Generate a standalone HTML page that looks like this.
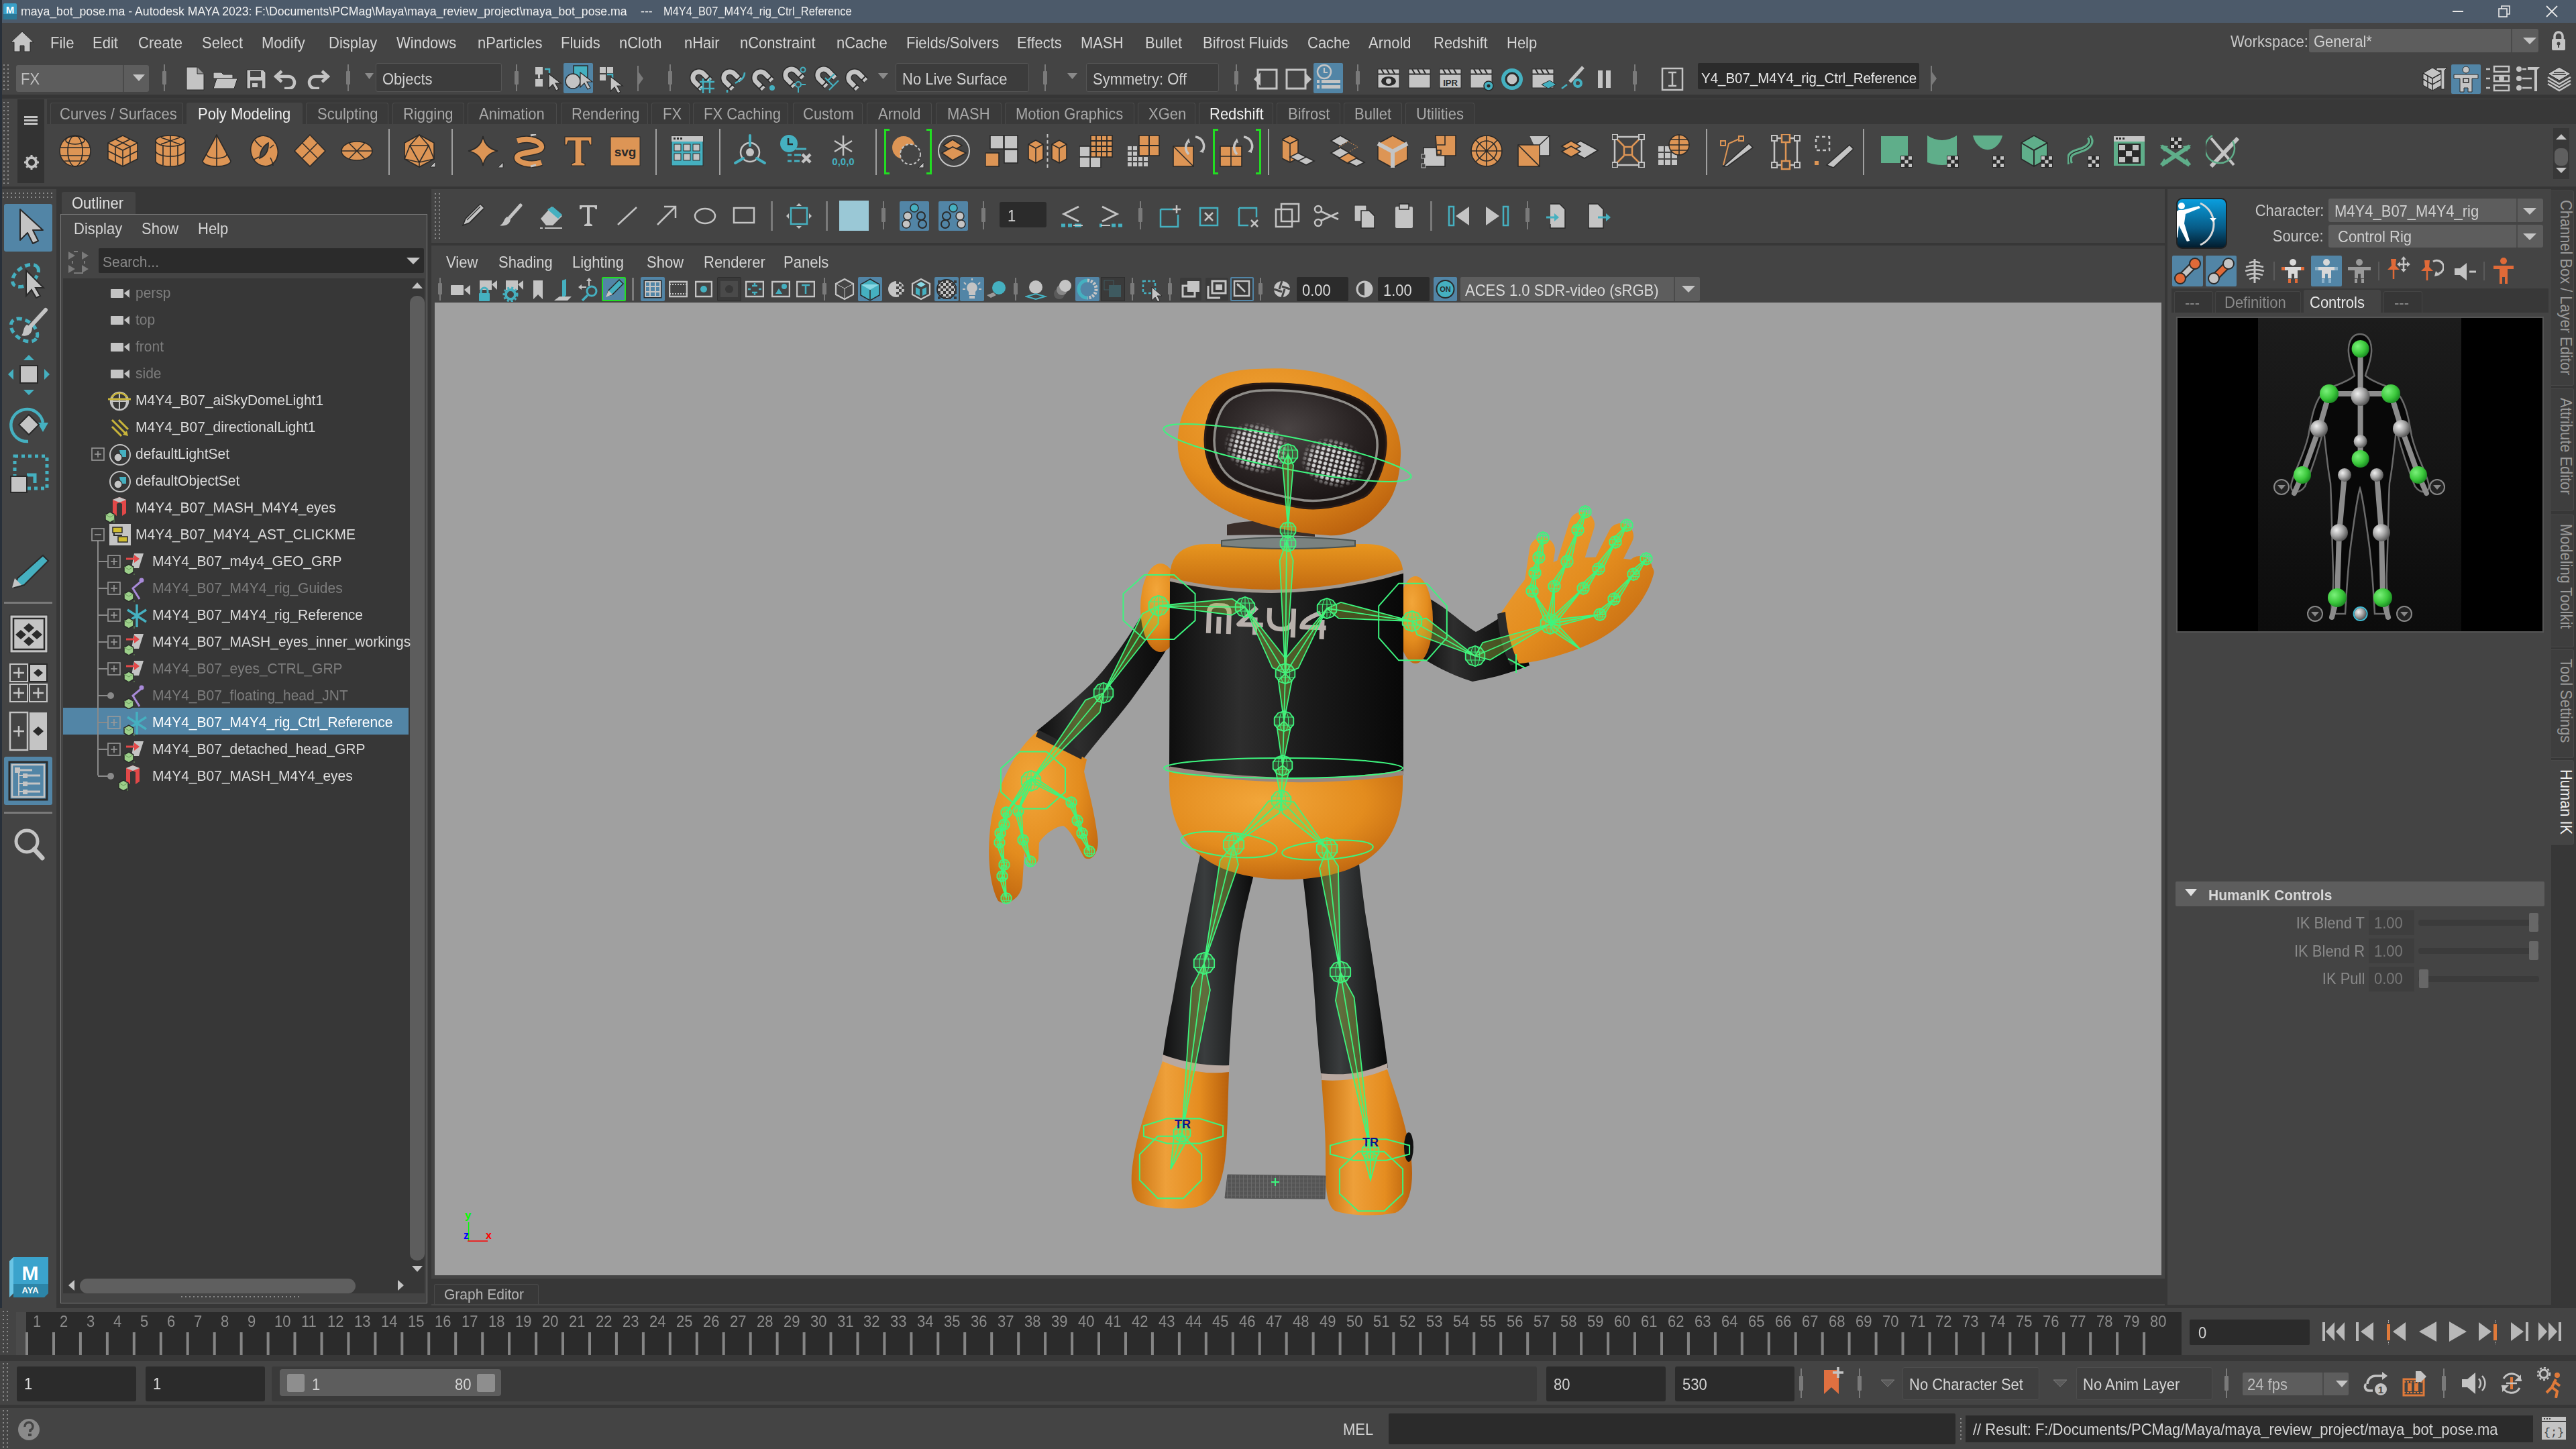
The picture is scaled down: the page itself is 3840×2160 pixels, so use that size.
<!DOCTYPE html><html><head><meta charset="utf-8"><style>
html,body{margin:0;padding:0;width:3840px;height:2160px;overflow:hidden;background:#444444;}
body{position:relative;font-family:"Liberation Sans",sans-serif;}
div,svg{position:absolute;box-sizing:border-box;}
.t{white-space:pre;line-height:normal;}
</style></head><body>
<div style="left:0px;top:0px;width:3840px;height:34px;background:#4c5a6a;"></div>
<div class="t" style="left:31px;top:5.8px;font-size:19.03px;color:#f2f2f2;transform-origin:left;transform:scaleX(0.93);">maya_bot_pose.ma - Autodesk MAYA 2023: F:\Documents\PCMag\Maya\maya_review_project\maya_bot_pose.ma</div>
<div class="t" style="left:955px;top:5.8px;font-size:19.03px;color:#f2f2f2;transform-origin:left;transform:scaleX(0.93);">---</div>
<div class="t" style="left:989px;top:7.0px;font-size:17.70px;color:#f2f2f2;transform-origin:left;transform:scaleX(0.93);">M4Y4_B07_M4Y4_rig_Ctrl_Reference</div>
<div style="left:0px;top:34px;width:3840px;height:58px;background:#444444;"></div>
<div class="t" style="left:74.5px;top:50.6px;font-size:23.66px;color:#d4d4d4;transform-origin:left;transform:scaleX(0.93);">File</div>
<div class="t" style="left:138px;top:50.6px;font-size:23.66px;color:#d4d4d4;transform-origin:left;transform:scaleX(0.93);">Edit</div>
<div class="t" style="left:206px;top:50.6px;font-size:23.66px;color:#d4d4d4;transform-origin:left;transform:scaleX(0.93);">Create</div>
<div class="t" style="left:300.6px;top:50.6px;font-size:23.66px;color:#d4d4d4;transform-origin:left;transform:scaleX(0.93);">Select</div>
<div class="t" style="left:390px;top:50.6px;font-size:23.66px;color:#d4d4d4;transform-origin:left;transform:scaleX(0.93);">Modify</div>
<div class="t" style="left:490px;top:50.6px;font-size:23.66px;color:#d4d4d4;transform-origin:left;transform:scaleX(0.93);">Display</div>
<div class="t" style="left:591px;top:50.6px;font-size:23.66px;color:#d4d4d4;transform-origin:left;transform:scaleX(0.93);">Windows</div>
<div class="t" style="left:712px;top:50.6px;font-size:23.66px;color:#d4d4d4;transform-origin:left;transform:scaleX(0.93);">nParticles</div>
<div class="t" style="left:836px;top:50.6px;font-size:23.66px;color:#d4d4d4;transform-origin:left;transform:scaleX(0.93);">Fluids</div>
<div class="t" style="left:923px;top:50.6px;font-size:23.66px;color:#d4d4d4;transform-origin:left;transform:scaleX(0.93);">nCloth</div>
<div class="t" style="left:1020px;top:50.6px;font-size:23.66px;color:#d4d4d4;transform-origin:left;transform:scaleX(0.93);">nHair</div>
<div class="t" style="left:1103px;top:50.6px;font-size:23.66px;color:#d4d4d4;transform-origin:left;transform:scaleX(0.93);">nConstraint</div>
<div class="t" style="left:1247px;top:50.6px;font-size:23.66px;color:#d4d4d4;transform-origin:left;transform:scaleX(0.93);">nCache</div>
<div class="t" style="left:1351px;top:50.6px;font-size:23.66px;color:#d4d4d4;transform-origin:left;transform:scaleX(0.93);">Fields/Solvers</div>
<div class="t" style="left:1516px;top:50.6px;font-size:23.66px;color:#d4d4d4;transform-origin:left;transform:scaleX(0.93);">Effects</div>
<div class="t" style="left:1611px;top:50.6px;font-size:23.66px;color:#d4d4d4;transform-origin:left;transform:scaleX(0.93);">MASH</div>
<div class="t" style="left:1707px;top:50.6px;font-size:23.66px;color:#d4d4d4;transform-origin:left;transform:scaleX(0.93);">Bullet</div>
<div class="t" style="left:1793px;top:50.6px;font-size:23.66px;color:#d4d4d4;transform-origin:left;transform:scaleX(0.93);">Bifrost Fluids</div>
<div class="t" style="left:1949px;top:50.6px;font-size:23.66px;color:#d4d4d4;transform-origin:left;transform:scaleX(0.93);">Cache</div>
<div class="t" style="left:2040px;top:50.6px;font-size:23.66px;color:#d4d4d4;transform-origin:left;transform:scaleX(0.93);">Arnold</div>
<div class="t" style="left:2137px;top:50.6px;font-size:23.66px;color:#d4d4d4;transform-origin:left;transform:scaleX(0.93);">Redshift</div>
<div class="t" style="left:2246px;top:50.6px;font-size:23.66px;color:#d4d4d4;transform-origin:left;transform:scaleX(0.93);">Help</div>
<div class="t" style="left:3325px;top:49.1px;font-size:23.66px;color:#c8c8c8;transform-origin:left;transform:scaleX(0.93);">Workspace:</div>
<div style="left:0px;top:92px;width:3840px;height:50px;background:#444444;"></div>
<div style="left:0px;top:141px;width:3840px;height:6px;background:#363636;"></div>
<div style="left:0px;top:147px;width:3840px;height:131px;background:#444444;"></div>
<div style="left:70px;top:148px;width:3770px;height:37px;background:#383838;"></div>
<div style="left:0px;top:278px;width:3840px;height:4px;background:#363636;"></div>
<div style="left:0px;top:282px;width:3840px;height:1668px;background:#373737;"></div>
<svg style="left:4px;top:4px" width="22" height="26" viewBox="0 0 22 26"><rect x="1" y="1" width="20" height="24" rx="2" fill="#3aa0c8"/><rect x="1" y="17" width="20" height="8" fill="#2a7796"/><text x="11" y="16" font-size="15" font-weight="bold" text-anchor="middle" fill="#fff" font-family="Liberation Sans">M</text></svg>
<svg style="left:3650px;top:10px" width="28" height="14" viewBox="0 0 28 14"><rect x="6" y="6" width="16" height="2" fill="#e8e8e8"/></svg>
<svg style="left:3722px;top:6px" width="22" height="22" viewBox="0 0 22 22"><rect x="3" y="7" width="12" height="12" fill="none" stroke="#e8e8e8" stroke-width="1.6"/><path d="M7 7V3h12v12h-4" fill="none" stroke="#e8e8e8" stroke-width="1.6"/></svg>
<svg style="left:3794px;top:7px" width="20" height="20" viewBox="0 0 20 20"><path d="M2 2L18 18M18 2L2 18" stroke="#e8e8e8" stroke-width="1.8"/></svg>
<svg style="left:14px;top:44px" width="38" height="36" viewBox="0 0 38 36"><path d="M19 3L2 19h5v14h9v-9h6v9h9V19h5z" fill="#c4c4c4" stroke="#2a2a2a" stroke-width="1"/></svg>
<div style="left:3442px;top:43px;width:342px;height:35px;background:#5d5d5d;border-radius:3px"></div>
<div style="left:3743px;top:43px;width:2px;height:35px;background:#4a4a4a;"></div>
<div class="t" style="left:3449px;top:49.1px;font-size:23.66px;color:#d0d0d0;transform-origin:left;transform:scaleX(0.93);">General*</div>
<svg style="left:3759px;top:54px" width="26" height="14" viewBox="0 0 26 14"><path d="M2 2h20L12 12z" fill="#c4c4c4"/></svg>
<svg style="left:3803px;top:45px" width="22" height="31" viewBox="0 0 22 31"><path d="M5 14V9a6 6 0 0 1 12 0v5" fill="none" stroke="#c4c4c4" stroke-width="3.5"/><rect x="1" y="13" width="20" height="17" rx="2" fill="#c4c4c4"/><circle cx="11" cy="20" r="2.5" fill="#444"/><rect x="10" y="20" width="2" height="6" fill="#444"/></svg>
<svg style="left:5px;top:94px;" width="12" height="44" viewBox="0 0 12 44"><rect x="0" y="2" width="2" height="2" fill="#8a8a8a"/><rect x="0" y="8" width="2" height="2" fill="#8a8a8a"/><rect x="0" y="14" width="2" height="2" fill="#8a8a8a"/><rect x="0" y="20" width="2" height="2" fill="#8a8a8a"/><rect x="0" y="26" width="2" height="2" fill="#8a8a8a"/><rect x="0" y="32" width="2" height="2" fill="#8a8a8a"/><rect x="0" y="38" width="2" height="2" fill="#8a8a8a"/><rect x="6" y="2" width="2" height="2" fill="#8a8a8a"/><rect x="6" y="8" width="2" height="2" fill="#8a8a8a"/><rect x="6" y="14" width="2" height="2" fill="#8a8a8a"/><rect x="6" y="20" width="2" height="2" fill="#8a8a8a"/><rect x="6" y="26" width="2" height="2" fill="#8a8a8a"/><rect x="6" y="32" width="2" height="2" fill="#8a8a8a"/><rect x="6" y="38" width="2" height="2" fill="#8a8a8a"/></svg>
<div style="left:24px;top:97px;width:198px;height:40px;background:#5d5d5d;border-radius:3px"></div>
<div style="left:183px;top:97px;width:2px;height:40px;background:#4a4a4a;"></div>
<div class="t" style="left:31px;top:104.6px;font-size:23.66px;color:#bdbdbd;transform-origin:left;transform:scaleX(0.93);">FX</div>
<svg style="left:196px;top:108px" width="26" height="16" viewBox="0 0 26 16"><path d="M2 3h18L11 13z" fill="#c4c4c4"/></svg>
<svg style="left:242px;top:96px;" width="6" height="40" viewBox="0 0 6 40"><rect x="2" y="0" width="2" height="40" fill="#7a7a7a"/><rect x="0" y="10" width="6" height="20" rx="1" fill="#7a7a7a"/></svg>
<svg style="left:276px;top:98px" width="30" height="38" viewBox="0 0 30 38"><path d="M2 2h16l10 10v24H2z" fill="#c4c4c4" stroke="#2a2a2a"/><path d="M18 2v10h10" fill="#999" stroke="#2a2a2a"/></svg>
<svg style="left:316px;top:104px" width="40" height="30" viewBox="0 0 40 30"><path d="M2 4h12l3 3h14v6H2z" fill="#c4c4c4" stroke="#2a2a2a"/><path d="M2 28l5-15h31l-5 15z" fill="#c4c4c4" stroke="#2a2a2a"/></svg>
<svg style="left:366px;top:102px" width="32" height="32" viewBox="0 0 32 32"><path d="M2 2h24l4 4v24H2z" fill="#c4c4c4" stroke="#2a2a2a"/><rect x="7" y="4" width="16" height="9" fill="#444"/><rect x="7" y="18" width="18" height="12" fill="#444"/><rect x="10" y="22" width="8" height="6" fill="#c4c4c4"/></svg>
<svg style="left:408px;top:103px" width="38" height="30" viewBox="0 0 38 30"><path d="M12 3L3 11l9 8" fill="none" stroke="#c4c4c4" stroke-width="4.5"/><path d="M4 11h18a9 9 0 0 1 0 18h-6" fill="none" stroke="#c4c4c4" stroke-width="4.5"/></svg>
<svg style="left:454px;top:103px" width="38" height="30" viewBox="0 0 38 30"><path d="M26 3l9 8-9 8" fill="none" stroke="#c4c4c4" stroke-width="4.5"/><path d="M34 11H16a9 9 0 0 0 0 18h6" fill="none" stroke="#c4c4c4" stroke-width="4.5"/></svg>
<svg style="left:516px;top:96px;" width="6" height="40" viewBox="0 0 6 40"><rect x="2" y="0" width="2" height="40" fill="#7a7a7a"/><rect x="0" y="10" width="6" height="20" rx="1" fill="#7a7a7a"/></svg>
<svg style="left:543px;top:108px" width="16" height="12" viewBox="0 0 16 12"><path d="M1 1h13L7.5 10z" fill="#8a8a8a"/></svg>
<div style="left:560px;top:94px;width:188px;height:43px;background:#3c3c3c;border:1px solid #555;border-radius:3px"></div>
<div class="t" style="left:570px;top:104.6px;font-size:23.66px;color:#d0d0d0;transform-origin:left;transform:scaleX(0.93);">Objects</div>
<svg style="left:767px;top:96px;" width="6" height="40" viewBox="0 0 6 40"><rect x="2" y="0" width="2" height="40" fill="#7a7a7a"/><rect x="0" y="10" width="6" height="20" rx="1" fill="#7a7a7a"/></svg>
<svg style="left:796px;top:96px" width="42" height="44" viewBox="0 0 42 44"><rect x="2" y="4" width="11" height="11" fill="#c4c4c4"/><rect x="6" y="15" width="3" height="6" fill="#c4c4c4"/><rect x="2" y="22" width="11" height="11" fill="#c4c4c4"/><path d="M16 7h7v6" fill="none" stroke="#45b0c0" stroke-width="2.5"/><path d="M22 14l0 22 6-6 5 9 4-2-5-9 8 0z" fill="#c4c4c4" stroke="#2a2a2a" stroke-width="1.2"/></svg>
<div style="left:840px;top:94px;width:44px;height:45px;background:#5285a6;border-radius:2px"></div>
<svg style="left:840px;top:94px" width="44" height="45" viewBox="0 0 44 45"><rect x="15" y="4" width="21" height="21" fill="#45b0c0" stroke="#2a2a2a" stroke-width="1.5"/><circle cx="14" cy="27" r="11" fill="#c4c4c4" stroke="#2a2a2a" stroke-width="1.5"/><path d="M25 14l0 22 6-6 5 9 4-2-5-9 8 0z" fill="#c4c4c4" stroke="#2a2a2a" stroke-width="1.2"/></svg>
<svg style="left:892px;top:96px" width="42" height="44" viewBox="0 0 42 44"><rect x="2" y="4" width="9" height="9" fill="#c4c4c4"/><rect x="13" y="4" width="9" height="9" fill="#c4c4c4"/><rect x="2" y="15" width="9" height="9" fill="#c4c4c4"/><path d="M13 15h8v6" fill="none" stroke="#45b0c0" stroke-width="2.5"/><path d="M18 18l0 22 6-6 5 9 4-2-5-9 8 0z" fill="#c4c4c4" stroke="#2a2a2a" stroke-width="1.2"/></svg>
<svg style="left:948px;top:96px" width="16" height="42" viewBox="0 0 16 42"><path d="M3 2v38" stroke="#7a7a7a" stroke-width="2"/><path d="M3 10l8 11-8 11z" fill="#7a7a7a"/></svg>
<svg style="left:996px;top:96px;" width="6" height="40" viewBox="0 0 6 40"><rect x="2" y="0" width="2" height="40" fill="#7a7a7a"/><rect x="0" y="10" width="6" height="20" rx="1" fill="#7a7a7a"/></svg>
<svg style="left:1026px;top:100px" width="40" height="40" viewBox="0 0 40 40"><g transform="rotate(-45 18 18)"><path d="M9 30V15a9 9 0 0 1 18 0v15" fill="none" stroke="#2a2a2a" stroke-width="10"/><path d="M9 30V15a9 9 0 0 1 18 0v15" fill="none" stroke="#c4c4c4" stroke-width="7"/><path d="M5 25h8M23 25h8" stroke="#2a2a2a" stroke-width="2"/></g><path d="M17 22h22M17 32h22M22 17v22M32 17v22" stroke="#45b0c0" stroke-width="2.5"/></svg>
<svg style="left:1072px;top:100px" width="40" height="40" viewBox="0 0 40 40"><g transform="rotate(-45 18 18)"><path d="M9 30V15a9 9 0 0 1 18 0v15" fill="none" stroke="#2a2a2a" stroke-width="10"/><path d="M9 30V15a9 9 0 0 1 18 0v15" fill="none" stroke="#c4c4c4" stroke-width="7"/><path d="M5 25h8M23 25h8" stroke="#2a2a2a" stroke-width="2"/></g><path d="M38 8c0 10-8 12-14 16" fill="none" stroke="#45b0c0" stroke-width="2.5"/><path d="M12 34v4" stroke="#45b0c0" stroke-width="2.5"/></svg>
<svg style="left:1118px;top:100px" width="40" height="40" viewBox="0 0 40 40"><g transform="rotate(-45 18 18)"><path d="M9 30V15a9 9 0 0 1 18 0v15" fill="none" stroke="#2a2a2a" stroke-width="10"/><path d="M9 30V15a9 9 0 0 1 18 0v15" fill="none" stroke="#c4c4c4" stroke-width="7"/><path d="M5 25h8M23 25h8" stroke="#2a2a2a" stroke-width="2"/></g><circle cx="33" cy="31" r="4" fill="#45b0c0"/></svg>
<svg style="left:1164px;top:96px" width="44" height="44" viewBox="0 0 44 44"><g transform="rotate(-45 18 18)"><path d="M9 30V15a9 9 0 0 1 18 0v15" fill="none" stroke="#2a2a2a" stroke-width="10"/><path d="M9 30V15a9 9 0 0 1 18 0v15" fill="none" stroke="#c4c4c4" stroke-width="7"/><path d="M5 25h8M23 25h8" stroke="#2a2a2a" stroke-width="2"/></g><circle cx="33" cy="8" r="3.5" fill="none" stroke="#45b0c0" stroke-width="2"/><circle cx="26" cy="30" r="4" fill="none" stroke="#45b0c0" stroke-width="2"/><path d="M26 35v7M31 30h6M19 30h2" stroke="#45b0c0" stroke-width="2"/></svg>
<svg style="left:1212px;top:96px" width="44" height="44" viewBox="0 0 44 44"><g transform="rotate(-45 18 18)"><path d="M9 30V15a9 9 0 0 1 18 0v15" fill="none" stroke="#2a2a2a" stroke-width="10"/><path d="M9 30V15a9 9 0 0 1 18 0v15" fill="none" stroke="#c4c4c4" stroke-width="7"/><path d="M5 25h8M23 25h8" stroke="#2a2a2a" stroke-width="2"/></g><path d="M18 20l12 12 8-8M22 24l10-10M30 32l-6 6" fill="none" stroke="#45b0c0" stroke-width="2.2"/></svg>
<svg style="left:1258px;top:100px" width="40" height="40" viewBox="0 0 40 40"><g transform="rotate(-45 18 18)"><path d="M9 30V15a9 9 0 0 1 18 0v15" fill="none" stroke="#2a2a2a" stroke-width="10"/><path d="M9 30V15a9 9 0 0 1 18 0v15" fill="none" stroke="#c4c4c4" stroke-width="7"/><path d="M5 25h8M23 25h8" stroke="#2a2a2a" stroke-width="2"/></g></svg>
<svg style="left:1308px;top:108px" width="18" height="12" viewBox="0 0 18 12"><path d="M1 1h15L8.5 10z" fill="#8a8a8a"/></svg>
<div style="left:1335px;top:94px;width:199px;height:43px;background:#3c3c3c;border:1px solid #555;border-radius:3px"></div>
<div class="t" style="left:1345px;top:104.6px;font-size:23.66px;color:#d0d0d0;transform-origin:left;transform:scaleX(0.93);">No Live Surface</div>
<svg style="left:1555px;top:96px;" width="6" height="40" viewBox="0 0 6 40"><rect x="2" y="0" width="2" height="40" fill="#7a7a7a"/><rect x="0" y="10" width="6" height="20" rx="1" fill="#7a7a7a"/></svg>
<svg style="left:1590px;top:108px" width="18" height="12" viewBox="0 0 18 12"><path d="M1 1h15L8.5 10z" fill="#8a8a8a"/></svg>
<div style="left:1619px;top:94px;width:198px;height:43px;background:#3c3c3c;border:1px solid #555;border-radius:3px"></div>
<div class="t" style="left:1629px;top:104.6px;font-size:23.66px;color:#d0d0d0;transform-origin:left;transform:scaleX(0.93);">Symmetry: Off</div>
<svg style="left:1840px;top:96px;" width="6" height="40" viewBox="0 0 6 40"><rect x="2" y="0" width="2" height="40" fill="#7a7a7a"/><rect x="0" y="10" width="6" height="20" rx="1" fill="#7a7a7a"/></svg>
<svg style="left:1866px;top:98px" width="40" height="40" viewBox="0 0 40 40"><path d="M3 20l10-10v20z" fill="#c4c4c4"/><rect x="9" y="6" width="28" height="28" fill="none" stroke="#c4c4c4" stroke-width="3"/></svg>
<svg style="left:1915px;top:98px" width="42" height="40" viewBox="0 0 42 40"><rect x="3" y="6" width="28" height="28" fill="none" stroke="#c4c4c4" stroke-width="3"/><path d="M30 10l10 10-10 10z" fill="#c4c4c4"/></svg>
<div style="left:1958px;top:94px;width:44px;height:45px;background:#5285a6;border-radius:2px"></div>
<svg style="left:1958px;top:94px" width="44" height="45" viewBox="0 0 44 45"><circle cx="16" cy="13" r="10" fill="none" stroke="#c4c4c4" stroke-width="2.5"/><path d="M16 7v7h5" stroke="#c4c4c4" stroke-width="2.2" fill="none"/><rect x="12" y="25" width="28" height="5" fill="#c4c4c4"/><rect x="12" y="33" width="28" height="5" fill="#c4c4c4"/><rect x="5" y="25" width="4" height="5" fill="#c4c4c4"/><rect x="5" y="33" width="4" height="5" fill="#c4c4c4"/></svg>
<svg style="left:2021px;top:96px;" width="6" height="40" viewBox="0 0 6 40"><rect x="2" y="0" width="2" height="40" fill="#7a7a7a"/><rect x="0" y="10" width="6" height="20" rx="1" fill="#7a7a7a"/></svg>
<svg style="left:2052px;top:98px" width="38" height="40" viewBox="0 0 38 40"><rect x="2" y="13" width="32" height="20" fill="#c4c4c4" stroke="#2a2a2a"/><path d="M2 5h32v7H2z" fill="#c4c4c4" stroke="#2a2a2a"/><path d="M7 5l4 7M15 5l4 7M23 5l4 7" stroke="#2a2a2a" stroke-width="2"/><ellipse cx="18" cy="23" rx="11" ry="7" fill="#2a2a2a"/><circle cx="18" cy="23" r="4" fill="#c4c4c4"/></svg>
<svg style="left:2098px;top:98px" width="38" height="40" viewBox="0 0 38 40"><rect x="2" y="13" width="32" height="20" fill="#c4c4c4" stroke="#2a2a2a"/><path d="M2 5h32v7H2z" fill="#c4c4c4" stroke="#2a2a2a"/><path d="M7 5l4 7M15 5l4 7M23 5l4 7" stroke="#2a2a2a" stroke-width="2"/></svg>
<svg style="left:2144px;top:98px" width="38" height="40" viewBox="0 0 38 40"><rect x="2" y="13" width="32" height="20" fill="#c4c4c4" stroke="#2a2a2a"/><path d="M2 5h32v7H2z" fill="#c4c4c4" stroke="#2a2a2a"/><path d="M7 5l4 7M15 5l4 7M23 5l4 7" stroke="#2a2a2a" stroke-width="2"/><text x="18" y="30" font-size="13" font-weight="bold" text-anchor="middle" fill="#2a2a2a" font-family="Liberation Sans">IPR</text></svg>
<svg style="left:2190px;top:98px" width="40" height="40" viewBox="0 0 40 40"><rect x="2" y="13" width="32" height="20" fill="#c4c4c4" stroke="#2a2a2a"/><path d="M2 5h32v7H2z" fill="#c4c4c4" stroke="#2a2a2a"/><path d="M7 5l4 7M15 5l4 7M23 5l4 7" stroke="#2a2a2a" stroke-width="2"/><circle cx="29" cy="30" r="7" fill="#45b0c0" stroke="#2a2a2a" stroke-width="1.5"/><circle cx="29" cy="30" r="2.5" fill="#2a2a2a"/></svg>
<svg style="left:2236px;top:100px" width="36" height="36" viewBox="0 0 36 36"><circle cx="18" cy="18" r="16" fill="#45b0c0"/><circle cx="18" cy="18" r="9" fill="#c4c4c4" stroke="#2a2a2a" stroke-width="3"/></svg>
<svg style="left:2282px;top:98px" width="40" height="40" viewBox="0 0 40 40"><rect x="2" y="13" width="32" height="20" fill="#c4c4c4" stroke="#2a2a2a"/><path d="M2 5h32v7H2z" fill="#c4c4c4" stroke="#2a2a2a"/><path d="M7 5l4 7M15 5l4 7M23 5l4 7" stroke="#2a2a2a" stroke-width="2"/><path d="M16 28l12-6 10 6-12 6z" fill="#45b0c0" stroke="#2a2a2a"/></svg>
<svg style="left:2326px;top:96px" width="40" height="42" viewBox="0 0 40 42"><path d="M14 26L34 4" stroke="#c4c4c4" stroke-width="5"/><circle cx="26" cy="28" r="7" fill="#45b0c0"/><circle cx="26" cy="28" r="3" fill="#444"/><path d="M2 36l8-6" stroke="#45b0c0" stroke-width="2.5"/></svg>
<svg style="left:2380px;top:103px" width="24" height="30" viewBox="0 0 24 30"><rect x="2" y="2" width="7" height="26" fill="#c4c4c4"/><rect x="14" y="2" width="7" height="26" fill="#c4c4c4"/></svg>
<svg style="left:2434px;top:96px;" width="6" height="40" viewBox="0 0 6 40"><rect x="2" y="0" width="2" height="40" fill="#7a7a7a"/><rect x="0" y="10" width="6" height="20" rx="1" fill="#7a7a7a"/></svg>
<svg style="left:2476px;top:98px" width="36" height="40" viewBox="0 0 36 40"><rect x="2" y="4" width="30" height="32" fill="none" stroke="#c4c4c4" stroke-width="2.5"/><path d="M11 10h12M11 30h12M17 10v20" stroke="#c4c4c4" stroke-width="2.5"/></svg>
<div style="left:2531px;top:94px;width:330px;height:39px;background:#2b2b2b;border-radius:2px"></div>
<div class="t" style="left:2536px;top:104.1px;font-size:22.04px;color:#e6e6e6;transform-origin:left;transform:scaleX(0.93);">Y4_B07_M4Y4_rig_Ctrl_Reference</div>
<svg style="left:2876px;top:96px" width="16" height="42" viewBox="0 0 16 42"><path d="M3 2v38" stroke="#7a7a7a" stroke-width="2"/><path d="M3 10l8 11-8 11z" fill="#7a7a7a"/></svg>
<svg style="left:3610px;top:97px" width="40" height="42" viewBox="0 0 40 42"><path d="M2 12l14-8 14 8v18l-14 8-14-8z" fill="#c4c4c4" stroke="#2a2a2a"/><path d="M2 12l14 8 14-8M16 20v18M9 16v18M2 21l14 8 14-8" stroke="#2a2a2a" stroke-width="1.5" fill="none"/><path d="M22 4h16l-4 4v28h-5V8h-7z" fill="#c4c4c4" stroke="#2a2a2a"/></svg>
<div style="left:3654px;top:96px;width:44px;height:44px;background:#5285a6;border-radius:2px"></div>
<svg style="left:3654px;top:96px" width="44" height="44" viewBox="0 0 44 44"><circle cx="22" cy="8" r="5" fill="#c4c4c4" stroke="#2a2a2a"/><path d="M4 15h36v6h-9v20h-6v-6h-6v6h-6V21H4z" fill="#c4c4c4" stroke="#2a2a2a"/><rect x="18" y="21" width="8" height="6" fill="none" stroke="#2a2a2a" stroke-width="1.5"/></svg>
<svg style="left:3704px;top:97px" width="38" height="42" viewBox="0 0 38 42"><path d="M2 6h6M2 20h6M2 34h6" stroke="#c4c4c4" stroke-width="2.5"/><rect x="14" y="2" width="22" height="8" fill="none" stroke="#c4c4c4" stroke-width="2.5"/><rect x="14" y="16" width="22" height="8" fill="none" stroke="#c4c4c4" stroke-width="2.5"/><circle cx="25" cy="20" r="4" fill="#c4c4c4"/><rect x="14" y="30" width="22" height="8" fill="none" stroke="#c4c4c4" stroke-width="2.5"/></svg>
<svg style="left:3750px;top:97px" width="38" height="42" viewBox="0 0 38 42"><circle cx="5" cy="6" r="4" fill="#c4c4c4"/><circle cx="5" cy="20" r="4" fill="#c4c4c4"/><circle cx="5" cy="34" r="4" fill="#c4c4c4"/><path d="M10 6h6M10 20h14M10 34h14" stroke="#c4c4c4" stroke-width="2.5"/><path d="M18 3h18l-4 4v32h-4V7h-10z" fill="#c4c4c4"/></svg>
<svg style="left:3796px;top:98px" width="38" height="40" viewBox="0 0 38 40"><path d="M19 2L36 12 19 22 2 12z" fill="#c4c4c4" stroke="#2a2a2a"/><path d="M2 17l17 10 17-10M2 22l17 10 17-10M2 27l17 10 17-10" fill="none" stroke="#c4c4c4" stroke-width="2.5"/><path d="M11 10h16M9 13h20" stroke="#2a2a2a" stroke-width="1.5"/></svg>
<svg style="left:5px;top:150px;" width="12" height="125" viewBox="0 0 12 125"><rect x="0" y="2" width="2" height="2" fill="#8a8a8a"/><rect x="0" y="8" width="2" height="2" fill="#8a8a8a"/><rect x="0" y="14" width="2" height="2" fill="#8a8a8a"/><rect x="0" y="20" width="2" height="2" fill="#8a8a8a"/><rect x="0" y="26" width="2" height="2" fill="#8a8a8a"/><rect x="0" y="32" width="2" height="2" fill="#8a8a8a"/><rect x="0" y="38" width="2" height="2" fill="#8a8a8a"/><rect x="0" y="44" width="2" height="2" fill="#8a8a8a"/><rect x="0" y="50" width="2" height="2" fill="#8a8a8a"/><rect x="0" y="56" width="2" height="2" fill="#8a8a8a"/><rect x="0" y="62" width="2" height="2" fill="#8a8a8a"/><rect x="0" y="68" width="2" height="2" fill="#8a8a8a"/><rect x="0" y="74" width="2" height="2" fill="#8a8a8a"/><rect x="0" y="80" width="2" height="2" fill="#8a8a8a"/><rect x="0" y="86" width="2" height="2" fill="#8a8a8a"/><rect x="0" y="92" width="2" height="2" fill="#8a8a8a"/><rect x="0" y="98" width="2" height="2" fill="#8a8a8a"/><rect x="0" y="104" width="2" height="2" fill="#8a8a8a"/><rect x="0" y="110" width="2" height="2" fill="#8a8a8a"/><rect x="0" y="116" width="2" height="2" fill="#8a8a8a"/><rect x="0" y="122" width="2" height="2" fill="#8a8a8a"/><rect x="6" y="2" width="2" height="2" fill="#8a8a8a"/><rect x="6" y="8" width="2" height="2" fill="#8a8a8a"/><rect x="6" y="14" width="2" height="2" fill="#8a8a8a"/><rect x="6" y="20" width="2" height="2" fill="#8a8a8a"/><rect x="6" y="26" width="2" height="2" fill="#8a8a8a"/><rect x="6" y="32" width="2" height="2" fill="#8a8a8a"/><rect x="6" y="38" width="2" height="2" fill="#8a8a8a"/><rect x="6" y="44" width="2" height="2" fill="#8a8a8a"/><rect x="6" y="50" width="2" height="2" fill="#8a8a8a"/><rect x="6" y="56" width="2" height="2" fill="#8a8a8a"/><rect x="6" y="62" width="2" height="2" fill="#8a8a8a"/><rect x="6" y="68" width="2" height="2" fill="#8a8a8a"/><rect x="6" y="74" width="2" height="2" fill="#8a8a8a"/><rect x="6" y="80" width="2" height="2" fill="#8a8a8a"/><rect x="6" y="86" width="2" height="2" fill="#8a8a8a"/><rect x="6" y="92" width="2" height="2" fill="#8a8a8a"/><rect x="6" y="98" width="2" height="2" fill="#8a8a8a"/><rect x="6" y="104" width="2" height="2" fill="#8a8a8a"/><rect x="6" y="110" width="2" height="2" fill="#8a8a8a"/><rect x="6" y="116" width="2" height="2" fill="#8a8a8a"/><rect x="6" y="122" width="2" height="2" fill="#8a8a8a"/></svg>
<div style="left:26px;top:148px;width:40px;height:125px;background:#333333;"></div>
<svg style="left:35px;top:172px" width="22" height="14" viewBox="0 0 22 14"><rect x="1" y="1" width="20" height="3" fill="#c4c4c4"/><rect x="1" y="6" width="20" height="3" fill="#c4c4c4"/><rect x="1" y="11" width="20" height="3" fill="#c4c4c4"/></svg>
<svg style="left:35px;top:230px" width="24" height="24" viewBox="0 0 24 24"><circle cx="12" cy="12" r="7" fill="none" stroke="#c4c4c4" stroke-width="4"/><rect x="10.5" y="1" width="3" height="5" fill="#c4c4c4" transform="rotate(0 12 12)"/><rect x="10.5" y="1" width="3" height="5" fill="#c4c4c4" transform="rotate(45 12 12)"/><rect x="10.5" y="1" width="3" height="5" fill="#c4c4c4" transform="rotate(90 12 12)"/><rect x="10.5" y="1" width="3" height="5" fill="#c4c4c4" transform="rotate(135 12 12)"/><rect x="10.5" y="1" width="3" height="5" fill="#c4c4c4" transform="rotate(180 12 12)"/><rect x="10.5" y="1" width="3" height="5" fill="#c4c4c4" transform="rotate(225 12 12)"/><rect x="10.5" y="1" width="3" height="5" fill="#c4c4c4" transform="rotate(270 12 12)"/><rect x="10.5" y="1" width="3" height="5" fill="#c4c4c4" transform="rotate(315 12 12)"/></svg>
<div style="left:74.5px;top:153px;width:198.5px;height:32px;background:#3a3a3a;border:1px solid #4a4a4a;border-bottom:none;border-radius:3px 3px 0 0"></div>
<div class="t" style="left:89px;top:156.6px;font-size:23.66px;color:#a8a8a8;transform-origin:left;transform:scaleX(0.93);">Curves / Surfaces</div>
<div style="left:278px;top:153px;width:173px;height:32px;background:#444444;border-radius:3px 3px 0 0"></div>
<div class="t" style="left:295px;top:156.6px;font-size:23.66px;color:#f0f0f0;transform-origin:left;transform:scaleX(0.93);">Poly Modeling</div>
<div style="left:456px;top:153px;width:123px;height:32px;background:#3a3a3a;border:1px solid #4a4a4a;border-bottom:none;border-radius:3px 3px 0 0"></div>
<div class="t" style="left:472.5px;top:156.6px;font-size:23.66px;color:#a8a8a8;transform-origin:left;transform:scaleX(0.93);">Sculpting</div>
<div style="left:585px;top:153px;width:107px;height:32px;background:#3a3a3a;border:1px solid #4a4a4a;border-bottom:none;border-radius:3px 3px 0 0"></div>
<div class="t" style="left:601px;top:156.6px;font-size:23.66px;color:#a8a8a8;transform-origin:left;transform:scaleX(0.93);">Rigging</div>
<div style="left:697px;top:153px;width:133px;height:32px;background:#3a3a3a;border:1px solid #4a4a4a;border-bottom:none;border-radius:3px 3px 0 0"></div>
<div class="t" style="left:714px;top:156.6px;font-size:23.66px;color:#a8a8a8;transform-origin:left;transform:scaleX(0.93);">Animation</div>
<div style="left:836px;top:153px;width:130px;height:32px;background:#3a3a3a;border:1px solid #4a4a4a;border-bottom:none;border-radius:3px 3px 0 0"></div>
<div class="t" style="left:851.7px;top:156.6px;font-size:23.66px;color:#a8a8a8;transform-origin:left;transform:scaleX(0.93);">Rendering</div>
<div style="left:971px;top:153px;width:56.59999999999991px;height:32px;background:#3a3a3a;border:1px solid #4a4a4a;border-bottom:none;border-radius:3px 3px 0 0"></div>
<div class="t" style="left:988px;top:156.6px;font-size:23.66px;color:#a8a8a8;transform-origin:left;transform:scaleX(0.93);">FX</div>
<div style="left:1032.5px;top:153px;width:142.5px;height:32px;background:#3a3a3a;border:1px solid #4a4a4a;border-bottom:none;border-radius:3px 3px 0 0"></div>
<div class="t" style="left:1049px;top:156.6px;font-size:23.66px;color:#a8a8a8;transform-origin:left;transform:scaleX(0.93);">FX Caching</div>
<div style="left:1181.6px;top:153px;width:104.40000000000009px;height:32px;background:#3a3a3a;border:1px solid #4a4a4a;border-bottom:none;border-radius:3px 3px 0 0"></div>
<div class="t" style="left:1196.5px;top:156.6px;font-size:23.66px;color:#a8a8a8;transform-origin:left;transform:scaleX(0.93);">Custom</div>
<div style="left:1292px;top:153px;width:97px;height:32px;background:#3a3a3a;border:1px solid #4a4a4a;border-bottom:none;border-radius:3px 3px 0 0"></div>
<div class="t" style="left:1308.8px;top:156.6px;font-size:23.66px;color:#a8a8a8;transform-origin:left;transform:scaleX(0.93);">Arnold</div>
<div style="left:1395px;top:153px;width:97.70000000000005px;height:32px;background:#3a3a3a;border:1px solid #4a4a4a;border-bottom:none;border-radius:3px 3px 0 0"></div>
<div class="t" style="left:1411.7px;top:156.6px;font-size:23.66px;color:#a8a8a8;transform-origin:left;transform:scaleX(0.93);">MASH</div>
<div style="left:1497.6px;top:153px;width:193.4000000000001px;height:32px;background:#3a3a3a;border:1px solid #4a4a4a;border-bottom:none;border-radius:3px 3px 0 0"></div>
<div class="t" style="left:1513.5px;top:156.6px;font-size:23.66px;color:#a8a8a8;transform-origin:left;transform:scaleX(0.93);">Motion Graphics</div>
<div style="left:1696px;top:153px;width:86px;height:32px;background:#3a3a3a;border:1px solid #4a4a4a;border-bottom:none;border-radius:3px 3px 0 0"></div>
<div class="t" style="left:1712px;top:156.6px;font-size:23.66px;color:#a8a8a8;transform-origin:left;transform:scaleX(0.93);">XGen</div>
<div style="left:1787px;top:153px;width:110.59999999999991px;height:32px;background:#3a3a3a;border:1px solid #4a4a4a;border-bottom:none;border-radius:3px 3px 0 0"></div>
<div class="t" style="left:1803px;top:156.6px;font-size:23.66px;color:#f0f0f0;transform-origin:left;transform:scaleX(0.93);">Redshift</div>
<div style="left:1902.6px;top:153px;width:95.40000000000009px;height:32px;background:#3a3a3a;border:1px solid #4a4a4a;border-bottom:none;border-radius:3px 3px 0 0"></div>
<div class="t" style="left:1919.5px;top:156.6px;font-size:23.66px;color:#a8a8a8;transform-origin:left;transform:scaleX(0.93);">Bifrost</div>
<div style="left:2003px;top:153px;width:87px;height:32px;background:#3a3a3a;border:1px solid #4a4a4a;border-bottom:none;border-radius:3px 3px 0 0"></div>
<div class="t" style="left:2019px;top:156.6px;font-size:23.66px;color:#a8a8a8;transform-origin:left;transform:scaleX(0.93);">Bullet</div>
<div style="left:2095px;top:153px;width:103px;height:32px;background:#3a3a3a;border:1px solid #4a4a4a;border-bottom:none;border-radius:3px 3px 0 0"></div>
<div class="t" style="left:2111px;top:156.6px;font-size:23.66px;color:#a8a8a8;transform-origin:left;transform:scaleX(0.93);">Utilities</div>
<div style="left:3806px;top:191px;width:24px;height:76px;background:#383838;"></div>
<svg style="left:3806px;top:196px" width="24" height="66" viewBox="0 0 24 66"><path d="M4 12l8-8 8 8z" fill="#c4c4c4"/><rect x="2" y="25" width="20" height="26" rx="8" fill="#5f5f5f"/><path d="M4 54l8 8 8-8z" fill="#c4c4c4"/></svg>
<svg style="left:88px;top:200px" width="48" height="50" viewBox="0 0 48 50"><circle cx="24" cy="25" r="23" fill="#dd9555" stroke="#2a2a2a" stroke-width="1.6"/><ellipse cx="24" cy="25" rx="11" ry="23" fill="none" stroke="#2a2a2a" stroke-width="1.6"/><path d="M2 20h44M3 32h42M8 40h32" stroke="#2a2a2a" stroke-width="1.6"/><ellipse cx="24" cy="9" rx="14" ry="6" fill="none" stroke="#2a2a2a" stroke-width="1.6"/></svg>
<svg style="left:159px;top:200px" width="48" height="50" viewBox="0 0 48 50"><path d="M24 2L46 13v24L24 48 2 37V13z" fill="#dd9555" stroke="#2a2a2a" stroke-width="1.6"/><path d="M2 13l22 11 22-11M24 24v24M13 7.5l22 11M35 7.5l-22 11M13 18.5v24M35 18.5v24M2 25l22 11 22-11" fill="none" stroke="#2a2a2a" stroke-width="1.6"/></svg>
<svg style="left:230px;top:200px" width="48" height="50" viewBox="0 0 48 50"><path d="M2 10a22 8 0 0 1 44 0v30a22 8 0 0 1-44 0z" fill="#dd9555" stroke="#2a2a2a" stroke-width="1.6"/><path d="M2 10a22 8 0 0 0 44 0M2 25a22 8 0 0 0 44 0M24 18v30M13 16v30M35 16v30M24 2v16M10 5l28 10M38 5l-28 10" fill="none" stroke="#2a2a2a" stroke-width="1.6"/></svg>
<svg style="left:299px;top:200px" width="48" height="50" viewBox="0 0 48 50"><path d="M24 1L3 40a21 8 0 0 0 42 0z" fill="#dd9555" stroke="#2a2a2a" stroke-width="1.6"/><path d="M24 1v47M9 30a15 6 0 0 0 30 0" fill="none" stroke="#2a2a2a" stroke-width="1.6"/></svg>
<svg style="left:370px;top:200px" width="48" height="50" viewBox="0 0 48 50"><ellipse cx="24" cy="25" rx="20" ry="23" transform="rotate(-18 24 25)" fill="#dd9555" stroke="#2a2a2a" stroke-width="1.6"/><path d="M17 36Q18 20 30 13Q31 30 17 36z" fill="#444" stroke="#2a2a2a" stroke-width="1.6"/><path d="M10 9q6 8 10 10M33 35q4 8 4 12M38 16l-6 5M8 38l8-4" stroke="#2a2a2a" stroke-width="1.6" fill="none"/></svg>
<svg style="left:438px;top:200px" width="48" height="50" viewBox="0 0 48 50"><path d="M24 1L47 25 24 48 1 25z" fill="#dd9555" stroke="#2a2a2a" stroke-width="1.6"/><path d="M12.5 13l23 23M35.5 13l-23 23" stroke="#2a2a2a" stroke-width="1.6"/></svg>
<svg style="left:508px;top:200px" width="48" height="50" viewBox="0 0 48 50"><ellipse cx="24" cy="25" rx="23" ry="14" fill="#dd9555" stroke="#2a2a2a" stroke-width="1.6"/><path d="M1 25h46M12 13l24 24M36 13L12 37" stroke="#2a2a2a" stroke-width="1.6"/></svg>
<div style="left:579px;top:192px;width:2px;height:69px;background:#a0a0a0;"></div>
<svg style="left:601px;top:200px" width="56" height="52" viewBox="0 0 56 52"><path d="M24 1l22 12v24L24 49 2 37V13z" fill="#dd9555" stroke="#2a2a2a" stroke-width="1.6"/><path d="M24 1L10 17h28zM10 17L2 37M38 17l8 20M10 17l14 25 14-25M2 37l22 5 22-5M24 42v7" fill="none" stroke="#2a2a2a" stroke-width="1.6"/><path d="M48 41v8h-8z" fill="#c4c4c4" stroke="#2a2a2a"/></svg>
<div style="left:673px;top:192px;width:2px;height:69px;background:#a0a0a0;"></div>
<svg style="left:696px;top:200px" width="56" height="52" viewBox="0 0 56 52"><path d="M24 3Q27 21 46 25Q27 29 24 47Q21 29 2 25Q21 21 24 3z" fill="#dd9555" stroke="#2a2a2a" stroke-width="1.6"/><path d="M54 42v8h-8z" fill="#c4c4c4" stroke="#2a2a2a"/></svg>
<svg style="left:765px;top:200px" width="50" height="50" viewBox="0 0 50 50"><path d="M6 10c20-6 38 2 36 10s-34 6-36 14 20 14 36 8" fill="none" stroke="#2a2a2a" stroke-width="11"/><path d="M6 10c20-6 38 2 36 10s-34 6-36 14 20 14 36 8" fill="none" stroke="#dd9555" stroke-width="8"/><path d="M26 2l8-2M26 48l8-2" stroke="#c4c4c4" stroke-width="3"/></svg>
<svg style="left:840px;top:200px" width="46" height="50" viewBox="0 0 46 50"><path d="M2 4h40v12h-3l-2-6h-10v32l5 2v3H12v-3l5-2V10H7l-2 6H2z" fill="#dd9555" stroke="#2a2a2a" stroke-width="1.2"/></svg>
<svg style="left:909px;top:200px" width="46" height="50" viewBox="0 0 46 50"><rect x="1" y="4" width="44" height="43" fill="#dd9555" stroke="#2a2a2a"/><text x="23" y="33" font-size="19" font-weight="bold" text-anchor="middle" fill="#2a2a2a" font-family="Liberation Sans">svg</text></svg>
<div style="left:977px;top:192px;width:2px;height:69px;background:#a0a0a0;"></div>
<svg style="left:1000px;top:200px" width="50" height="50" viewBox="0 0 50 50"><rect x="1" y="3" width="47" height="44" fill="#45b0c0" stroke="#2a2a2a"/><rect x="1" y="3" width="47" height="8" fill="#c4c4c4"/><rect x="4" y="5" width="3" height="3" fill="#2a2a2a"/><rect x="9" y="5" width="3" height="3" fill="#2a2a2a"/><rect x="14" y="5" width="3" height="3" fill="#2a2a2a"/><rect x="5" y="15" width="10" height="10" fill="#c4c4c4" stroke="#2a2a2a"/><rect x="19" y="15" width="10" height="10" fill="#c4c4c4" stroke="#2a2a2a"/><rect x="33" y="15" width="10" height="10" fill="#c4c4c4" stroke="#2a2a2a"/><rect x="5" y="29" width="10" height="10" fill="#c4c4c4" stroke="#2a2a2a"/><rect x="19" y="29" width="10" height="10" fill="#c4c4c4" stroke="#2a2a2a"/><rect x="33" y="29" width="10" height="10" fill="#c4c4c4" stroke="#2a2a2a"/></svg>
<div style="left:1072px;top:192px;width:2px;height:69px;background:#a0a0a0;"></div>
<svg style="left:1092px;top:200px" width="52" height="50" viewBox="0 0 52 50"><circle cx="26" cy="27" r="14" fill="none" stroke="#c4c4c4" stroke-width="2.5"/><circle cx="26" cy="27" r="6" fill="#c4c4c4"/><path d="M26 2v15M4 43l12-7M48 43l-12-7" stroke="#45b0c0" stroke-width="4" stroke-linecap="round"/></svg>
<svg style="left:1162px;top:200px" width="50" height="50" viewBox="0 0 50 50"><circle cx="14" cy="14" r="13" fill="#45b0c0"/><path d="M13 6v9h7" stroke="#2a2a2a" stroke-width="2.5" fill="none"/><path d="M24 22h16M12 31h6M22 31h10M12 40h6M22 40h8" stroke="#45b0c0" stroke-width="3"/><path d="M34 30l12 12M46 30L34 42" stroke="#c4c4c4" stroke-width="4.5"/></svg>
<svg style="left:1232px;top:200px" width="50" height="50" viewBox="0 0 50 50"><path d="M25 2v30M12 10l26 16M38 10L12 26" stroke="#c4c4c4" stroke-width="2.5"/><text x="25" y="46" font-size="15" font-weight="bold" text-anchor="middle" fill="#45b0c0" font-family="Liberation Sans">0,0,0</text></svg>
<div style="left:1305px;top:192px;width:2px;height:69px;background:#a0a0a0;"></div>
<div style="left:1318px;top:192px;width:3px;height:68px;background:#22dd22;"></div>
<div style="left:1318px;top:192px;width:8px;height:3px;background:#22dd22;"></div>
<div style="left:1318px;top:257px;width:8px;height:3px;background:#22dd22;"></div>
<div style="left:1386px;top:192px;width:3px;height:68px;background:#22dd22;"></div>
<div style="left:1381px;top:192px;width:8px;height:3px;background:#22dd22;"></div>
<div style="left:1381px;top:257px;width:8px;height:3px;background:#22dd22;"></div>
<svg style="left:1327px;top:200px" width="54" height="52" viewBox="0 0 54 52"><circle cx="20" cy="20" r="17" fill="#dd9555"/><circle cx="30" cy="30" r="15" fill="#444" stroke="#c4c4c4" stroke-width="2" stroke-dasharray="4 3"/><path d="M50 42v8h-8z" fill="#c4c4c4" stroke="#2a2a2a"/></svg>
<svg style="left:1398px;top:200px" width="50" height="50" viewBox="0 0 50 50"><circle cx="24" cy="25" r="23" fill="none" stroke="#c4c4c4" stroke-width="2"/><path d="M8 17l14-9 14 9-14 8z" fill="#dd9555" stroke="#2a2a2a" stroke-width="1.6"/><path d="M6 28l16-9 20 9-20 11z" fill="#dd9555" stroke="#2a2a2a" stroke-width="1.6"/></svg>
<svg style="left:1469px;top:200px" width="50" height="50" viewBox="0 0 50 50"><rect x="7" y="2" width="20" height="20" fill="#c4c4c4" stroke="#2a2a2a" stroke-width="1.6"/><rect x="28" y="2" width="20" height="20" fill="#c4c4c4" stroke="#2a2a2a" stroke-width="1.6"/><rect x="28" y="23" width="20" height="20" fill="#c4c4c4" stroke="#2a2a2a" stroke-width="1.6"/><rect x="0" y="28" width="20" height="20" fill="#dd9555" stroke="#2a2a2a" stroke-width="1.6"/></svg>
<svg style="left:1532px;top:200px" width="60" height="50" viewBox="0 0 60 50"><path d="M12 9l11 6v22l-11 6-11-6V15z" fill="#dd9555" stroke="#2a2a2a" stroke-width="1.6"/><path d="M1 15l11 6 11-6M12 21v22" fill="none" stroke="#2a2a2a" stroke-width="1.6"/><path d="M47 9l11 6v22l-11 6-11-6V15z" fill="#dd9555" stroke="#2a2a2a" stroke-width="1.6"/><path d="M36 15l11 6 11-6M47 21v22" fill="none" stroke="#2a2a2a" stroke-width="1.6"/><path d="M29.5 0v50" stroke="#c4c4c4" stroke-width="2" stroke-dasharray="5 4"/></svg>
<svg style="left:1609px;top:200px" width="50" height="50" viewBox="0 0 50 50"><rect x="0" y="18" width="16" height="16" fill="#c4c4c4" stroke="#2a2a2a" stroke-width="1.6"/><rect x="16" y="34" width="16" height="16" fill="#c4c4c4" stroke="#2a2a2a" stroke-width="1.6"/><rect x="0" y="34" width="16" height="16" fill="#c4c4c4" stroke="#2a2a2a" stroke-width="1.6"/><rect x="17" y="2" width="32" height="32" fill="#dd9555" stroke="#2a2a2a" stroke-width="1.6"/><path d="M25 2v32M33 2v32M41 2v32M17 10h32M17 18h32M17 26h32" stroke="#2a2a2a" stroke-width="1.8"/></svg>
<svg style="left:1680px;top:200px" width="50" height="50" viewBox="0 0 50 50"><rect x="18" y="2" width="30" height="30" fill="#dd9555" stroke="#2a2a2a" stroke-width="1.6"/><path d="M33 2v30M18 17h30" stroke="#2a2a2a" stroke-width="2"/><rect x="1" y="18" width="6" height="6" fill="#c4c4c4"/><rect x="9" y="18" width="6" height="6" fill="#c4c4c4"/><rect x="1" y="26" width="6" height="6" fill="#c4c4c4"/><rect x="9" y="26" width="6" height="6" fill="#c4c4c4"/><rect x="1" y="34" width="6" height="6" fill="#c4c4c4"/><rect x="9" y="34" width="6" height="6" fill="#c4c4c4"/><rect x="17" y="34" width="6" height="6" fill="#c4c4c4"/><rect x="25" y="34" width="6" height="6" fill="#c4c4c4"/><rect x="1" y="42" width="6" height="6" fill="#c4c4c4"/><rect x="9" y="42" width="6" height="6" fill="#c4c4c4"/><rect x="17" y="42" width="6" height="6" fill="#c4c4c4"/><rect x="25" y="42" width="6" height="6" fill="#c4c4c4"/></svg>
<svg style="left:1748px;top:200px" width="52" height="50" viewBox="0 0 52 50"><path d="M1 18h30v30H1z" fill="#dd9555" stroke="#2a2a2a" stroke-width="1.6"/><path d="M1 18l30 30" stroke="#2a2a2a" stroke-width="1.6"/><path d="M34 4a14 14 0 0 1 10 22M24 30a14 14 0 0 1-2-18" fill="none" stroke="#c4c4c4" stroke-width="3.5"/><path d="M40 26l6 2 0-7zM20 12l4-6 2 7z" fill="#c4c4c4"/></svg>
<div style="left:1808px;top:192px;width:3px;height:68px;background:#22dd22;"></div>
<div style="left:1808px;top:192px;width:8px;height:3px;background:#22dd22;"></div>
<div style="left:1808px;top:257px;width:8px;height:3px;background:#22dd22;"></div>
<div style="left:1877px;top:192px;width:3px;height:68px;background:#22dd22;"></div>
<div style="left:1872px;top:192px;width:8px;height:3px;background:#22dd22;"></div>
<div style="left:1872px;top:257px;width:8px;height:3px;background:#22dd22;"></div>
<svg style="left:1818px;top:200px" width="54" height="50" viewBox="0 0 54 50"><rect x="1" y="18" width="32" height="30" fill="#dd9555" stroke="#2a2a2a" stroke-width="1.6"/><path d="M17 18v30M1 33h32" stroke="#2a2a2a" stroke-width="1.6"/><path d="M36 4a14 14 0 0 1 10 22M26 30a14 14 0 0 1-2-18" fill="none" stroke="#c4c4c4" stroke-width="3.5"/><path d="M42 26l6 2 0-7zM22 12l4-6 2 7z" fill="#c4c4c4"/></svg>
<div style="left:1890px;top:192px;width:2px;height:69px;background:#a0a0a0;"></div>
<svg style="left:1911px;top:200px" width="50" height="50" viewBox="0 0 50 50"><path d="M12 2l12 6v28l-12 6-12-6V8z" fill="#dd9555" stroke="#2a2a2a" stroke-width="1.6"/><path d="M0 8l12 6 12-6M12 14v28" fill="none" stroke="#2a2a2a" stroke-width="1.6"/><path d="M24 28l12 6-12 6-12-6zM36 34l12 6-12 6-12-6z" fill="#c4c4c4" stroke="#2a2a2a" stroke-width="1.6"/></svg>
<svg style="left:1980px;top:200px" width="56" height="50" viewBox="0 0 56 50"><path d="M18 2l14 8-14 8-14-8z" fill="#c4c4c4" stroke="#2a2a2a" stroke-width="1.6"/><path d="M30 11l14 8-14 8-14-8z" fill="#444" stroke="#dd9555" stroke-dasharray="2 2"/><path d="M18 20l14 8-14 8-14-8z" fill="#c4c4c4" stroke="#2a2a2a" stroke-width="1.6"/><path d="M30 28l14 8-14 8-14-8z" fill="#dd9555" stroke="#2a2a2a" stroke-width="1.6"/><path d="M42 36l12 6-12 6-12-6z" fill="#c4c4c4" stroke="#2a2a2a" stroke-width="1.6"/></svg>
<svg style="left:2052px;top:200px" width="50" height="52" viewBox="0 0 50 52"><path d="M24 2l22 12v24L24 50 2 38V14z" fill="#dd9555" stroke="#2a2a2a" stroke-width="1.6"/><path d="M2 14l22 12 22-12M24 26v24" fill="none" stroke="#c4c4c4" stroke-width="6"/></svg>
<svg style="left:2118px;top:200px" width="56" height="52" viewBox="0 0 56 52"><rect x="4" y="20" width="32" height="28" fill="#c4c4c4" stroke="#2a2a2a" stroke-width="1.6"/><path d="M22 2h30v30H24z" fill="#dd9555" stroke="#2a2a2a" stroke-width="1.6"/><path d="M36 2v14H24" fill="none" stroke="#2a2a2a" stroke-width="1.6"/><rect x="24" y="24" width="6" height="6" fill="#dd9555" stroke="#2a2a2a" stroke-width="1.6"/><rect x="1" y="30" width="6" height="6" fill="#444" stroke="#c4c4c4"/><rect x="1" y="44" width="6" height="6" fill="#444" stroke="#c4c4c4"/></svg>
<svg style="left:2192px;top:200px" width="50" height="50" viewBox="0 0 50 50"><circle cx="24" cy="25" r="23" fill="#dd9555" stroke="#2a2a2a" stroke-width="1.6"/><circle cx="24" cy="25" r="15" fill="none" stroke="#2a2a2a" stroke-width="1.6"/><path d="M24 2v46M1 25h46M8 9l32 32M40 9L8 41" stroke="#2a2a2a" stroke-width="1.6"/></svg>
<svg style="left:2262px;top:200px" width="50" height="50" viewBox="0 0 50 50"><path d="M18 2h30v30H32" fill="#c4c4c4" stroke="#2a2a2a" stroke-width="1.6"/><path d="M1 16h32v32H1z" fill="#dd9555" stroke="#2a2a2a" stroke-width="1.6"/><path d="M1 16l32 32M33 16L48 2" stroke="#2a2a2a" stroke-width="1.6"/></svg>
<svg style="left:2326px;top:200px" width="58" height="50" viewBox="0 0 58 50"><path d="M30 10l26 14-20 12-26-14z" fill="#c4c4c4" stroke="#2a2a2a" stroke-width="1.6"/><path d="M2 18l14-8 14 8-14 8z" fill="#dd9555" stroke="#2a2a2a" stroke-width="1.6"/><path d="M2 26l14-8 14 8-14 8z" fill="#dd9555" stroke="#2a2a2a" stroke-width="1.6"/></svg>
<svg style="left:2403px;top:200px" width="50" height="50" viewBox="0 0 50 50"><rect x="4" y="4" width="40" height="42" fill="none" stroke="#c4c4c4" stroke-width="2.5"/><path d="M8 8l10 10M40 8L30 18M8 42l10-10M40 42L30 32" stroke="#dd9555" stroke-width="2.5"/><rect x="18" y="19" width="12" height="12" fill="none" stroke="#dd9555" stroke-width="2.5"/><rect x="0" y="0" width="8" height="8" fill="#444" stroke="#c4c4c4" stroke-width="2"/><rect x="40" y="0" width="8" height="8" fill="#444" stroke="#c4c4c4" stroke-width="2"/><rect x="0" y="42" width="8" height="8" fill="#444" stroke="#c4c4c4" stroke-width="2"/><rect x="40" y="42" width="8" height="8" fill="#444" stroke="#c4c4c4" stroke-width="2"/></svg>
<svg style="left:2471px;top:200px" width="50" height="50" viewBox="0 0 50 50"><rect x="1" y="18" width="8" height="8" fill="#c4c4c4"/><rect x="11" y="18" width="8" height="8" fill="#c4c4c4"/><rect x="21" y="18" width="8" height="8" fill="#c4c4c4"/><rect x="1" y="28" width="8" height="8" fill="#c4c4c4"/><rect x="11" y="28" width="8" height="8" fill="#c4c4c4"/><rect x="21" y="28" width="8" height="8" fill="#c4c4c4"/><rect x="1" y="38" width="8" height="8" fill="#c4c4c4"/><rect x="11" y="38" width="8" height="8" fill="#c4c4c4"/><rect x="21" y="38" width="8" height="8" fill="#c4c4c4"/><circle cx="32" cy="16" r="15" fill="#dd9555" stroke="#2a2a2a" stroke-width="1.6"/><path d="M17 16h30M32 1v30M20 8h24M20 24h24" stroke="#2a2a2a" stroke-width="1.6"/></svg>
<div style="left:2543px;top:192px;width:2px;height:69px;background:#a0a0a0;"></div>
<svg style="left:2563px;top:200px" width="56" height="50" viewBox="0 0 56 50"><path d="M6 46L14 14 32 6" fill="none" stroke="#dd9555" stroke-width="2"/><rect x="2" y="10" width="7" height="7" fill="#444" stroke="#dd9555" stroke-width="2"/><rect x="29" y="3" width="7" height="7" fill="#444" stroke="#dd9555" stroke-width="2"/><path d="M6 48l38-34 6 6-38 28z" fill="#c4c4c4" stroke="#2a2a2a" stroke-width="1.6"/></svg>
<svg style="left:2637px;top:200px" width="52" height="54" viewBox="0 0 52 54"><path d="M8 6v40M42 6v40M8 6h34M8 46h34" stroke="#c4c4c4" stroke-width="2.5"/><path d="M25 6v40" stroke="#dd9555" stroke-width="2.5"/><rect x="4" y="2" width="8" height="8" fill="#444" stroke="#c4c4c4" stroke-width="2"/><rect x="38" y="2" width="8" height="8" fill="#444" stroke="#c4c4c4" stroke-width="2"/><rect x="4" y="42" width="8" height="8" fill="#444" stroke="#c4c4c4" stroke-width="2"/><rect x="38" y="42" width="8" height="8" fill="#444" stroke="#c4c4c4" stroke-width="2"/><rect x="19" y="0" width="12" height="12" fill="#444" stroke="#dd9555" stroke-width="2.5"/><rect x="19" y="40" width="12" height="12" fill="#444" stroke="#dd9555" stroke-width="2.5"/></svg>
<svg style="left:2703px;top:200px" width="60" height="50" viewBox="0 0 60 50"><rect x="4" y="4" width="20" height="20" fill="none" stroke="#c4c4c4" stroke-width="2.5" stroke-dasharray="5 4"/><rect x="2" y="40" width="6" height="6" fill="#dd9555"/><path d="M20 46l34-30 6 6-30 28z" fill="#c4c4c4" stroke="#2a2a2a" stroke-width="1.6"/></svg>
<div style="left:2777px;top:192px;width:2px;height:69px;background:#a0a0a0;"></div>
<svg style="left:2803px;top:200px" width="52" height="50" viewBox="0 0 52 50"><rect x="1" y="3" width="40" height="40" fill="#5fae8a"/><rect x="30" y="32" width="18" height="18" fill="#2a2a2a"/><rect x="31.0" y="33.0" width="5" height="5" fill="#c4c4c4"/><rect x="42.0" y="33.0" width="5" height="5" fill="#c4c4c4"/><rect x="36.5" y="38.5" width="5" height="5" fill="#c4c4c4"/><rect x="31.0" y="44.0" width="5" height="5" fill="#c4c4c4"/><rect x="42.0" y="44.0" width="5" height="5" fill="#c4c4c4"/></svg>
<svg style="left:2872px;top:200px" width="52" height="50" viewBox="0 0 52 50"><path d="M1 2q22 14 44 0v40q-22 8-44 0z" fill="#5fae8a"/><rect x="30" y="32" width="18" height="18" fill="#2a2a2a"/><rect x="31.0" y="33.0" width="5" height="5" fill="#c4c4c4"/><rect x="42.0" y="33.0" width="5" height="5" fill="#c4c4c4"/><rect x="36.5" y="38.5" width="5" height="5" fill="#c4c4c4"/><rect x="31.0" y="44.0" width="5" height="5" fill="#c4c4c4"/><rect x="42.0" y="44.0" width="5" height="5" fill="#c4c4c4"/></svg>
<svg style="left:2940px;top:200px" width="52" height="50" viewBox="0 0 52 50"><path d="M1 2q22 22 44 0a23 22 0 0 1-44 0z" fill="#5fae8a"/><path d="M1 2a23 30 0 0 0 44 0" fill="#5fae8a"/><rect x="30" y="32" width="18" height="18" fill="#2a2a2a"/><rect x="31.0" y="33.0" width="5" height="5" fill="#c4c4c4"/><rect x="42.0" y="33.0" width="5" height="5" fill="#c4c4c4"/><rect x="36.5" y="38.5" width="5" height="5" fill="#c4c4c4"/><rect x="31.0" y="44.0" width="5" height="5" fill="#c4c4c4"/><rect x="42.0" y="44.0" width="5" height="5" fill="#c4c4c4"/></svg>
<svg style="left:3012px;top:200px" width="52" height="50" viewBox="0 0 52 50"><path d="M20 2l20 11v24L20 48 1 37V13z" fill="#5fae8a" stroke="#2a2a2a" stroke-width="1.6"/><path d="M1 13l19 11 20-11M20 24v24" fill="none" stroke="#2a2a2a" stroke-width="2"/><rect x="30" y="32" width="18" height="18" fill="#2a2a2a"/><rect x="31.0" y="33.0" width="5" height="5" fill="#c4c4c4"/><rect x="42.0" y="33.0" width="5" height="5" fill="#c4c4c4"/><rect x="36.5" y="38.5" width="5" height="5" fill="#c4c4c4"/><rect x="31.0" y="44.0" width="5" height="5" fill="#c4c4c4"/><rect x="42.0" y="44.0" width="5" height="5" fill="#c4c4c4"/></svg>
<svg style="left:3082px;top:200px" width="52" height="50" viewBox="0 0 52 50"><path d="M4 44c-6-20 12-16 24-24s4-16 4-16" fill="none" stroke="#5fae8a" stroke-width="8"/><path d="M4 44c-6-20 12-16 24-24s4-16 4-16" fill="none" stroke="#2a2a2a" stroke-width="1.5"/><rect x="30" y="32" width="18" height="18" fill="#2a2a2a"/><rect x="31.0" y="33.0" width="5" height="5" fill="#c4c4c4"/><rect x="42.0" y="33.0" width="5" height="5" fill="#c4c4c4"/><rect x="36.5" y="38.5" width="5" height="5" fill="#c4c4c4"/><rect x="31.0" y="44.0" width="5" height="5" fill="#c4c4c4"/><rect x="42.0" y="44.0" width="5" height="5" fill="#c4c4c4"/></svg>
<svg style="left:3150px;top:200px" width="50" height="50" viewBox="0 0 50 50"><rect x="1" y="3" width="46" height="44" fill="#5fae8a"/><rect x="1" y="3" width="46" height="8" fill="#c4c4c4"/><rect x="4" y="5" width="3" height="3" fill="#2a2a2a"/><rect x="9" y="5" width="3" height="3" fill="#2a2a2a"/><rect x="14" y="5" width="3" height="3" fill="#2a2a2a"/><rect x="7" y="14" width="34" height="30" fill="#2a2a2a"/><rect x="9" y="16" width="9" height="8" fill="#c4c4c4"/><rect x="29" y="16" width="9" height="8" fill="#c4c4c4"/><rect x="19" y="25" width="9" height="8" fill="#c4c4c4"/><rect x="9" y="34" width="9" height="8" fill="#c4c4c4"/><rect x="29" y="34" width="9" height="8" fill="#c4c4c4"/></svg>
<svg style="left:3218px;top:200px" width="52" height="50" viewBox="0 0 52 50"><path d="M4 46L46 18M4 18l42 28" stroke="#5fae8a" stroke-width="6"/><path d="M2 46l12-2-6-8zM48 46l-12-2 6-8zM2 16l12 2-6 8zM48 16l-12 2 6 8z" fill="#5fae8a"/><rect x="17" y="4" width="18" height="18" fill="#2a2a2a"/><rect x="18.0" y="5.0" width="5" height="5" fill="#c4c4c4"/><rect x="29.0" y="5.0" width="5" height="5" fill="#c4c4c4"/><rect x="23.5" y="10.5" width="5" height="5" fill="#c4c4c4"/><rect x="18.0" y="16.0" width="5" height="5" fill="#c4c4c4"/><rect x="29.0" y="16.0" width="5" height="5" fill="#c4c4c4"/></svg>
<svg style="left:3288px;top:200px" width="52" height="50" viewBox="0 0 52 50"><path d="M8 48L48 6" stroke="#c4c4c4" stroke-width="6"/><path d="M8 6l34 40" stroke="#c4c4c4" stroke-width="4"/><path d="M10 2a22 22 0 1 0 30 8" fill="none" stroke="#5fae8a" stroke-width="2.5"/></svg>
<div style="left:0px;top:282px;width:84px;height:1668px;background:#444444;"></div>
<svg style="left:0px;top:287px;" width="84" height="8" viewBox="0 0 84 8"><rect x="4" y="0" width="2" height="2" fill="#8a8a8a"/><rect x="4" y="6" width="2" height="2" fill="#8a8a8a"/><rect x="10" y="0" width="2" height="2" fill="#8a8a8a"/><rect x="10" y="6" width="2" height="2" fill="#8a8a8a"/><rect x="16" y="0" width="2" height="2" fill="#8a8a8a"/><rect x="16" y="6" width="2" height="2" fill="#8a8a8a"/><rect x="22" y="0" width="2" height="2" fill="#8a8a8a"/><rect x="22" y="6" width="2" height="2" fill="#8a8a8a"/><rect x="28" y="0" width="2" height="2" fill="#8a8a8a"/><rect x="28" y="6" width="2" height="2" fill="#8a8a8a"/><rect x="34" y="0" width="2" height="2" fill="#8a8a8a"/><rect x="34" y="6" width="2" height="2" fill="#8a8a8a"/><rect x="40" y="0" width="2" height="2" fill="#8a8a8a"/><rect x="40" y="6" width="2" height="2" fill="#8a8a8a"/><rect x="46" y="0" width="2" height="2" fill="#8a8a8a"/><rect x="46" y="6" width="2" height="2" fill="#8a8a8a"/><rect x="52" y="0" width="2" height="2" fill="#8a8a8a"/><rect x="52" y="6" width="2" height="2" fill="#8a8a8a"/><rect x="58" y="0" width="2" height="2" fill="#8a8a8a"/><rect x="58" y="6" width="2" height="2" fill="#8a8a8a"/><rect x="64" y="0" width="2" height="2" fill="#8a8a8a"/><rect x="64" y="6" width="2" height="2" fill="#8a8a8a"/><rect x="70" y="0" width="2" height="2" fill="#8a8a8a"/><rect x="70" y="6" width="2" height="2" fill="#8a8a8a"/><rect x="76" y="0" width="2" height="2" fill="#8a8a8a"/><rect x="76" y="6" width="2" height="2" fill="#8a8a8a"/></svg>
<div style="left:92px;top:286px;width:110px;height:33px;background:#444444;border-radius:3px 3px 0 0"></div>
<div class="t" style="left:107px;top:289.6px;font-size:23.66px;color:#e0e0e0;transform-origin:left;transform:scaleX(0.93);">Outliner</div>
<div style="left:90px;top:319px;width:547px;height:1624px;background:#444444;border:1px solid #7a7a7a"></div>
<div class="t" style="left:110px;top:327.6px;font-size:23.66px;color:#d4d4d4;transform-origin:left;transform:scaleX(0.93);">Display</div>
<div class="t" style="left:211px;top:327.6px;font-size:23.66px;color:#d4d4d4;transform-origin:left;transform:scaleX(0.93);">Show</div>
<div class="t" style="left:295px;top:327.6px;font-size:23.66px;color:#d4d4d4;transform-origin:left;transform:scaleX(0.93);">Help</div>
<div style="left:147px;top:370px;width:485px;height:37px;background:#2b2b2b;border-radius:2px"></div>
<div class="t" style="left:153px;top:377.6px;font-size:22.58px;color:#8a8a8a;transform-origin:left;transform:scaleX(0.93);">Search...</div>
<div style="left:94px;top:415px;width:539px;height:1513px;background:#373737;"></div>
<div style="left:611px;top:441px;width:22px;height:1438px;background:#5d5d5d;border-radius:10px"></div>
<div style="left:119px;top:1906px;width:411px;height:22px;background:#5f5f5f;border-radius:11px"></div>
<div style="left:6px;top:304px;width:72px;height:71px;background:#5285a6;border-radius:3px"></div>
<svg style="left:6px;top:304px" width="72" height="71" viewBox="0 0 72 71"><path d="M24 8v46l11-11 8 16 8-4-8-16h15z" fill="#c4c4c4" stroke="#2a2a2a" stroke-width="2" stroke-linejoin="round"/></svg>
<svg style="left:6px;top:385px" width="72" height="60" viewBox="0 0 72 60"><ellipse cx="32" cy="26" rx="22" ry="13" transform="rotate(-35 32 26)" fill="none" stroke="#45b0c0" stroke-width="5" stroke-dasharray="8 5"/><path d="M33 18v38l8-9 7 12 6-3-7-12h12z" fill="#c4c4c4" stroke="#2a2a2a" stroke-width="2"/></svg>
<svg style="left:6px;top:456px" width="72" height="62" viewBox="0 0 72 62"><ellipse cx="30" cy="36" rx="22" ry="14" transform="rotate(35 30 36)" fill="none" stroke="#45b0c0" stroke-width="5" stroke-dasharray="8 5"/><path d="M62 6L40 30" stroke="#c4c4c4" stroke-width="6" stroke-linecap="round"/><path d="M26 44c6 2 16 0 16-12l-8-4c-6 4-4 12-8 16z" fill="#c4c4c4"/></svg>
<svg style="left:6px;top:525px" width="72" height="68" viewBox="0 0 72 68"><rect x="24" y="20" width="26" height="26" fill="#c4c4c4" stroke="#2a2a2a" stroke-width="2"/><path d="M37 4l8 8H29zM37 64l8-8H29zM6 33l8-8v16zM68 33l-8-8v16z" fill="#45b0c0"/></svg>
<svg style="left:6px;top:600px" width="72" height="66" viewBox="0 0 72 66"><path d="M36 58A24 24 0 1 1 58 30" fill="none" stroke="#45b0c0" stroke-width="4.5"/><path d="M50 30h16l-8 14z" fill="#45b0c0"/><path d="M37 18l15 15-15 15-15-15z" fill="#c4c4c4" stroke="#2a2a2a" stroke-width="2"/></svg>
<svg style="left:6px;top:676px" width="72" height="62" viewBox="0 0 72 62"><rect x="16" y="4" width="48" height="48" fill="none" stroke="#45b0c0" stroke-width="5" stroke-dasharray="5 5"/><path d="M34 32h12v12" fill="none" stroke="#45b0c0" stroke-width="5"/><rect x="10" y="34" width="24" height="24" fill="#c4c4c4" stroke="#2a2a2a" stroke-width="2"/></svg>
<svg style="left:6px;top:820px" width="72" height="62" viewBox="0 0 72 62"><path d="M58 8l8 8-36 36-14 4 4-14z" fill="#45b0c0" stroke="#2a2a2a" stroke-width="2"/><path d="M16 42l-4 14 14-4z" fill="#c4c4c4"/></svg>
<div style="left:6px;top:897px;width:72px;height:3px;background:#7a7a7a;"></div>
<svg style="left:6px;top:915px" width="72" height="62" viewBox="0 0 72 62"><rect x="9" y="2" width="56" height="56" fill="#c4c4c4" stroke="#2a2a2a" stroke-width="1"/><rect x="14" y="7" width="46" height="46" fill="none" stroke="#2a2a2a" stroke-width="2.5"/><path d="M37 14l8 7-8 7-8-7zM25 24l8 7-8 7-8-7zM49 24l8 7-8 7-8-7zM37 34l8 7-8 7-8-7z" fill="#2a2a2a"/></svg>
<svg style="left:6px;top:986px" width="72" height="64" viewBox="0 0 72 64"><rect x="9" y="4" width="26" height="26" fill="#444" stroke="#2a2a2a" stroke-width="2"/><rect x="38" y="4" width="26" height="26" fill="#c4c4c4" stroke="#2a2a2a" stroke-width="2"/><rect x="9" y="34" width="26" height="26" fill="#444" stroke="#2a2a2a" stroke-width="2"/><rect x="38" y="34" width="26" height="26" fill="#444" stroke="#2a2a2a" stroke-width="2"/><path d="M22 9v16M14 17h16M22 39v16M14 47h16M51 39v16M43 47h16" stroke="#c4c4c4" stroke-width="2.5"/><rect x="9" y="4" width="26" height="26" fill="none" stroke="#c4c4c4" stroke-width="2"/><rect x="9" y="34" width="26" height="26" fill="none" stroke="#c4c4c4" stroke-width="2"/><rect x="38" y="34" width="26" height="26" fill="none" stroke="#c4c4c4" stroke-width="2"/><path d="M51 11l7 6-7 6-7-6z" fill="#2a2a2a"/></svg>
<svg style="left:6px;top:1060px" width="72" height="62" viewBox="0 0 72 62"><rect x="9" y="2" width="26" height="56" fill="none" stroke="#c4c4c4" stroke-width="2.5"/><rect x="38" y="2" width="26" height="56" fill="#c4c4c4"/><path d="M22 22v16M14 30h16" stroke="#c4c4c4" stroke-width="2.5"/><path d="M51 23l8 7-8 7-8-7z" fill="#2a2a2a"/></svg>
<div style="left:6px;top:1128px;width:72px;height:72px;background:#5285a6;border-radius:3px"></div>
<svg style="left:6px;top:1128px" width="72" height="72" viewBox="0 0 72 72"><rect x="8" y="8" width="56" height="56" fill="none" stroke="#2a2a2a" stroke-width="3"/><rect x="12" y="12" width="48" height="48" fill="none" stroke="#c4c4c4" stroke-width="2.5"/><path d="M22 20v38M22 28h8M22 40h8M22 52h8" stroke="#c4c4c4" stroke-width="2"/><rect x="16" y="16" width="8" height="8" fill="#c4c4c4"/><path d="M24 20h18M34 28h20M34 40h20M34 52h20" stroke="#c4c4c4" stroke-width="3"/><rect x="28" y="25" width="7" height="7" fill="#c4c4c4"/><rect x="28" y="37" width="7" height="7" fill="#c4c4c4"/><rect x="28" y="49" width="7" height="7" fill="#c4c4c4"/></svg>
<div style="left:6px;top:1210px;width:72px;height:3px;background:#7a7a7a;"></div>
<svg style="left:6px;top:1228px" width="72" height="60" viewBox="0 0 72 60"><circle cx="34" cy="26" r="16" fill="none" stroke="#c4c4c4" stroke-width="5"/><path d="M45 38l12 13" stroke="#c4c4c4" stroke-width="7" stroke-linecap="round"/></svg>
<svg style="left:12px;top:1870px" width="62" height="68" viewBox="0 0 62 68"><path d="M8 4h46l6 6v48l-6 6H8z" fill="#2c85a8"/><path d="M2 10l6-6v54l-6 6z" fill="#6ac4e4"/><rect x="8" y="4" width="52" height="40" fill="#3ba3cc"/><text x="33" y="38" font-size="30" font-weight="bold" text-anchor="middle" fill="#fff" font-family="Liberation Sans">M</text><text x="33" y="58" font-size="13" font-weight="bold" text-anchor="middle" fill="#fff" font-family="Liberation Sans">AYA</text></svg>
<div style="left:0px;top:0px;width:3px;height:2160px;background:#28303a;"></div>
<div style="left:94px;top:1055px;width:515px;height:40px;background:#5285a6;"></div>
<div style="left:145px;top:806px;width:2px;height:350px;background:#8a8a8a;"></div>
<svg style="left:164px;top:426.5px" width="30" height="20" viewBox="0 0 30 20"><rect x="1" y="4" width="19" height="13" rx="1" fill="#c4c4c4"/><path d="M21 10l8-6v13z" fill="#c4c4c4"/></svg>
<div class="t" style="left:202px;top:424.1px;font-size:22.58px;color:#7d7d7d;transform-origin:left;transform:scaleX(0.93);">persp</div>
<svg style="left:164px;top:466.5px" width="30" height="20" viewBox="0 0 30 20"><rect x="1" y="4" width="19" height="13" rx="1" fill="#c4c4c4"/><path d="M21 10l8-6v13z" fill="#c4c4c4"/></svg>
<div class="t" style="left:202px;top:464.1px;font-size:22.58px;color:#7d7d7d;transform-origin:left;transform:scaleX(0.93);">top</div>
<svg style="left:164px;top:506.5px" width="30" height="20" viewBox="0 0 30 20"><rect x="1" y="4" width="19" height="13" rx="1" fill="#c4c4c4"/><path d="M21 10l8-6v13z" fill="#c4c4c4"/></svg>
<div class="t" style="left:202px;top:504.1px;font-size:22.58px;color:#7d7d7d;transform-origin:left;transform:scaleX(0.93);">front</div>
<svg style="left:164px;top:546.5px" width="30" height="20" viewBox="0 0 30 20"><rect x="1" y="4" width="19" height="13" rx="1" fill="#c4c4c4"/><path d="M21 10l8-6v13z" fill="#c4c4c4"/></svg>
<div class="t" style="left:202px;top:544.1px;font-size:22.58px;color:#7d7d7d;transform-origin:left;transform:scaleX(0.93);">side</div>
<svg style="left:160px;top:581.5px" width="38" height="32" viewBox="0 0 38 32"><circle cx="18" cy="16" r="13" fill="none" stroke="#c4c4c4" stroke-width="2.5"/><path d="M5 16h26M18 3v26M10 6c-4 6-4 14 0 20M26 6c4 6 4 14 0 20" fill="none" stroke="#c4c4c4" stroke-width="2"/><path d="M1 13h34" stroke="#c8b43a" stroke-width="3"/><path d="M6 10q12-12 24 0" fill="none" stroke="#c8b43a" stroke-width="2.5"/></svg>
<div class="t" style="left:202px;top:584.1px;font-size:22.58px;color:#dcdcdc;transform-origin:left;transform:scaleX(0.93);">M4Y4_B07_aiSkyDomeLight1</div>
<svg style="left:164px;top:622.5px" width="30" height="30" viewBox="0 0 30 30"><path d="M3 3l22 22M13 3l14 14M3 13l14 14" stroke="#c8b43a" stroke-width="3"/><path d="M27 27l-8-2 6-6z" fill="#c8b43a"/></svg>
<div class="t" style="left:202px;top:624.1px;font-size:22.58px;color:#dcdcdc;transform-origin:left;transform:scaleX(0.93);">M4Y4_B07_directionalLight1</div>
<svg style="left:136px;top:666.5px" width="20" height="20" viewBox="0 0 20 20"><rect x="1" y="1" width="18" height="18" fill="none" stroke="#9a9a9a" stroke-width="1.6"/><path d="M5 10h10" stroke="#9a9a9a" stroke-width="1.6"/><path d="M10 5v10" stroke="#9a9a9a" stroke-width="1.6"/></svg>
<svg style="left:162px;top:660.5px" width="34" height="34" viewBox="0 0 34 34"><circle cx="17" cy="17" r="15" fill="none" stroke="#c4c4c4" stroke-width="2"/><circle cx="14" cy="21" r="6" fill="#c4c4c4"/><path d="M16 10h10v10H18z" fill="#45b0c0"/><circle cx="14" cy="21" r="6" fill="#c4c4c4" stroke="#2a2a2a" stroke-width="1.2"/></svg>
<div class="t" style="left:202px;top:664.1px;font-size:22.58px;color:#dcdcdc;transform-origin:left;transform:scaleX(0.93);">defaultLightSet</div>
<svg style="left:162px;top:700.5px" width="34" height="34" viewBox="0 0 34 34"><circle cx="17" cy="17" r="15" fill="none" stroke="#c4c4c4" stroke-width="2"/><circle cx="14" cy="21" r="6" fill="#c4c4c4"/><path d="M16 10h10v10H18z" fill="#45b0c0"/><circle cx="14" cy="21" r="6" fill="#c4c4c4" stroke="#2a2a2a" stroke-width="1.2"/></svg>
<div class="t" style="left:202px;top:704.1px;font-size:22.58px;color:#dcdcdc;transform-origin:left;transform:scaleX(0.93);">defaultObjectSet</div>
<svg style="left:154px;top:738.5px" width="40" height="40" viewBox="0 0 40 40"><path d="M14 6l10-4 10 4v20l-6 4V12l-4-2-4 2v18l-6-4z" fill="#e24848"/><path d="M24 2l10 4-10 4-10-4z" fill="#c4c4c4"/><path d="M3 28l7-4 7 4v8l-7 4-7-4z" fill="#9ccf8a" stroke="#2a2a2a" stroke-width="1.5"/><path d="M3 28l7 4 7-4M16 34v8" fill="none" stroke="#6a9a5a" stroke-width="1"/></svg>
<div class="t" style="left:202px;top:744.1px;font-size:22.58px;color:#dcdcdc;transform-origin:left;transform:scaleX(0.93);">M4Y4_B07_MASH_M4Y4_eyes</div>
<svg style="left:136px;top:786.5px" width="20" height="20" viewBox="0 0 20 20"><rect x="1" y="1" width="18" height="18" fill="none" stroke="#9a9a9a" stroke-width="1.6"/><path d="M5 10h10" stroke="#9a9a9a" stroke-width="1.6"/></svg>
<svg style="left:162px;top:779.5px" width="34" height="34" viewBox="0 0 34 34"><rect x="1" y="1" width="32" height="32" fill="#c4c4c4"/><path d="M6 6h14v8H6z" fill="#d0bd32" stroke="#2a2a2a" stroke-width="1.5"/><path d="M14 20h14v8H14z" fill="#d0bd32" stroke="#2a2a2a" stroke-width="1.5"/><path d="M8 14v4h12" fill="none" stroke="#2a2a2a" stroke-width="2"/></svg>
<div class="t" style="left:202px;top:784.1px;font-size:22.58px;color:#dcdcdc;transform-origin:left;transform:scaleX(0.93);">M4Y4_B07_M4Y4_AST_CLICKME</div>
<div style="left:146px;top:835.5px;width:14px;height:2px;background:#8a8a8a;"></div>
<svg style="left:160px;top:826.5px" width="20" height="20" viewBox="0 0 20 20"><rect x="1" y="1" width="18" height="18" fill="none" stroke="#9a9a9a" stroke-width="1.6"/><path d="M5 10h10" stroke="#9a9a9a" stroke-width="1.6"/><path d="M10 5v10" stroke="#9a9a9a" stroke-width="1.6"/></svg>
<svg style="left:184px;top:820.5px" width="36" height="36" viewBox="0 0 36 36"><path d="M16 4h14l-7 22H12z" fill="#c4c4c4"/><path d="M4 12h18" stroke="#e24848" stroke-width="3"/><path d="M16 6l8 6-8 6z" fill="#e24848"/><path d="M1 24l7-4 7 4v8l-7 4-7-4z" fill="#9ccf8a" stroke="#2a2a2a" stroke-width="1.5"/><path d="M1 24l7 4 7-4M16 34v8" fill="none" stroke="#6a9a5a" stroke-width="1"/></svg>
<div class="t" style="left:227px;top:824.1px;font-size:22.58px;color:#dcdcdc;transform-origin:left;transform:scaleX(0.93);">M4Y4_B07_m4y4_GEO_GRP</div>
<div style="left:146px;top:875.5px;width:14px;height:2px;background:#8a8a8a;"></div>
<svg style="left:160px;top:866.5px" width="20" height="20" viewBox="0 0 20 20"><rect x="1" y="1" width="18" height="18" fill="none" stroke="#9a9a9a" stroke-width="1.6"/><path d="M5 10h10" stroke="#9a9a9a" stroke-width="1.6"/><path d="M10 5v10" stroke="#9a9a9a" stroke-width="1.6"/></svg>
<svg style="left:184px;top:860.5px" width="36" height="36" viewBox="0 0 36 36"><circle cx="27" cy="4" r="3.5" fill="#a88ad8"/><path d="M26 6L14 16l10 16" fill="none" stroke="#a88ad8" stroke-width="3"/><path d="M1 24l7-4 7 4v8l-7 4-7-4z" fill="#9ccf8a" stroke="#2a2a2a" stroke-width="1.5"/><path d="M1 24l7 4 7-4M16 34v8" fill="none" stroke="#6a9a5a" stroke-width="1"/></svg>
<div class="t" style="left:227px;top:864.1px;font-size:22.58px;color:#7d7d7d;transform-origin:left;transform:scaleX(0.93);">M4Y4_B07_M4Y4_rig_Guides</div>
<div style="left:146px;top:915.5px;width:14px;height:2px;background:#8a8a8a;"></div>
<svg style="left:160px;top:906.5px" width="20" height="20" viewBox="0 0 20 20"><rect x="1" y="1" width="18" height="18" fill="none" stroke="#9a9a9a" stroke-width="1.6"/><path d="M5 10h10" stroke="#9a9a9a" stroke-width="1.6"/><path d="M10 5v10" stroke="#9a9a9a" stroke-width="1.6"/></svg>
<svg style="left:184px;top:898.5px" width="36" height="38" viewBox="0 0 36 38"><path d="M20 2v34M6 10l28 18M34 10L6 28" stroke="#45b0c0" stroke-width="3.5"/><path d="M1 26l7-4 7 4v8l-7 4-7-4z" fill="#9ccf8a" stroke="#2a2a2a" stroke-width="1.5"/><path d="M1 26l7 4 7-4M16 34v8" fill="none" stroke="#6a9a5a" stroke-width="1"/></svg>
<div class="t" style="left:227px;top:904.1px;font-size:22.58px;color:#dcdcdc;transform-origin:left;transform:scaleX(0.93);">M4Y4_B07_M4Y4_rig_Reference</div>
<div style="left:146px;top:955.5px;width:14px;height:2px;background:#8a8a8a;"></div>
<svg style="left:160px;top:946.5px" width="20" height="20" viewBox="0 0 20 20"><rect x="1" y="1" width="18" height="18" fill="none" stroke="#9a9a9a" stroke-width="1.6"/><path d="M5 10h10" stroke="#9a9a9a" stroke-width="1.6"/><path d="M10 5v10" stroke="#9a9a9a" stroke-width="1.6"/></svg>
<svg style="left:184px;top:940.5px" width="36" height="36" viewBox="0 0 36 36"><path d="M16 4h14l-7 22H12z" fill="#c4c4c4"/><path d="M4 12h18" stroke="#e24848" stroke-width="3"/><path d="M16 6l8 6-8 6z" fill="#e24848"/><path d="M1 24l7-4 7 4v8l-7 4-7-4z" fill="#9ccf8a" stroke="#2a2a2a" stroke-width="1.5"/><path d="M1 24l7 4 7-4M16 34v8" fill="none" stroke="#6a9a5a" stroke-width="1"/></svg>
<div class="t" style="left:227px;top:944.1px;font-size:22.58px;color:#dcdcdc;transform-origin:left;transform:scaleX(0.93);">M4Y4_B07_MASH_eyes_inner_workings</div>
<div style="left:146px;top:995.5px;width:14px;height:2px;background:#8a8a8a;"></div>
<svg style="left:160px;top:986.5px" width="20" height="20" viewBox="0 0 20 20"><rect x="1" y="1" width="18" height="18" fill="none" stroke="#9a9a9a" stroke-width="1.6"/><path d="M5 10h10" stroke="#9a9a9a" stroke-width="1.6"/><path d="M10 5v10" stroke="#9a9a9a" stroke-width="1.6"/></svg>
<svg style="left:184px;top:980.5px" width="36" height="36" viewBox="0 0 36 36"><path d="M16 4h14l-7 22H12z" fill="#c4c4c4"/><path d="M4 12h18" stroke="#e24848" stroke-width="3"/><path d="M16 6l8 6-8 6z" fill="#e24848"/><path d="M1 24l7-4 7 4v8l-7 4-7-4z" fill="#9ccf8a" stroke="#2a2a2a" stroke-width="1.5"/><path d="M1 24l7 4 7-4M16 34v8" fill="none" stroke="#6a9a5a" stroke-width="1"/></svg>
<div class="t" style="left:227px;top:984.1px;font-size:22.58px;color:#7d7d7d;transform-origin:left;transform:scaleX(0.93);">M4Y4_B07_eyes_CTRL_GRP</div>
<div style="left:146px;top:1035.5px;width:16px;height:2px;background:#8a8a8a;"></div>
<svg style="left:158px;top:1030.5px" width="14" height="12" viewBox="0 0 14 12"><circle cx="7" cy="6" r="5" fill="#8a8a8a"/></svg>
<svg style="left:184px;top:1020.5px" width="36" height="36" viewBox="0 0 36 36"><circle cx="27" cy="4" r="3.5" fill="#a88ad8"/><path d="M26 6L14 16l10 16" fill="none" stroke="#a88ad8" stroke-width="3"/><path d="M1 24l7-4 7 4v8l-7 4-7-4z" fill="#9ccf8a" stroke="#2a2a2a" stroke-width="1.5"/><path d="M1 24l7 4 7-4M16 34v8" fill="none" stroke="#6a9a5a" stroke-width="1"/></svg>
<div class="t" style="left:227px;top:1024.1px;font-size:22.58px;color:#7d7d7d;transform-origin:left;transform:scaleX(0.93);">M4Y4_B07_floating_head_JNT</div>
<div style="left:146px;top:1075.5px;width:14px;height:2px;background:#8a8a8a;"></div>
<svg style="left:160px;top:1066.5px" width="20" height="20" viewBox="0 0 20 20"><rect x="1" y="1" width="18" height="18" fill="none" stroke="#9a9a9a" stroke-width="1.6"/><path d="M5 10h10" stroke="#9a9a9a" stroke-width="1.6"/><path d="M10 5v10" stroke="#9a9a9a" stroke-width="1.6"/></svg>
<svg style="left:184px;top:1058.5px" width="36" height="38" viewBox="0 0 36 38"><path d="M20 2v34M6 10l28 18M34 10L6 28" stroke="#45b0c0" stroke-width="3.5"/><path d="M1 26l7-4 7 4v8l-7 4-7-4z" fill="#9ccf8a" stroke="#2a2a2a" stroke-width="1.5"/><path d="M1 26l7 4 7-4M16 34v8" fill="none" stroke="#6a9a5a" stroke-width="1"/></svg>
<div class="t" style="left:227px;top:1064.1px;font-size:22.58px;color:#ffffff;transform-origin:left;transform:scaleX(0.93);">M4Y4_B07_M4Y4_rig_Ctrl_Reference</div>
<div style="left:146px;top:1115.5px;width:14px;height:2px;background:#8a8a8a;"></div>
<svg style="left:160px;top:1106.5px" width="20" height="20" viewBox="0 0 20 20"><rect x="1" y="1" width="18" height="18" fill="none" stroke="#9a9a9a" stroke-width="1.6"/><path d="M5 10h10" stroke="#9a9a9a" stroke-width="1.6"/><path d="M10 5v10" stroke="#9a9a9a" stroke-width="1.6"/></svg>
<svg style="left:184px;top:1100.5px" width="36" height="36" viewBox="0 0 36 36"><path d="M16 4h14l-7 22H12z" fill="#c4c4c4"/><path d="M4 12h18" stroke="#e24848" stroke-width="3"/><path d="M16 6l8 6-8 6z" fill="#e24848"/><path d="M1 24l7-4 7 4v8l-7 4-7-4z" fill="#9ccf8a" stroke="#2a2a2a" stroke-width="1.5"/><path d="M1 24l7 4 7-4M16 34v8" fill="none" stroke="#6a9a5a" stroke-width="1"/></svg>
<div class="t" style="left:227px;top:1104.1px;font-size:22.58px;color:#dcdcdc;transform-origin:left;transform:scaleX(0.93);">M4Y4_B07_detached_head_GRP</div>
<div style="left:146px;top:1155.5px;width:16px;height:2px;background:#8a8a8a;"></div>
<svg style="left:158px;top:1150.5px" width="14" height="12" viewBox="0 0 14 12"><circle cx="7" cy="6" r="5" fill="#8a8a8a"/></svg>
<svg style="left:174px;top:1138.5px" width="40" height="40" viewBox="0 0 40 40"><path d="M14 6l10-4 10 4v20l-6 4V12l-4-2-4 2v18l-6-4z" fill="#e24848"/><path d="M24 2l10 4-10 4-10-4z" fill="#c4c4c4"/><path d="M3 28l7-4 7 4v8l-7 4-7-4z" fill="#9ccf8a" stroke="#2a2a2a" stroke-width="1.5"/><path d="M3 28l7 4 7-4M16 34v8" fill="none" stroke="#6a9a5a" stroke-width="1"/></svg>
<div class="t" style="left:227px;top:1144.1px;font-size:22.58px;color:#dcdcdc;transform-origin:left;transform:scaleX(0.93);">M4Y4_B07_MASH_M4Y4_eyes</div>
<svg style="left:612px;top:418px" width="20" height="14" viewBox="0 0 20 14"><path d="M2 12l8-9 8 9z" fill="#c4c4c4"/></svg>
<svg style="left:612px;top:1885px" width="20" height="14" viewBox="0 0 20 14"><path d="M2 2l8 9 8-9z" fill="#c4c4c4"/></svg>
<svg style="left:100px;top:1906px" width="14" height="20" viewBox="0 0 14 20"><path d="M11 2L2 10l9 8z" fill="#c4c4c4"/></svg>
<svg style="left:590px;top:1906px" width="14" height="20" viewBox="0 0 14 20"><path d="M3 2l9 8-9 8z" fill="#c4c4c4"/></svg>
<svg style="left:270px;top:1932px" width="180" height="4" viewBox="0 0 180 4"><rect x="0" y="0" width="2" height="2" fill="#8a8a8a"/><rect x="6" y="0" width="2" height="2" fill="#8a8a8a"/><rect x="12" y="0" width="2" height="2" fill="#8a8a8a"/><rect x="18" y="0" width="2" height="2" fill="#8a8a8a"/><rect x="24" y="0" width="2" height="2" fill="#8a8a8a"/><rect x="30" y="0" width="2" height="2" fill="#8a8a8a"/><rect x="36" y="0" width="2" height="2" fill="#8a8a8a"/><rect x="42" y="0" width="2" height="2" fill="#8a8a8a"/><rect x="48" y="0" width="2" height="2" fill="#8a8a8a"/><rect x="54" y="0" width="2" height="2" fill="#8a8a8a"/><rect x="60" y="0" width="2" height="2" fill="#8a8a8a"/><rect x="66" y="0" width="2" height="2" fill="#8a8a8a"/><rect x="72" y="0" width="2" height="2" fill="#8a8a8a"/><rect x="78" y="0" width="2" height="2" fill="#8a8a8a"/><rect x="84" y="0" width="2" height="2" fill="#8a8a8a"/><rect x="90" y="0" width="2" height="2" fill="#8a8a8a"/><rect x="96" y="0" width="2" height="2" fill="#8a8a8a"/><rect x="102" y="0" width="2" height="2" fill="#8a8a8a"/><rect x="108" y="0" width="2" height="2" fill="#8a8a8a"/><rect x="114" y="0" width="2" height="2" fill="#8a8a8a"/><rect x="120" y="0" width="2" height="2" fill="#8a8a8a"/><rect x="126" y="0" width="2" height="2" fill="#8a8a8a"/><rect x="132" y="0" width="2" height="2" fill="#8a8a8a"/><rect x="138" y="0" width="2" height="2" fill="#8a8a8a"/><rect x="144" y="0" width="2" height="2" fill="#8a8a8a"/><rect x="150" y="0" width="2" height="2" fill="#8a8a8a"/><rect x="156" y="0" width="2" height="2" fill="#8a8a8a"/><rect x="162" y="0" width="2" height="2" fill="#8a8a8a"/><rect x="168" y="0" width="2" height="2" fill="#8a8a8a"/><rect x="174" y="0" width="2" height="2" fill="#8a8a8a"/></svg>
<svg style="left:100px;top:373px" width="34" height="36" viewBox="0 0 34 36"><path d="M2 2l10 6-10 6zM22 2l10 6-10 6zM2 22l10 6-10 6zM22 22l10 6-10 6z" fill="#7a7a7a"/><path d="M8 16v4M26 16v4M10 34h14M10 2h6" stroke="#7a7a7a" stroke-width="2"/></svg>
<svg style="left:604px;top:382px" width="26" height="14" viewBox="0 0 26 14"><path d="M2 2h20L12 12z" fill="#c4c4c4"/></svg>
<div style="left:643px;top:282px;width:2584px;height:80px;background:#444444;"></div>
<div style="left:643px;top:366px;width:2584px;height:1540px;background:#444444;"></div>
<div style="left:648px;top:451px;width:2574px;height:1450px;background:#a0a0a0;"></div>
<div style="left:647px;top:1914px;width:156px;height:30px;background:#383838;border:1px solid #4a4a4a;border-bottom:none;border-radius:3px 3px 0 0"></div>
<div class="t" style="left:662px;top:1916.6px;font-size:22.58px;color:#b4b4b4;transform-origin:left;transform:scaleX(0.93);">Graph Editor</div>
<div style="left:643px;top:1944px;width:2584px;height:2px;background:#474747;"></div>
<div class="t" style="left:665px;top:377.6px;font-size:23.66px;color:#d4d4d4;transform-origin:left;transform:scaleX(0.93);">View</div>
<div class="t" style="left:743px;top:377.6px;font-size:23.66px;color:#d4d4d4;transform-origin:left;transform:scaleX(0.93);">Shading</div>
<div class="t" style="left:853px;top:377.6px;font-size:23.66px;color:#d4d4d4;transform-origin:left;transform:scaleX(0.93);">Lighting</div>
<div class="t" style="left:964px;top:377.6px;font-size:23.66px;color:#d4d4d4;transform-origin:left;transform:scaleX(0.93);">Show</div>
<div class="t" style="left:1049px;top:377.6px;font-size:23.66px;color:#d4d4d4;transform-origin:left;transform:scaleX(0.93);">Renderer</div>
<div class="t" style="left:1168px;top:377.6px;font-size:23.66px;color:#d4d4d4;transform-origin:left;transform:scaleX(0.93);">Panels</div>
<svg style="left:648px;top:286px;" width="12" height="72" viewBox="0 0 12 72"><rect x="0" y="2" width="2" height="2" fill="#8a8a8a"/><rect x="0" y="8" width="2" height="2" fill="#8a8a8a"/><rect x="0" y="14" width="2" height="2" fill="#8a8a8a"/><rect x="0" y="20" width="2" height="2" fill="#8a8a8a"/><rect x="0" y="26" width="2" height="2" fill="#8a8a8a"/><rect x="0" y="32" width="2" height="2" fill="#8a8a8a"/><rect x="0" y="38" width="2" height="2" fill="#8a8a8a"/><rect x="0" y="44" width="2" height="2" fill="#8a8a8a"/><rect x="0" y="50" width="2" height="2" fill="#8a8a8a"/><rect x="0" y="56" width="2" height="2" fill="#8a8a8a"/><rect x="0" y="62" width="2" height="2" fill="#8a8a8a"/><rect x="0" y="68" width="2" height="2" fill="#8a8a8a"/><rect x="6" y="2" width="2" height="2" fill="#8a8a8a"/><rect x="6" y="8" width="2" height="2" fill="#8a8a8a"/><rect x="6" y="14" width="2" height="2" fill="#8a8a8a"/><rect x="6" y="20" width="2" height="2" fill="#8a8a8a"/><rect x="6" y="26" width="2" height="2" fill="#8a8a8a"/><rect x="6" y="32" width="2" height="2" fill="#8a8a8a"/><rect x="6" y="38" width="2" height="2" fill="#8a8a8a"/><rect x="6" y="44" width="2" height="2" fill="#8a8a8a"/><rect x="6" y="50" width="2" height="2" fill="#8a8a8a"/><rect x="6" y="56" width="2" height="2" fill="#8a8a8a"/><rect x="6" y="62" width="2" height="2" fill="#8a8a8a"/><rect x="6" y="68" width="2" height="2" fill="#8a8a8a"/></svg>
<svg style="left:684px;top:302px" width="38" height="40" viewBox="0 0 38 40"><path d="M6 34l4-10 22-22 6 6-22 22z" fill="#c4c4c4" stroke="#2a2a2a" stroke-width="1.5"/><path d="M12 26l20-20M16 30l20-20" stroke="#2a2a2a" stroke-width="1.2"/></svg>
<svg style="left:742px;top:302px" width="38" height="40" viewBox="0 0 38 40"><path d="M34 4L18 22" stroke="#c4c4c4" stroke-width="5" stroke-linecap="round"/><path d="M3 34c8 2 16-2 16-10l-5-3c-6 4-4 10-11 13z" fill="#c4c4c4"/></svg>
<svg style="left:802px;top:300px" width="38" height="44" viewBox="0 0 38 44"><path d="M4 26l16-18 16 14-14 14H12z" fill="#c4c4c4"/><path d="M14 12l16 14 6-6-14-12z" fill="#45b0c0"/><path d="M10 40h26M3 40h4" stroke="#c4c4c4" stroke-width="2"/></svg>
<svg style="left:862px;top:304px" width="30" height="34" viewBox="0 0 30 34"><path d="M2 2h26v6h-2l-2-3h-7v24l4 2v2H9v-2l4-2V5H6L4 8H2z" fill="#c4c4c4"/></svg>
<svg style="left:918px;top:306px" width="34" height="32" viewBox="0 0 34 32"><path d="M3 29L31 3" stroke="#c4c4c4" stroke-width="2.5"/></svg>
<svg style="left:977px;top:304px" width="34" height="34" viewBox="0 0 34 34"><path d="M3 31L29 5M13 4h17v17" fill="none" stroke="#c4c4c4" stroke-width="2.5"/></svg>
<svg style="left:1034px;top:309px" width="34" height="26" viewBox="0 0 34 26"><ellipse cx="17" cy="13" rx="15" ry="11" fill="none" stroke="#c4c4c4" stroke-width="2.5"/></svg>
<svg style="left:1092px;top:307px" width="36" height="28" viewBox="0 0 36 28"><rect x="2" y="3" width="30" height="22" fill="none" stroke="#c4c4c4" stroke-width="2.5"/></svg>
<div style="left:1149px;top:300px;width:3px;height:44px;background:#7a7a7a;"></div>
<svg style="left:1171px;top:302px" width="40" height="40" viewBox="0 0 40 40"><rect x="8" y="8" width="24" height="24" fill="none" stroke="#45b0c0" stroke-width="2.5"/><path d="M20 1l4 4h-8zM20 39l4-4h-8zM1 20l4-4v8zM39 20l-4-4v8z" fill="#c4c4c4"/></svg>
<div style="left:1231px;top:300px;width:3px;height:44px;background:#7a7a7a;"></div>
<div style="left:1251px;top:299px;width:44px;height:45px;background:#9ac8d6;"></div>
<svg style="left:1314px;top:300px;" width="6" height="42" viewBox="0 0 6 42"><rect x="2" y="0" width="2" height="42" fill="#7a7a7a"/><rect x="0" y="10" width="6" height="21" rx="1" fill="#7a7a7a"/></svg>
<div style="left:1341px;top:300px;width:44px;height:44px;background:#5285a6;border-radius:2px"></div>
<svg style="left:1341px;top:300px" width="44" height="44" viewBox="0 0 44 44"><circle cx="22" cy="10" r="6" fill="#45b0c0" stroke="#2a2a2a" stroke-width="1.5"/><circle cx="12" cy="22" r="6" fill="#c4c4c4" stroke="#2a2a2a" stroke-width="1.5"/><circle cx="32" cy="22" r="6" fill="none" stroke="#2a2a2a" stroke-width="2"/><circle cx="10" cy="34" r="6" fill="#c4c4c4" stroke="#2a2a2a" stroke-width="1.5"/><circle cx="34" cy="34" r="6" fill="none" stroke="#2a2a2a" stroke-width="2"/></svg>
<div style="left:1399px;top:300px;width:44px;height:44px;background:#5285a6;border-radius:2px"></div>
<svg style="left:1399px;top:300px" width="44" height="44" viewBox="0 0 44 44"><circle cx="22" cy="10" r="6" fill="#45b0c0" stroke="#2a2a2a" stroke-width="1.5"/><circle cx="12" cy="22" r="6" fill="none" stroke="#2a2a2a" stroke-width="2"/><circle cx="32" cy="22" r="6" fill="#c4c4c4" stroke="#2a2a2a" stroke-width="1.5"/><circle cx="10" cy="34" r="6" fill="none" stroke="#2a2a2a" stroke-width="2"/><circle cx="34" cy="34" r="6" fill="#c4c4c4" stroke="#2a2a2a" stroke-width="1.5"/></svg>
<svg style="left:1463px;top:300px;" width="6" height="42" viewBox="0 0 6 42"><rect x="2" y="0" width="2" height="42" fill="#7a7a7a"/><rect x="0" y="10" width="6" height="21" rx="1" fill="#7a7a7a"/></svg>
<div style="left:1490px;top:301px;width:70px;height:38px;background:#2b2b2b;border-radius:3px"></div>
<div class="t" style="left:1502px;top:308.6px;font-size:23.66px;color:#d8d8d8;transform-origin:left;transform:scaleX(0.93);">1</div>
<svg style="left:1578px;top:304px" width="38" height="38" viewBox="0 0 38 38"><path d="M30 4L8 15l22 11" fill="none" stroke="#c4c4c4" stroke-width="3"/><path d="M4 32h6M14 32h6M24 32h10" stroke="#45b0c0" stroke-width="5"/><path d="M22 32h14" stroke="#c4c4c4" stroke-width="2"/></svg>
<svg style="left:1637px;top:304px" width="38" height="38" viewBox="0 0 38 38"><path d="M6 4l22 11L6 26" fill="none" stroke="#c4c4c4" stroke-width="3"/><path d="M2 32h4M20 32h6M30 32h6" stroke="#45b0c0" stroke-width="5"/><path d="M4 32h14" stroke="#c4c4c4" stroke-width="2"/></svg>
<svg style="left:1697px;top:300px;" width="6" height="42" viewBox="0 0 6 42"><rect x="2" y="0" width="2" height="42" fill="#7a7a7a"/><rect x="0" y="10" width="6" height="21" rx="1" fill="#7a7a7a"/></svg>
<svg style="left:1728px;top:304px" width="36" height="36" viewBox="0 0 36 36"><path d="M2 8h18M2 8v26h26V16" fill="none" stroke="#45b0c0" stroke-width="2.5"/><path d="M26 2v12M20 8h12" stroke="#c4c4c4" stroke-width="2.5"/></svg>
<svg style="left:1787px;top:304px" width="32" height="36" viewBox="0 0 32 36"><rect x="2" y="6" width="26" height="26" fill="none" stroke="#45b0c0" stroke-width="2.5"/><path d="M9 13l12 12M21 13L9 25" stroke="#c4c4c4" stroke-width="2.5"/></svg>
<svg style="left:1845px;top:304px" width="36" height="38" viewBox="0 0 36 38"><path d="M2 6h26v14M2 6v26h14" fill="none" stroke="#45b0c0" stroke-width="2.5"/><path d="M20 24l10 10M30 24L20 34" stroke="#c4c4c4" stroke-width="2.5"/></svg>
<svg style="left:1900px;top:302px" width="38" height="40" viewBox="0 0 38 40"><rect x="2" y="10" width="24" height="26" fill="none" stroke="#c4c4c4" stroke-width="2.5"/><rect x="10" y="2" width="26" height="26" fill="none" stroke="#c4c4c4" stroke-width="2.5"/></svg>
<svg style="left:1957px;top:304px" width="40" height="36" viewBox="0 0 40 36"><circle cx="8" cy="8" r="5" fill="none" stroke="#c4c4c4" stroke-width="2.5"/><circle cx="8" cy="28" r="5" fill="none" stroke="#c4c4c4" stroke-width="2.5"/><path d="M12 11l26 12M12 25l26-12" stroke="#c4c4c4" stroke-width="3"/></svg>
<svg style="left:2017px;top:302px" width="34" height="40" viewBox="0 0 34 40"><rect x="2" y="4" width="18" height="24" fill="#c4c4c4" stroke="#2a2a2a"/><path d="M12 12h12l8 8v18H12z" fill="#c4c4c4" stroke="#2a2a2a" stroke-width="1.5"/></svg>
<svg style="left:2078px;top:302px" width="30" height="40" viewBox="0 0 30 40"><rect x="2" y="6" width="26" height="32" rx="2" fill="#c4c4c4"/><rect x="8" y="2" width="14" height="8" fill="#c4c4c4" stroke="#2a2a2a" stroke-width="1.5"/></svg>
<div style="left:2132px;top:300px;width:3px;height:44px;background:#7a7a7a;"></div>
<svg style="left:2158px;top:304px" width="36" height="36" viewBox="0 0 36 36"><rect x="2" y="4" width="7" height="28" fill="none" stroke="#45b0c0" stroke-width="2.5"/><path d="M32 4L12 18l20 14z" fill="#c4c4c4"/></svg>
<svg style="left:2213px;top:304px" width="40" height="36" viewBox="0 0 40 36"><path d="M2 4l20 14L2 32z" fill="#c4c4c4"/><rect x="28" y="4" width="7" height="28" fill="none" stroke="#45b0c0" stroke-width="2.5"/></svg>
<svg style="left:2274px;top:300px;" width="6" height="42" viewBox="0 0 6 42"><rect x="2" y="0" width="2" height="42" fill="#7a7a7a"/><rect x="0" y="10" width="6" height="21" rx="1" fill="#7a7a7a"/></svg>
<svg style="left:2305px;top:302px" width="32" height="40" viewBox="0 0 32 40"><path d="M6 2h14l8 8v28H6v-6" fill="#c4c4c4" stroke="#2a2a2a" stroke-width="1.5"/><path d="M0 22h16" stroke="#45b0c0" stroke-width="3"/><path d="M12 16l7 6-7 6z" fill="#45b0c0"/></svg>
<svg style="left:2366px;top:302px" width="36" height="40" viewBox="0 0 36 40"><path d="M2 2h14l8 8v28H2z" fill="#c4c4c4" stroke="#2a2a2a" stroke-width="1.5"/><path d="M16 22h14" stroke="#45b0c0" stroke-width="3"/><path d="M28 16l7 6-7 6z" fill="#45b0c0"/></svg>
<div style="left:643px;top:362px;width:2584px;height:4px;background:#373737;"></div>
<svg style="left:653px;top:414px;" width="6" height="34" viewBox="0 0 6 34"><rect x="2" y="0" width="2" height="34" fill="#7a7a7a"/><rect x="0" y="8" width="6" height="17" rx="1" fill="#7a7a7a"/></svg>
<svg style="left:670px;top:418px" width="32" height="26" viewBox="0 0 32 26"><rect x="2" y="7" width="19" height="15" rx="1" fill="#c4c4c4"/><path d="M22 14l9-7v15z" fill="#c4c4c4"/></svg>
<svg style="left:709px;top:414px" width="34" height="36" viewBox="0 0 34 36"><rect x="6" y="4" width="18" height="14" fill="#c4c4c4"/><path d="M24 10l8-6v14z" fill="#c4c4c4"/><path d="M8 24v-4a5 5 0 0 1 10 0v4" fill="none" stroke="#45b0c0" stroke-width="3"/><rect x="5" y="23" width="16" height="12" rx="1" fill="#45b0c0"/></svg>
<svg style="left:748px;top:414px" width="34" height="36" viewBox="0 0 34 36"><rect x="6" y="4" width="18" height="14" fill="#c4c4c4"/><path d="M24 10l8-6v14z" fill="#c4c4c4"/><circle cx="13" cy="25" r="7" fill="none" stroke="#45b0c0" stroke-width="4"/><circle cx="13" cy="25" r="10" fill="none" stroke="#45b0c0" stroke-width="3" stroke-dasharray="3 3"/></svg>
<svg style="left:793px;top:416px" width="18" height="32" viewBox="0 0 18 32"><path d="M2 2h14v28l-7-7-7 7z" fill="#c4c4c4"/></svg>
<svg style="left:824px;top:414px" width="30" height="36" viewBox="0 0 30 36"><path d="M14 4l6-2v24l-6 6z" fill="#45b0c0"/><path d="M2 34l8-6h18l-6 6z" fill="#c4c4c4"/></svg>
<svg style="left:862px;top:414px" width="30" height="36" viewBox="0 0 30 36"><circle cx="20" cy="20" r="7" fill="none" stroke="#45b0c0" stroke-width="3"/><path d="M14 26l-8 8" stroke="#45b0c0" stroke-width="3.5"/><path d="M2 14h10M16 2v10" stroke="#c4c4c4" stroke-width="2"/><path d="M16 0l-4 5h8zM0 14l5-4v8z" fill="#c4c4c4"/></svg>
<div style="left:897px;top:413px;width:36px;height:36px;background:#5285a6;border-radius:2px;border:2px solid #22dd22"></div>
<svg style="left:897px;top:413px" width="36" height="36" viewBox="0 0 36 36"><path d="M8 28l2-8 16-16 6 6-16 16z" fill="#45b0c0" stroke="#2a2a2a" stroke-width="1.5"/><path d="M6 30l4-10 6 6z" fill="#c4c4c4"/></svg>
<div style="left:942px;top:414px;width:3px;height:34px;background:#7a7a7a;"></div>
<div style="left:955px;top:413px;width:36px;height:36px;background:#5285a6;border-radius:2px"></div>
<svg style="left:955px;top:413px" width="36" height="36" viewBox="0 0 36 36"><rect x="6" y="6" width="24" height="24" fill="none" stroke="#2a2a2a" stroke-width="3"/><path d="M6 14h24M6 22h24M14 6v24M22 6v24" stroke="#c4c4c4" stroke-width="2"/><rect x="7" y="7" width="22" height="22" fill="none" stroke="#c4c4c4" stroke-width="2"/></svg>
<svg style="left:997px;top:416px" width="28" height="30" viewBox="0 0 28 30"><rect x="1" y="4" width="26" height="22" fill="none" stroke="#c4c4c4" stroke-width="2.5"/><path d="M1 8h26M1 22h26" stroke="#c4c4c4" stroke-width="2" stroke-dasharray="2 2"/></svg>
<svg style="left:1036px;top:416px" width="26" height="30" viewBox="0 0 26 30"><rect x="1" y="4" width="24" height="22" fill="none" stroke="#c4c4c4" stroke-width="2.5"/><circle cx="13" cy="15" r="5" fill="#45b0c0"/></svg>
<div style="left:1069px;top:413px;width:36px;height:36px;background:#3a3a3a;border:1px solid #2f2f2f;border-radius:2px"></div>
<svg style="left:1069px;top:413px" width="36" height="36" viewBox="0 0 36 36"><rect x="5" y="6" width="26" height="24" fill="#4a4a4a"/><circle cx="18" cy="18" r="6" fill="#383838"/></svg>
<svg style="left:1111px;top:416px" width="28" height="30" viewBox="0 0 28 30"><rect x="1" y="4" width="26" height="22" fill="none" stroke="#c4c4c4" stroke-width="2.5"/><path d="M14 6v4M14 20v4M4 15h4M20 15h4M10 10h8M10 20h8" stroke="#45b0c0" stroke-width="2.5"/></svg>
<svg style="left:1150px;top:416px" width="28" height="30" viewBox="0 0 28 30"><rect x="1" y="4" width="26" height="22" fill="none" stroke="#c4c4c4" stroke-width="2.5"/><path d="M6 22l5-8 5 8z" fill="#45b0c0"/><circle cx="19" cy="11" r="4" fill="#45b0c0"/></svg>
<svg style="left:1187px;top:416px" width="28" height="30" viewBox="0 0 28 30"><rect x="1" y="4" width="26" height="22" fill="none" stroke="#c4c4c4" stroke-width="2.5"/><path d="M8 9h12M14 9v13" stroke="#45b0c0" stroke-width="2.5"/></svg>
<svg style="left:1226px;top:414px;" width="6" height="34" viewBox="0 0 6 34"><rect x="2" y="0" width="2" height="34" fill="#7a7a7a"/><rect x="0" y="8" width="6" height="17" rx="1" fill="#7a7a7a"/></svg>
<svg style="left:1244px;top:414px" width="30" height="34" viewBox="0 0 30 34"><path d="M15 2l13 7v16l-13 7-13-7V9z" fill="none" stroke="#c4c4c4" stroke-width="2.2"/><path d="M2 9l13 7 13-7M15 16v16" fill="none" stroke="#c4c4c4" stroke-width="1"/></svg>
<div style="left:1279px;top:413px;width:36px;height:36px;background:#5285a6;border-radius:2px"></div>
<svg style="left:1279px;top:413px" width="36" height="36" viewBox="0 0 36 36"><path d="M18 3l14 8v16l-14 8-14-8V11z" fill="#45b0c0" stroke="#2a2a2a" stroke-width="1.5"/><path d="M4 11l14 8 14-8z" fill="#8ad8e4"/><path d="M18 19v16" stroke="#2a2a2a" stroke-width="1.5"/></svg>
<svg style="left:1321px;top:416px" width="30" height="30" viewBox="0 0 30 30"><circle cx="15" cy="15" r="12" fill="#c4c4c4"/><rect x="15" y="3" width="4" height="4" fill="#444"/><rect x="23" y="3" width="4" height="4" fill="#444"/><rect x="19" y="7" width="4" height="4" fill="#444"/><rect x="15" y="11" width="4" height="4" fill="#444"/><rect x="23" y="11" width="4" height="4" fill="#444"/><rect x="19" y="15" width="4" height="4" fill="#444"/><rect x="15" y="19" width="4" height="4" fill="#444"/><rect x="23" y="19" width="4" height="4" fill="#444"/><rect x="19" y="23" width="4" height="4" fill="#444"/></svg>
<svg style="left:1357px;top:414px" width="32" height="34" viewBox="0 0 32 34"><path d="M16 2l13 7v16l-13 7-13-7V9z" fill="none" stroke="#c4c4c4" stroke-width="2.2"/><path d="M9 10l7-4 7 4-7 4z" fill="#8ad8e4"/><path d="M8 14v10l6 3V17zM24 14v10l-6 3V17z" fill="#45b0c0"/></svg>
<div style="left:1393px;top:413px;width:36px;height:36px;background:#5285a6;border-radius:2px"></div>
<svg style="left:1393px;top:413px" width="36" height="36" viewBox="0 0 36 36"><circle cx="18" cy="18" r="14" fill="#c4c4c4" stroke="#2a2a2a" stroke-width="2"/><rect x="5" y="5" width="4" height="4" fill="#3a3a3a"/><rect x="13" y="5" width="4" height="4" fill="#3a3a3a"/><rect x="21" y="5" width="4" height="4" fill="#3a3a3a"/><rect x="29" y="5" width="4" height="4" fill="#3a3a3a"/><rect x="9" y="9" width="4" height="4" fill="#3a3a3a"/><rect x="17" y="9" width="4" height="4" fill="#3a3a3a"/><rect x="25" y="9" width="4" height="4" fill="#3a3a3a"/><rect x="5" y="13" width="4" height="4" fill="#3a3a3a"/><rect x="13" y="13" width="4" height="4" fill="#3a3a3a"/><rect x="21" y="13" width="4" height="4" fill="#3a3a3a"/><rect x="29" y="13" width="4" height="4" fill="#3a3a3a"/><rect x="9" y="17" width="4" height="4" fill="#3a3a3a"/><rect x="17" y="17" width="4" height="4" fill="#3a3a3a"/><rect x="25" y="17" width="4" height="4" fill="#3a3a3a"/><rect x="5" y="21" width="4" height="4" fill="#3a3a3a"/><rect x="13" y="21" width="4" height="4" fill="#3a3a3a"/><rect x="21" y="21" width="4" height="4" fill="#3a3a3a"/><rect x="29" y="21" width="4" height="4" fill="#3a3a3a"/><rect x="9" y="25" width="4" height="4" fill="#3a3a3a"/><rect x="17" y="25" width="4" height="4" fill="#3a3a3a"/><rect x="25" y="25" width="4" height="4" fill="#3a3a3a"/><rect x="5" y="29" width="4" height="4" fill="#3a3a3a"/><rect x="13" y="29" width="4" height="4" fill="#3a3a3a"/><rect x="21" y="29" width="4" height="4" fill="#3a3a3a"/><rect x="29" y="29" width="4" height="4" fill="#3a3a3a"/></svg>
<div style="left:1431px;top:413px;width:36px;height:36px;background:#5285a6;border-radius:2px"></div>
<svg style="left:1431px;top:413px" width="36" height="36" viewBox="0 0 36 36"><path d="M18 8a8 8 0 0 1 5 14v5h-10v-5a8 8 0 0 1 5-14z" fill="#c4c4c4"/><rect x="14" y="28" width="8" height="4" fill="#c4c4c4"/><path d="M18 2v3M6 8l3 3M30 8l-3 3M4 18h4M28 18h4" stroke="#c4c4c4" stroke-width="2"/></svg>
<svg style="left:1469px;top:416px" width="32" height="30" viewBox="0 0 32 30"><circle cx="20" cy="13" r="10" fill="#45b0c0"/><path d="M2 24l10-4 4 4-8 4z" fill="#9a9a9a"/></svg>
<svg style="left:1511px;top:414px;" width="6" height="34" viewBox="0 0 6 34"><rect x="2" y="0" width="2" height="34" fill="#7a7a7a"/><rect x="0" y="8" width="6" height="17" rx="1" fill="#7a7a7a"/></svg>
<svg style="left:1528px;top:414px" width="34" height="36" viewBox="0 0 34 36"><circle cx="16" cy="14" r="10" fill="#c4c4c4"/><path d="M2 28l14 4 14-4-14-4z" fill="none" stroke="#45b0c0" stroke-width="2"/></svg>
<svg style="left:1567px;top:414px" width="32" height="36" viewBox="0 0 32 36"><circle cx="12" cy="24" r="8" fill="#5a5a5a"/><circle cx="16" cy="18" r="8" fill="#888"/><circle cx="21" cy="12" r="9" fill="#c4c4c4"/></svg>
<div style="left:1603px;top:413px;width:36px;height:36px;background:#5285a6;border-radius:2px"></div>
<svg style="left:1603px;top:413px" width="36" height="36" viewBox="0 0 36 36"><path d="M18 5a13 13 0 1 0 0 26" fill="none" stroke="#45b0c0" stroke-width="5"/><path d="M18 5a13 13 0 1 1 0 26" fill="none" stroke="#c4c4c4" stroke-width="5" stroke-dasharray="3 2"/></svg>
<div style="left:1641px;top:413px;width:36px;height:36px;background:#3a3a3a;border:1px solid #2f2f2f"></div>
<svg style="left:1641px;top:413px" width="36" height="36" viewBox="0 0 36 36"><rect x="12" y="12" width="18" height="18" fill="#3e5a60"/><rect x="5" y="5" width="14" height="14" fill="none" stroke="#3e5a60" stroke-width="1"/></svg>
<svg style="left:1685px;top:414px;" width="6" height="34" viewBox="0 0 6 34"><rect x="2" y="0" width="2" height="34" fill="#7a7a7a"/><rect x="0" y="8" width="6" height="17" rx="1" fill="#7a7a7a"/></svg>
<svg style="left:1701px;top:414px" width="32" height="36" viewBox="0 0 32 36"><rect x="3" y="5" width="18" height="18" fill="none" stroke="#45b0c0" stroke-width="2.5" stroke-dasharray="4 3"/><path d="M16 14v20l5-5 4 7 3-2-4-7h7z" fill="#c4c4c4" stroke="#2a2a2a"/></svg>
<svg style="left:1741px;top:414px;" width="6" height="34" viewBox="0 0 6 34"><rect x="2" y="0" width="2" height="34" fill="#7a7a7a"/><rect x="0" y="8" width="6" height="17" rx="1" fill="#7a7a7a"/></svg>
<div style="left:1759px;top:414px;width:32px;height:34px;background:#3a3a3a;border-radius:2px"></div>
<svg style="left:1759px;top:414px" width="32" height="34" viewBox="0 0 32 34"><rect x="4" y="12" width="18" height="16" fill="none" stroke="#c4c4c4" stroke-width="3"/><rect x="11" y="5" width="18" height="16" fill="#c4c4c4"/></svg>
<div style="left:1797px;top:414px;width:34px;height:34px;background:#3a3a3a;border-radius:2px"></div>
<svg style="left:1797px;top:414px" width="34" height="34" viewBox="0 0 34 34"><path d="M4 12v18h18" fill="none" stroke="#c4c4c4" stroke-width="3"/><rect x="10" y="5" width="20" height="18" fill="none" stroke="#c4c4c4" stroke-width="3"/><rect x="15" y="10" width="10" height="8" fill="#c4c4c4"/></svg>
<div style="left:1834px;top:413px;width:35px;height:36px;background:#3a3a3a;border-radius:2px;border:2px solid #5285a6"></div>
<svg style="left:1834px;top:413px" width="35" height="36" viewBox="0 0 35 36"><rect x="6" y="6" width="22" height="22" fill="none" stroke="#c4c4c4" stroke-width="2.5"/><path d="M10 10l12 12" stroke="#c4c4c4" stroke-width="2.5"/><circle cx="12" cy="12" r="2" fill="#c4c4c4"/></svg>
<svg style="left:1876px;top:414px;" width="6" height="34" viewBox="0 0 6 34"><rect x="2" y="0" width="2" height="34" fill="#7a7a7a"/><rect x="0" y="8" width="6" height="17" rx="1" fill="#7a7a7a"/></svg>
<svg style="left:1896px;top:415px" width="30" height="32" viewBox="0 0 30 32"><circle cx="15" cy="16" r="12" fill="#c4c4c4"/><path d="M15 4l-4 12M27 16l-12-4M15 28l4-12M3 16l12 4" stroke="#444" stroke-width="3"/></svg>
<div style="left:1933px;top:413px;width:77px;height:36px;background:#2b2b2b;border-radius:2px"></div>
<div class="t" style="left:1941px;top:419.6px;font-size:23.66px;color:#d8d8d8;transform-origin:left;transform:scaleX(0.93);">0.00</div>
<svg style="left:2020px;top:415px" width="28" height="32" viewBox="0 0 28 32"><circle cx="14" cy="16" r="11" fill="none" stroke="#c4c4c4" stroke-width="3"/><path d="M14 5a11 11 0 0 1 0 22z" fill="#c4c4c4"/></svg>
<div style="left:2054px;top:413px;width:77px;height:36px;background:#2b2b2b;border-radius:2px"></div>
<div class="t" style="left:2062px;top:419.6px;font-size:23.66px;color:#d8d8d8;transform-origin:left;transform:scaleX(0.93);">1.00</div>
<div style="left:2137px;top:413px;width:35px;height:36px;background:#5285a6;border-radius:2px"></div>
<svg style="left:2137px;top:413px" width="35" height="36" viewBox="0 0 35 36"><circle cx="17.5" cy="18" r="13" fill="#45b0c0" stroke="#2a2a2a" stroke-width="2"/><text x="17.5" y="22" font-size="11" font-weight="bold" text-anchor="middle" fill="#2a2a2a" font-family="Liberation Sans">ON</text></svg>
<div style="left:2177px;top:413px;width:357px;height:36px;background:#5d5d5d;border-radius:2px"></div>
<div style="left:2495px;top:413px;width:2px;height:36px;background:#4a4a4a;"></div>
<div class="t" style="left:2184px;top:419.6px;font-size:23.66px;color:#d8d8d8;transform-origin:left;transform:scaleX(0.93);">ACES 1.0 SDR-video (sRGB)</div>
<svg style="left:2505px;top:424px" width="24" height="14" viewBox="0 0 24 14"><path d="M2 2h20L12 12z" fill="#c4c4c4"/></svg>
<svg style="left:688px;top:1800px" width="50" height="55" viewBox="0 0 50 55"><path d="M10.6 22v28" stroke="#00ff00" stroke-width="1.5"/><path d="M9 50h30" stroke="#ff0000" stroke-width="1.5"/><text x="5" y="17" font-size="17" font-weight="bold" fill="#00ff00" font-family="Liberation Sans">y</text><text x="3" y="47" font-size="16" font-weight="bold" fill="#0000ff" font-family="Liberation Sans">z</text><text x="36" y="47" font-size="16" font-weight="bold" fill="#ff0000" font-family="Liberation Sans">x</text></svg>
<svg style="left:648px;top:451px" width="2574" height="1450" viewBox="648 451 2574 1450"><defs><radialGradient id="orH" cx="0.4" cy="0.3" r="0.8"><stop offset="0" stop-color="#f2a63a"/><stop offset="0.55" stop-color="#e38c1e"/><stop offset="1" stop-color="#b85e0c"/></radialGradient><linearGradient id="orV" x1="0" y1="0" x2="1" y2="0"><stop offset="0" stop-color="#c8700f"/><stop offset="0.35" stop-color="#eea03a"/><stop offset="0.7" stop-color="#e58d20"/><stop offset="1" stop-color="#b8600c"/></linearGradient><linearGradient id="orB" x1="0" y1="0" x2="0" y2="1"><stop offset="0" stop-color="#e8961f"/><stop offset="1" stop-color="#c26a10"/></linearGradient><linearGradient id="blk" x1="0" y1="0" x2="1" y2="0"><stop offset="0" stop-color="#0e0e0e"/><stop offset="0.3" stop-color="#2e2e2e"/><stop offset="0.6" stop-color="#1a1a1a"/><stop offset="1" stop-color="#080808"/></linearGradient><linearGradient id="blkL" x1="0" y1="0" x2="1" y2="0"><stop offset="0" stop-color="#101010"/><stop offset="0.45" stop-color="#3a3d3e"/><stop offset="1" stop-color="#0a0a0a"/></linearGradient><radialGradient id="scr" cx="0.45" cy="0.35" r="0.7"><stop offset="0" stop-color="#4a4444"/><stop offset="0.6" stop-color="#2a2424"/><stop offset="1" stop-color="#1a1414"/></radialGradient><pattern id="dots" width="8" height="7" patternUnits="userSpaceOnUse" patternTransform="rotate(14)"><circle cx="4" cy="3.5" r="2.8" fill="#d4d4d4"/></pattern><pattern id="grid" width="6" height="6" patternUnits="userSpaceOnUse"><rect width="6" height="6" fill="#6a6a6a"/><rect x="0" y="0" width="5" height="5" fill="#555"/></pattern><radialGradient id="efade"><stop offset="0" stop-color="#fff"/><stop offset="0.65" stop-color="#fff"/><stop offset="1" stop-color="#000"/></radialGradient><mask id="em1" maskUnits="userSpaceOnUse" x="1800" y="600" width="260" height="160"><rect x="1800" y="600" width="260" height="160" fill="#000"/><ellipse cx="1874" cy="668" rx="50" ry="38" transform="rotate(14 1874 668)" fill="url(#efade)"/><ellipse cx="1987" cy="690" rx="49" ry="37" transform="rotate(14 1987 690)" fill="url(#efade)"/></mask></defs><path d="M1791,1265 C1775,1340 1760,1420 1748,1490 C1740,1530 1735,1560 1733,1580 L1832,1592 C1834,1530 1842,1440 1848,1400 C1856,1350 1866,1320 1872,1290 Z" fill="url(#blkL)"/><path d="M1940,1290 C1948,1350 1958,1450 1962,1520 C1965,1560 1968,1590 1970,1610 L2069,1592 C2060,1520 2045,1420 2035,1360 C2030,1320 2026,1290 2024,1270 Z" fill="url(#blkL)"/><path d="M1733,1572 Q1782,1590 1833,1588 L1832,1600 Q1782,1602 1732,1585Z" fill="#b8a8a0"/><path d="M1969,1600 Q2020,1606 2068,1585 L2069,1597 Q2020,1618 1970,1612Z" fill="#b8a8a0"/><path d="M1733,1582 Q1782,1604 1832,1598 C1830,1650 1830,1700 1826,1730 C1820,1775 1805,1795 1780,1800 C1750,1804 1710,1800 1695,1790 C1682,1775 1686,1740 1695,1700 C1705,1660 1720,1620 1733,1582Z" fill="url(#orV)"/><path d="M1970,1610 Q2020,1614 2068,1594 C2080,1630 2098,1680 2104,1730 C2108,1770 2100,1800 2080,1808 C2050,1814 2010,1812 1990,1805 C1975,1795 1976,1760 1976,1720 C1976,1680 1972,1640 1970,1610Z" fill="url(#orV)"/><ellipse cx="2100" cy="1710" rx="7" ry="22" fill="#111"/><path d="M1830,1751 L1976,1753 L1975,1787 L1826,1786Z" fill="url(#grid)" stroke="#555" stroke-width="1"/><path d="M1708,905 C1690,940 1655,990 1628,1018 C1600,1045 1570,1070 1545,1090 L1616,1130 C1635,1105 1662,1075 1685,1045 C1708,1012 1735,980 1748,950 Z" fill="url(#blk)"/><path d="M1547,1090 C1520,1110 1490,1160 1478,1220 C1470,1270 1475,1320 1488,1343 C1500,1352 1522,1340 1524,1318 L1527,1270 C1530,1290 1545,1295 1548,1280 L1549,1256 C1560,1240 1575,1232 1585,1231 C1600,1240 1610,1270 1617,1279 C1628,1285 1640,1270 1636,1246 C1630,1200 1620,1170 1616,1150 L1620,1132 Z" fill="url(#orH)"/><path d="M1548,1088 Q1580,1104 1614,1122 L1612,1132 Q1580,1116 1544,1098Z" fill="#2a2a2a"/><path d="M2125,890 C2150,900 2180,930 2200,942 C2215,935 2235,920 2255,910 L2280,992 C2260,1000 2230,1010 2195,1016 C2160,1005 2135,990 2118,980Z" fill="url(#blk)"/><defs><linearGradient id="orF" gradientUnits="userSpaceOnUse" x1="2240" y1="760" x2="2470" y2="990"><stop offset="0" stop-color="#f0a43a"/><stop offset="0.5" stop-color="#e38c1e"/><stop offset="1" stop-color="#b85e0c"/></linearGradient></defs><g fill="url(#orF)" stroke="url(#orF)"><path d="M2236,916 C2250,895 2268,870 2282,852 L2330,832 L2400,830 L2445,836 C2458,840 2468,846 2465,856 C2455,895 2420,935 2380,955 C2340,975 2290,988 2257,990 Z" stroke="none"/><path d="M2290,880 L2299,820 M2330,872 L2358,782 M2375,880 L2416,799 M2410,905 L2444,848" fill="none" stroke-width="38" stroke-linecap="round"/></g><path d="M2232,915 L2244,912 C2246,940 2254,970 2264,988 L2252,992 C2240,970 2234,945 2232,915Z" fill="#2a2a2a"/><ellipse cx="1730" cy="906" rx="30" ry="66" fill="url(#orH)"/><ellipse cx="2110" cy="924" rx="26" ry="65" fill="url(#orH)"/><path d="M1744,880 L1744,860 Q1744,811 1800,811 L2036,811 Q2092,811 2092,860 L2092,880 Z" fill="url(#orB)"/><path d="M1744,866 Q1918,906 2092,854 L2092,1152 Q1918,1176 1743,1144 Z" fill="url(#blk)"/><path d="M1744,864 Q1918,904 2092,852" fill="none" stroke="#a09890" stroke-width="5"/><path d="M1743,1144 V1170 C1745,1250 1790,1310 1918,1311 C2046,1310 2090,1250 2091,1170 V1150 Q1918,1176 1743,1144Z" fill="url(#orH)"/><path d="M1743,1146 Q1918,1176 2092,1152" fill="none" stroke="#988880" stroke-width="7"/><g fill="none" stroke="#b8b0ac" stroke-width="7" stroke-linejoin="round" transform="rotate(2 1888 925)"><path d="M1802,947 V916 Q1802,905 1813,905 H1821 Q1832,905 1832,916 V947 M1817,922 V947"/><path d="M1873,906 L1847,932 H1883 M1871,921 V947"/><path d="M1892,906 V920 Q1892,937 1910,937 Q1928,937 1928,920 M1928,906 V949"/><path d="M1968,911 Q1941,922 1941,933 H1977 M1971,921 V950"/></g><path d="M1829,782 Q1880,770 1960,785 L1960,800 Q1890,796 1829,798Z" fill="#3a2e2a"/><path d="M1821,806 Q1920,796 2020,806 L2020,814 Q1920,822 1821,814Z" fill="#7a8280" stroke="#4a5250" stroke-width="2"/><path d="M1872,550 C1940,546 1990,556 2030,580 C2070,605 2090,640 2088,680 C2086,720 2076,745 2060,760 C2040,785 2010,800 1980,798 C1930,795 1870,782 1830,762 C1790,742 1760,712 1756,670 C1753,630 1768,590 1800,568 C1820,556 1845,551 1872,550Z" fill="url(#orH)"/><path d="M1879,572 C1930,570 1980,578 2012,590 C2050,605 2068,630 2066,665 C2064,700 2048,735 2030,742 C2000,756 1960,762 1930,755 C1890,748 1855,738 1830,725 C1805,710 1796,680 1796,655 C1797,620 1810,590 1835,580 C1848,575 1862,572 1879,572Z" fill="#1c1412" stroke="#2a1c18" stroke-width="3"/><path d="M1882,582 C1930,580 1975,588 2005,600 C2040,615 2055,638 2053,668 C2051,698 2038,725 2022,732 C1995,745 1960,750 1932,744 C1895,737 1862,728 1840,716 C1818,702 1810,678 1810,656 C1811,625 1822,598 1845,590 C1856,585 1868,582 1882,582Z" fill="url(#scr)" stroke="#8e8c88" stroke-width="3.5"/><rect x="1800" y="600" width="260" height="160" fill="url(#dots)" mask="url(#em1)"/><g><ellipse cx="1919" cy="675" rx="188" ry="24" transform="rotate(11 1919 675)" fill="none" stroke="#3df57e" stroke-width="2"/><path d="M1920,677 L1912.0,693.4 L1920,786 L1928.0,693.4Z M1920,677 L1920,786" fill="rgba(170,200,60,0.35)" stroke="#3df57e" stroke-width="1.8"/><path d="M1934.3,681.6 L1928.8,689.1 L1920.0,692.0 L1911.2,689.1 L1905.7,681.6 L1905.7,672.4 L1911.2,664.9 L1920.0,662.0 L1928.8,664.9 L1934.3,672.4Z" fill="rgba(120,230,110,0.22)" stroke="#3df57e" stroke-width="1.8"/><ellipse cx="1920" cy="677" rx="6.8" ry="15" fill="none" stroke="#3df57e" stroke-width="1.1"/><path d="M1905 671.0h30M1905 683.0h30M1920 662v30" stroke="#3df57e" stroke-width="1.1"/><path d="M1931.4,793.7 L1927.1,799.7 L1920.0,802.0 L1912.9,799.7 L1908.6,793.7 L1908.6,786.3 L1912.9,780.3 L1920.0,778.0 L1927.1,780.3 L1931.4,786.3Z" fill="rgba(120,230,110,0.22)" stroke="#3df57e" stroke-width="1.8"/><ellipse cx="1920" cy="790" rx="5.4" ry="12" fill="none" stroke="#3df57e" stroke-width="1.1"/><path d="M1908 785.2h24M1908 794.8h24M1920 778v24" stroke="#3df57e" stroke-width="1.1"/><path d="M1931.4,813.7 L1927.1,819.7 L1920.0,822.0 L1912.9,819.7 L1908.6,813.7 L1908.6,806.3 L1912.9,800.3 L1920.0,798.0 L1927.1,800.3 L1931.4,806.3Z" fill="rgba(120,230,110,0.22)" stroke="#3df57e" stroke-width="1.8"/><ellipse cx="1920" cy="810" rx="5.4" ry="12" fill="none" stroke="#3df57e" stroke-width="1.1"/><path d="M1908 805.2h24M1908 814.8h24M1920 798v24" stroke="#3df57e" stroke-width="1.1"/><path d="M1918,806 L1907.7,835.6 L1916,1004 L1927.7,835.8Z M1918,806 L1916,1004" fill="rgba(170,200,60,0.35)" stroke="#3df57e" stroke-width="1.8"/><path d="M1916,1004 L1905.7,1014.4 L1914,1075 L1925.7,1014.9Z M1916,1004 L1914,1075" fill="rgba(170,200,60,0.35)" stroke="#3df57e" stroke-width="1.8"/><path d="M1914,1075 L1903.7,1084.6 L1912,1141 L1923.7,1085.2Z M1914,1075 L1912,1141" fill="rgba(170,200,60,0.35)" stroke="#3df57e" stroke-width="1.8"/><path d="M1912,1141 L1901.7,1148.4 L1910,1193 L1921.7,1149.2Z M1912,1141 L1910,1193" fill="rgba(170,200,60,0.35)" stroke="#3df57e" stroke-width="1.8"/><path d="M1916,1004 L1917.3,982.9 L1856,905 L1896.7,995.4Z M1916,1004 L1856,905" fill="rgba(170,200,60,0.35)" stroke="#3df57e" stroke-width="1.8"/><path d="M1916,1004 L1935.4,995.9 L1978,907 L1915.2,983.0Z M1916,1004 L1978,907" fill="rgba(170,200,60,0.35)" stroke="#3df57e" stroke-width="1.8"/><path d="M1856,905 L1836.8,892.7 L1727,903 L1836.5,916.7Z M1856,905 L1727,903" fill="rgba(170,200,60,0.35)" stroke="#3df57e" stroke-width="1.8"/><path d="M1978,907 L1995.3,921.7 L2105,926 L1998.8,898.0Z M1978,907 L2105,926" fill="rgba(170,200,60,0.35)" stroke="#3df57e" stroke-width="1.8"/><path d="M1727,903 L1702.9,915.0 L1645,1033 L1726.5,930.0Z M1727,903 L1645,1033" fill="rgba(170,200,60,0.35)" stroke="#3df57e" stroke-width="1.8"/><path d="M1645,1033 L1618.0,1043.7 L1537,1164 L1639.6,1061.6Z M1645,1033 L1537,1164" fill="rgba(170,200,60,0.35)" stroke="#3df57e" stroke-width="1.8"/><path d="M2105,926 L2112.3,946.1 L2199,978 L2125.9,921.5Z M2105,926 L2199,978" fill="rgba(170,200,60,0.35)" stroke="#3df57e" stroke-width="1.8"/><path d="M2199,978 L2221.3,983.7 L2311,930 L2210.3,957.9Z M2199,978 L2311,930" fill="rgba(170,200,60,0.35)" stroke="#3df57e" stroke-width="1.8"/><path d="M1930.3,1008.6 L1924.8,1016.1 L1916.0,1019.0 L1907.2,1016.1 L1901.7,1008.6 L1901.7,999.4 L1907.2,991.9 L1916.0,989.0 L1924.8,991.9 L1930.3,999.4Z" fill="rgba(120,230,110,0.22)" stroke="#3df57e" stroke-width="1.8"/><ellipse cx="1916" cy="1004" rx="6.8" ry="15" fill="none" stroke="#3df57e" stroke-width="1.1"/><path d="M1901 998.0h30M1901 1010.0h30M1916 989v30" stroke="#3df57e" stroke-width="1.1"/><path d="M1928.3,1079.6 L1922.8,1087.1 L1914.0,1090.0 L1905.2,1087.1 L1899.7,1079.6 L1899.7,1070.4 L1905.2,1062.9 L1914.0,1060.0 L1922.8,1062.9 L1928.3,1070.4Z" fill="rgba(120,230,110,0.22)" stroke="#3df57e" stroke-width="1.8"/><ellipse cx="1914" cy="1075" rx="6.8" ry="15" fill="none" stroke="#3df57e" stroke-width="1.1"/><path d="M1899 1069.0h30M1899 1081.0h30M1914 1060v30" stroke="#3df57e" stroke-width="1.1"/><path d="M1926.3,1145.6 L1920.8,1153.1 L1912.0,1156.0 L1903.2,1153.1 L1897.7,1145.6 L1897.7,1136.4 L1903.2,1128.9 L1912.0,1126.0 L1920.8,1128.9 L1926.3,1136.4Z" fill="rgba(120,230,110,0.22)" stroke="#3df57e" stroke-width="1.8"/><ellipse cx="1912" cy="1141" rx="6.8" ry="15" fill="none" stroke="#3df57e" stroke-width="1.1"/><path d="M1897 1135.0h30M1897 1147.0h30M1912 1126v30" stroke="#3df57e" stroke-width="1.1"/><path d="M1924.3,1197.6 L1918.8,1205.1 L1910.0,1208.0 L1901.2,1205.1 L1895.7,1197.6 L1895.7,1188.4 L1901.2,1180.9 L1910.0,1178.0 L1918.8,1180.9 L1924.3,1188.4Z" fill="rgba(120,230,110,0.22)" stroke="#3df57e" stroke-width="1.8"/><ellipse cx="1910" cy="1193" rx="6.8" ry="15" fill="none" stroke="#3df57e" stroke-width="1.1"/><path d="M1895 1187.0h30M1895 1199.0h30M1910 1178v30" stroke="#3df57e" stroke-width="1.1"/><path d="M1870.3,909.6 L1864.8,917.1 L1856.0,920.0 L1847.2,917.1 L1841.7,909.6 L1841.7,900.4 L1847.2,892.9 L1856.0,890.0 L1864.8,892.9 L1870.3,900.4Z" fill="rgba(120,230,110,0.22)" stroke="#3df57e" stroke-width="1.8"/><ellipse cx="1856" cy="905" rx="6.8" ry="15" fill="none" stroke="#3df57e" stroke-width="1.1"/><path d="M1841 899.0h30M1841 911.0h30M1856 890v30" stroke="#3df57e" stroke-width="1.1"/><path d="M1992.3,911.6 L1986.8,919.1 L1978.0,922.0 L1969.2,919.1 L1963.7,911.6 L1963.7,902.4 L1969.2,894.9 L1978.0,892.0 L1986.8,894.9 L1992.3,902.4Z" fill="rgba(120,230,110,0.22)" stroke="#3df57e" stroke-width="1.8"/><ellipse cx="1978" cy="907" rx="6.8" ry="15" fill="none" stroke="#3df57e" stroke-width="1.1"/><path d="M1963 901.0h30M1963 913.0h30M1978 892v30" stroke="#3df57e" stroke-width="1.1"/><path d="M1741.3,907.6 L1735.8,915.1 L1727.0,918.0 L1718.2,915.1 L1712.7,907.6 L1712.7,898.4 L1718.2,890.9 L1727.0,888.0 L1735.8,890.9 L1741.3,898.4Z" fill="rgba(120,230,110,0.22)" stroke="#3df57e" stroke-width="1.8"/><ellipse cx="1727" cy="903" rx="6.8" ry="15" fill="none" stroke="#3df57e" stroke-width="1.1"/><path d="M1712 897.0h30M1712 909.0h30M1727 888v30" stroke="#3df57e" stroke-width="1.1"/><path d="M2119.3,930.6 L2113.8,938.1 L2105.0,941.0 L2096.2,938.1 L2090.7,930.6 L2090.7,921.4 L2096.2,913.9 L2105.0,911.0 L2113.8,913.9 L2119.3,921.4Z" fill="rgba(120,230,110,0.22)" stroke="#3df57e" stroke-width="1.8"/><ellipse cx="2105" cy="926" rx="6.8" ry="15" fill="none" stroke="#3df57e" stroke-width="1.1"/><path d="M2090 920.0h30M2090 932.0h30M2105 911v30" stroke="#3df57e" stroke-width="1.1"/><path d="M1659.3,1037.6 L1653.8,1045.1 L1645.0,1048.0 L1636.2,1045.1 L1630.7,1037.6 L1630.7,1028.4 L1636.2,1020.9 L1645.0,1018.0 L1653.8,1020.9 L1659.3,1028.4Z" fill="rgba(120,230,110,0.22)" stroke="#3df57e" stroke-width="1.8"/><ellipse cx="1645" cy="1033" rx="6.8" ry="15" fill="none" stroke="#3df57e" stroke-width="1.1"/><path d="M1630 1027.0h30M1630 1039.0h30M1645 1018v30" stroke="#3df57e" stroke-width="1.1"/><path d="M1551.3,1168.6 L1545.8,1176.1 L1537.0,1179.0 L1528.2,1176.1 L1522.7,1168.6 L1522.7,1159.4 L1528.2,1151.9 L1537.0,1149.0 L1545.8,1151.9 L1551.3,1159.4Z" fill="rgba(120,230,110,0.22)" stroke="#3df57e" stroke-width="1.8"/><ellipse cx="1537" cy="1164" rx="6.8" ry="15" fill="none" stroke="#3df57e" stroke-width="1.1"/><path d="M1522 1158.0h30M1522 1170.0h30M1537 1149v30" stroke="#3df57e" stroke-width="1.1"/><path d="M2213.3,982.6 L2207.8,990.1 L2199.0,993.0 L2190.2,990.1 L2184.7,982.6 L2184.7,973.4 L2190.2,965.9 L2199.0,963.0 L2207.8,965.9 L2213.3,973.4Z" fill="rgba(120,230,110,0.22)" stroke="#3df57e" stroke-width="1.8"/><ellipse cx="2199" cy="978" rx="6.8" ry="15" fill="none" stroke="#3df57e" stroke-width="1.1"/><path d="M2184 972.0h30M2184 984.0h30M2199 963v30" stroke="#3df57e" stroke-width="1.1"/><path d="M2325.3,934.6 L2319.8,942.1 L2311.0,945.0 L2302.2,942.1 L2296.7,934.6 L2296.7,925.4 L2302.2,917.9 L2311.0,915.0 L2319.8,917.9 L2325.3,925.4Z" fill="rgba(120,230,110,0.22)" stroke="#3df57e" stroke-width="1.8"/><ellipse cx="2311" cy="930" rx="6.8" ry="15" fill="none" stroke="#3df57e" stroke-width="1.1"/><path d="M2296 924.0h30M2296 936.0h30M2311 915v30" stroke="#3df57e" stroke-width="1.1"/><ellipse cx="1913" cy="1145" rx="178" ry="15" fill="none" stroke="#3df57e" stroke-width="2"/><path d="M1910,1193 L1891.2,1194.1 L1839,1259 L1907.5,1211.7Z M1910,1193 L1839,1259" fill="rgba(170,200,60,0.35)" stroke="#3df57e" stroke-width="1.8"/><path d="M1910,1193 L1911.5,1212.0 L1978,1265 L1928.9,1195.6Z M1910,1193 L1978,1265" fill="rgba(170,200,60,0.35)" stroke="#3df57e" stroke-width="1.8"/><path d="M1854.2,1263.9 L1848.4,1271.9 L1839.0,1275.0 L1829.6,1271.9 L1823.8,1263.9 L1823.8,1254.1 L1829.6,1246.1 L1839.0,1243.0 L1848.4,1246.1 L1854.2,1254.1Z" fill="rgba(120,230,110,0.22)" stroke="#3df57e" stroke-width="1.8"/><ellipse cx="1839" cy="1259" rx="7.2" ry="16" fill="none" stroke="#3df57e" stroke-width="1.1"/><path d="M1823 1252.6h32M1823 1265.4h32M1839 1243v32" stroke="#3df57e" stroke-width="1.1"/><path d="M1993.2,1269.9 L1987.4,1277.9 L1978.0,1281.0 L1968.6,1277.9 L1962.8,1269.9 L1962.8,1260.1 L1968.6,1252.1 L1978.0,1249.0 L1987.4,1252.1 L1993.2,1260.1Z" fill="rgba(120,230,110,0.22)" stroke="#3df57e" stroke-width="1.8"/><ellipse cx="1978" cy="1265" rx="7.2" ry="16" fill="none" stroke="#3df57e" stroke-width="1.1"/><path d="M1962 1258.6h32M1962 1271.4h32M1978 1249v32" stroke="#3df57e" stroke-width="1.1"/><ellipse cx="1832" cy="1259" rx="72" ry="18" transform="rotate(6 1832 1259)" fill="none" stroke="#3df57e" stroke-width="2"/><ellipse cx="1979" cy="1267" rx="68" ry="14" transform="rotate(-4 1979 1267)" fill="none" stroke="#3df57e" stroke-width="2"/><path d="M1839,1259 L1818.8,1282.2 L1795,1436 L1846.0,1288.9Z M1839,1259 L1795,1436" fill="rgba(170,200,60,0.35)" stroke="#3df57e" stroke-width="1.8"/><path d="M1795,1436 L1776.2,1472.1 L1762,1689 L1803.9,1475.8Z M1795,1436 L1762,1689" fill="rgba(170,200,60,0.35)" stroke="#3df57e" stroke-width="1.8"/><path d="M1762,1689 L1749.9,1694.1 L1745,1743 L1769.0,1700.1Z M1762,1689 L1745,1743" fill="rgba(170,200,60,0.35)" stroke="#3df57e" stroke-width="1.8"/><path d="M1810.2,1440.9 L1804.4,1448.9 L1795.0,1452.0 L1785.6,1448.9 L1779.8,1440.9 L1779.8,1431.1 L1785.6,1423.1 L1795.0,1420.0 L1804.4,1423.1 L1810.2,1431.1Z" fill="rgba(120,230,110,0.22)" stroke="#3df57e" stroke-width="1.8"/><ellipse cx="1795" cy="1436" rx="7.2" ry="16" fill="none" stroke="#3df57e" stroke-width="1.1"/><path d="M1779 1429.6h32M1779 1442.4h32M1795 1420v32" stroke="#3df57e" stroke-width="1.1"/><path d="M1774.4,1693.0 L1769.6,1699.5 L1762.0,1702.0 L1754.4,1699.5 L1749.6,1693.0 L1749.6,1685.0 L1754.4,1678.5 L1762.0,1676.0 L1769.6,1678.5 L1774.4,1685.0Z" fill="rgba(120,230,110,0.22)" stroke="#3df57e" stroke-width="1.8"/><ellipse cx="1762" cy="1689" rx="5.9" ry="13" fill="none" stroke="#3df57e" stroke-width="1.1"/><path d="M1749 1683.8h26M1749 1694.2h26M1762 1676v26" stroke="#3df57e" stroke-width="1.1"/><path d="M1978,1265 L1967.1,1294.1 L1998,1449 L1994.9,1291.1Z M1978,1265 L1998,1449" fill="rgba(170,200,60,0.35)" stroke="#3df57e" stroke-width="1.8"/><path d="M1998,1449 L1990.9,1491.4 L2043,1716 L2018.6,1486.7Z M1998,1449 L2043,1716" fill="rgba(170,200,60,0.35)" stroke="#3df57e" stroke-width="1.8"/><path d="M2043,1716 L2033.0,1722.5 L2043,1759 L2053.0,1722.5Z M2043,1716 L2043,1759" fill="rgba(170,200,60,0.35)" stroke="#3df57e" stroke-width="1.8"/><path d="M2013.2,1453.9 L2007.4,1461.9 L1998.0,1465.0 L1988.6,1461.9 L1982.8,1453.9 L1982.8,1444.1 L1988.6,1436.1 L1998.0,1433.0 L2007.4,1436.1 L2013.2,1444.1Z" fill="rgba(120,230,110,0.22)" stroke="#3df57e" stroke-width="1.8"/><ellipse cx="1998" cy="1449" rx="7.2" ry="16" fill="none" stroke="#3df57e" stroke-width="1.1"/><path d="M1982 1442.6h32M1982 1455.4h32M1998 1433v32" stroke="#3df57e" stroke-width="1.1"/><path d="M2055.4,1720.0 L2050.6,1726.5 L2043.0,1729.0 L2035.4,1726.5 L2030.6,1720.0 L2030.6,1712.0 L2035.4,1705.5 L2043.0,1703.0 L2050.6,1705.5 L2055.4,1712.0Z" fill="rgba(120,230,110,0.22)" stroke="#3df57e" stroke-width="1.8"/><ellipse cx="2043" cy="1716" rx="5.9" ry="13" fill="none" stroke="#3df57e" stroke-width="1.1"/><path d="M2030 1710.8h26M2030 1721.2h26M2043 1703v26" stroke="#3df57e" stroke-width="1.1"/><path d="M1781.6,924.9 L1750.2,953.0 L1705.8,953.0 L1674.4,924.9 L1674.4,885.1 L1705.8,857.0 L1750.2,857.0 L1781.6,885.1Z" fill="none" stroke="#3df57e" stroke-width="2"/><path d="M2156.8,950.7 L2127.0,984.3 L2085.0,984.3 L2055.2,950.7 L2055.2,903.3 L2085.0,869.7 L2127.0,869.7 L2156.8,903.3Z" fill="none" stroke="#3df57e" stroke-width="2"/><path d="M1588.0,1180.6 L1559.9,1205.5 L1520.1,1205.5 L1492.0,1180.6 L1492.0,1145.4 L1520.1,1120.5 L1559.9,1120.5 L1588.0,1145.4Z" fill="none" stroke="#3df57e" stroke-width="2"/><path d="M1823.1,1693.7 L1788.5,1704.5 L1739.5,1704.5 L1704.9,1693.7 L1704.9,1678.3 L1739.5,1667.5 L1788.5,1667.5 L1823.1,1678.3Z" fill="none" stroke="#3df57e" stroke-width="2"/><path d="M2101.1,1720.5 L2066.5,1729.7 L2017.5,1729.7 L1982.9,1720.5 L1982.9,1707.5 L2017.5,1698.3 L2066.5,1698.3 L2101.1,1707.5Z" fill="none" stroke="#3df57e" stroke-width="2"/><path d="M1791.2,1759.1 L1764.1,1786.2 L1725.9,1786.2 L1698.8,1759.1 L1698.8,1720.9 L1725.9,1693.8 L1764.1,1693.8 L1791.2,1720.9Z" fill="none" stroke="#3df57e" stroke-width="2"/><path d="M2091.1,1779.4 L2063.5,1805.3 L2024.5,1805.3 L1996.9,1779.4 L1996.9,1742.6 L2024.5,1716.7 L2063.5,1716.7 L2091.1,1742.6Z" fill="none" stroke="#3df57e" stroke-width="2"/><path d="M1537,1161 L1528.2,1166.1 L1500,1211 L1534.7,1170.9Z M1537,1161 L1500,1211" fill="rgba(170,200,60,0.35)" stroke="#3df57e" stroke-width="1.8"/><path d="M1500,1211 L1495.6,1213.0 L1497,1229 L1503.5,1214.4Z M1500,1211 L1497,1229" fill="rgba(170,200,60,0.35)" stroke="#3df57e" stroke-width="1.8"/><path d="M1497,1229 L1492.5,1229.3 L1491,1242 L1499.7,1232.6Z M1497,1229 L1491,1242" fill="rgba(170,200,60,0.35)" stroke="#3df57e" stroke-width="1.8"/><path d="M1491,1242 L1486.9,1243.8 L1490,1256 L1494.8,1244.4Z M1491,1242 L1490,1256" fill="rgba(170,200,60,0.35)" stroke="#3df57e" stroke-width="1.8"/><path d="M1490,1256 L1487.1,1261.8 L1497,1289 L1495.0,1260.1Z M1490,1256 L1497,1289" fill="rgba(170,200,60,0.35)" stroke="#3df57e" stroke-width="1.8"/><path d="M1497,1289 L1492.6,1290.9 L1494,1306 L1500.5,1292.2Z M1497,1289 L1494,1306" fill="rgba(170,200,60,0.35)" stroke="#3df57e" stroke-width="1.8"/><path d="M1494,1306 L1491.0,1311.7 L1500,1339 L1498.8,1310.2Z M1494,1306 L1500,1339" fill="rgba(170,200,60,0.35)" stroke="#3df57e" stroke-width="1.8"/><path d="M1507.6,1213.5 L1504.7,1217.5 L1500.0,1219.0 L1495.3,1217.5 L1492.4,1213.5 L1492.4,1208.5 L1495.3,1204.5 L1500.0,1203.0 L1504.7,1204.5 L1507.6,1208.5Z" fill="rgba(120,230,110,0.22)" stroke="#3df57e" stroke-width="1.8"/><ellipse cx="1500" cy="1211" rx="3.6" ry="8" fill="none" stroke="#3df57e" stroke-width="1.1"/><path d="M1492 1207.8h16M1492 1214.2h16M1500 1203v16" stroke="#3df57e" stroke-width="1.1"/><path d="M1504.6,1231.5 L1501.7,1235.5 L1497.0,1237.0 L1492.3,1235.5 L1489.4,1231.5 L1489.4,1226.5 L1492.3,1222.5 L1497.0,1221.0 L1501.7,1222.5 L1504.6,1226.5Z" fill="rgba(120,230,110,0.22)" stroke="#3df57e" stroke-width="1.8"/><ellipse cx="1497" cy="1229" rx="3.6" ry="8" fill="none" stroke="#3df57e" stroke-width="1.1"/><path d="M1489 1225.8h16M1489 1232.2h16M1497 1221v16" stroke="#3df57e" stroke-width="1.1"/><path d="M1498.6,1244.5 L1495.7,1248.5 L1491.0,1250.0 L1486.3,1248.5 L1483.4,1244.5 L1483.4,1239.5 L1486.3,1235.5 L1491.0,1234.0 L1495.7,1235.5 L1498.6,1239.5Z" fill="rgba(120,230,110,0.22)" stroke="#3df57e" stroke-width="1.8"/><ellipse cx="1491" cy="1242" rx="3.6" ry="8" fill="none" stroke="#3df57e" stroke-width="1.1"/><path d="M1483 1238.8h16M1483 1245.2h16M1491 1234v16" stroke="#3df57e" stroke-width="1.1"/><path d="M1497.6,1258.5 L1494.7,1262.5 L1490.0,1264.0 L1485.3,1262.5 L1482.4,1258.5 L1482.4,1253.5 L1485.3,1249.5 L1490.0,1248.0 L1494.7,1249.5 L1497.6,1253.5Z" fill="rgba(120,230,110,0.22)" stroke="#3df57e" stroke-width="1.8"/><ellipse cx="1490" cy="1256" rx="3.6" ry="8" fill="none" stroke="#3df57e" stroke-width="1.1"/><path d="M1482 1252.8h16M1482 1259.2h16M1490 1248v16" stroke="#3df57e" stroke-width="1.1"/><path d="M1504.6,1291.5 L1501.7,1295.5 L1497.0,1297.0 L1492.3,1295.5 L1489.4,1291.5 L1489.4,1286.5 L1492.3,1282.5 L1497.0,1281.0 L1501.7,1282.5 L1504.6,1286.5Z" fill="rgba(120,230,110,0.22)" stroke="#3df57e" stroke-width="1.8"/><ellipse cx="1497" cy="1289" rx="3.6" ry="8" fill="none" stroke="#3df57e" stroke-width="1.1"/><path d="M1489 1285.8h16M1489 1292.2h16M1497 1281v16" stroke="#3df57e" stroke-width="1.1"/><path d="M1501.6,1308.5 L1498.7,1312.5 L1494.0,1314.0 L1489.3,1312.5 L1486.4,1308.5 L1486.4,1303.5 L1489.3,1299.5 L1494.0,1298.0 L1498.7,1299.5 L1501.6,1303.5Z" fill="rgba(120,230,110,0.22)" stroke="#3df57e" stroke-width="1.8"/><ellipse cx="1494" cy="1306" rx="3.6" ry="8" fill="none" stroke="#3df57e" stroke-width="1.1"/><path d="M1486 1302.8h16M1486 1309.2h16M1494 1298v16" stroke="#3df57e" stroke-width="1.1"/><path d="M1507.6,1341.5 L1504.7,1345.5 L1500.0,1347.0 L1495.3,1345.5 L1492.4,1341.5 L1492.4,1336.5 L1495.3,1332.5 L1500.0,1331.0 L1504.7,1332.5 L1507.6,1336.5Z" fill="rgba(120,230,110,0.22)" stroke="#3df57e" stroke-width="1.8"/><ellipse cx="1500" cy="1339" rx="3.6" ry="8" fill="none" stroke="#3df57e" stroke-width="1.1"/><path d="M1492 1335.8h16M1492 1342.2h16M1500 1331v16" stroke="#3df57e" stroke-width="1.1"/><path d="M1537,1161 L1530.4,1166.7 L1518,1209 L1537.9,1169.7Z M1537,1161 L1518,1209" fill="rgba(170,200,60,0.35)" stroke="#3df57e" stroke-width="1.8"/><path d="M1518,1209 L1515.1,1216.1 L1525,1252 L1523.0,1214.8Z M1518,1209 L1525,1252" fill="rgba(170,200,60,0.35)" stroke="#3df57e" stroke-width="1.8"/><path d="M1525,1252 L1522.9,1258.1 L1536,1284 L1530.4,1255.5Z M1525,1252 L1536,1284" fill="rgba(170,200,60,0.35)" stroke="#3df57e" stroke-width="1.8"/><path d="M1525.6,1211.5 L1522.7,1215.5 L1518.0,1217.0 L1513.3,1215.5 L1510.4,1211.5 L1510.4,1206.5 L1513.3,1202.5 L1518.0,1201.0 L1522.7,1202.5 L1525.6,1206.5Z" fill="rgba(120,230,110,0.22)" stroke="#3df57e" stroke-width="1.8"/><ellipse cx="1518" cy="1209" rx="3.6" ry="8" fill="none" stroke="#3df57e" stroke-width="1.1"/><path d="M1510 1205.8h16M1510 1212.2h16M1518 1201v16" stroke="#3df57e" stroke-width="1.1"/><path d="M1532.6,1254.5 L1529.7,1258.5 L1525.0,1260.0 L1520.3,1258.5 L1517.4,1254.5 L1517.4,1249.5 L1520.3,1245.5 L1525.0,1244.0 L1529.7,1245.5 L1532.6,1249.5Z" fill="rgba(120,230,110,0.22)" stroke="#3df57e" stroke-width="1.8"/><ellipse cx="1525" cy="1252" rx="3.6" ry="8" fill="none" stroke="#3df57e" stroke-width="1.1"/><path d="M1517 1248.8h16M1517 1255.2h16M1525 1244v16" stroke="#3df57e" stroke-width="1.1"/><path d="M1543.6,1286.5 L1540.7,1290.5 L1536.0,1292.0 L1531.3,1290.5 L1528.4,1286.5 L1528.4,1281.5 L1531.3,1277.5 L1536.0,1276.0 L1540.7,1277.5 L1543.6,1281.5Z" fill="rgba(120,230,110,0.22)" stroke="#3df57e" stroke-width="1.8"/><ellipse cx="1536" cy="1284" rx="3.6" ry="8" fill="none" stroke="#3df57e" stroke-width="1.1"/><path d="M1528 1280.8h16M1528 1287.2h16M1536 1276v16" stroke="#3df57e" stroke-width="1.1"/><path d="M1537,1161 L1544.0,1169.7 L1597,1196 L1548.0,1162.8Z M1537,1161 L1597,1196" fill="rgba(170,200,60,0.35)" stroke="#3df57e" stroke-width="1.8"/><path d="M1597,1196 L1594.6,1201.3 L1606,1223 L1602.1,1198.8Z M1597,1196 L1606,1223" fill="rgba(170,200,60,0.35)" stroke="#3df57e" stroke-width="1.8"/><path d="M1606,1223 L1603.3,1227.2 L1613,1242 L1610.8,1224.5Z M1606,1223 L1613,1242" fill="rgba(170,200,60,0.35)" stroke="#3df57e" stroke-width="1.8"/><path d="M1613,1242 L1610.9,1247.6 L1624,1269 L1618.4,1244.5Z M1613,1242 L1624,1269" fill="rgba(170,200,60,0.35)" stroke="#3df57e" stroke-width="1.8"/><path d="M1604.6,1198.5 L1601.7,1202.5 L1597.0,1204.0 L1592.3,1202.5 L1589.4,1198.5 L1589.4,1193.5 L1592.3,1189.5 L1597.0,1188.0 L1601.7,1189.5 L1604.6,1193.5Z" fill="rgba(120,230,110,0.22)" stroke="#3df57e" stroke-width="1.8"/><ellipse cx="1597" cy="1196" rx="3.6" ry="8" fill="none" stroke="#3df57e" stroke-width="1.1"/><path d="M1589 1192.8h16M1589 1199.2h16M1597 1188v16" stroke="#3df57e" stroke-width="1.1"/><path d="M1613.6,1225.5 L1610.7,1229.5 L1606.0,1231.0 L1601.3,1229.5 L1598.4,1225.5 L1598.4,1220.5 L1601.3,1216.5 L1606.0,1215.0 L1610.7,1216.5 L1613.6,1220.5Z" fill="rgba(120,230,110,0.22)" stroke="#3df57e" stroke-width="1.8"/><ellipse cx="1606" cy="1223" rx="3.6" ry="8" fill="none" stroke="#3df57e" stroke-width="1.1"/><path d="M1598 1219.8h16M1598 1226.2h16M1606 1215v16" stroke="#3df57e" stroke-width="1.1"/><path d="M1620.6,1244.5 L1617.7,1248.5 L1613.0,1250.0 L1608.3,1248.5 L1605.4,1244.5 L1605.4,1239.5 L1608.3,1235.5 L1613.0,1234.0 L1617.7,1235.5 L1620.6,1239.5Z" fill="rgba(120,230,110,0.22)" stroke="#3df57e" stroke-width="1.8"/><ellipse cx="1613" cy="1242" rx="3.6" ry="8" fill="none" stroke="#3df57e" stroke-width="1.1"/><path d="M1605 1238.8h16M1605 1245.2h16M1613 1234v16" stroke="#3df57e" stroke-width="1.1"/><path d="M1631.6,1271.5 L1628.7,1275.5 L1624.0,1277.0 L1619.3,1275.5 L1616.4,1271.5 L1616.4,1266.5 L1619.3,1262.5 L1624.0,1261.0 L1628.7,1262.5 L1631.6,1266.5Z" fill="rgba(120,230,110,0.22)" stroke="#3df57e" stroke-width="1.8"/><ellipse cx="1624" cy="1269" rx="3.6" ry="8" fill="none" stroke="#3df57e" stroke-width="1.1"/><path d="M1616 1265.8h16M1616 1272.2h16M1624 1261v16" stroke="#3df57e" stroke-width="1.1"/><path d="M2311,930 L2311.3,920.2 L2284,881 L2302.6,925.1Z M2311,930 L2284,881" fill="rgba(170,200,60,0.35)" stroke="#3df57e" stroke-width="1.8"/><path d="M2284,881 L2289.5,877.7 L2288,854 L2279.7,876.2Z M2284,881 L2288,854" fill="rgba(170,200,60,0.35)" stroke="#3df57e" stroke-width="1.8"/><path d="M2288,854 L2293.7,851.8 L2294,831 L2284.1,849.3Z M2288,854 L2294,831" fill="rgba(170,200,60,0.35)" stroke="#3df57e" stroke-width="1.8"/><path d="M2294,831 L2299.8,827.7 L2300,802 L2290.0,825.6Z M2294,831 L2300,802" fill="rgba(170,200,60,0.35)" stroke="#3df57e" stroke-width="1.8"/><path d="M2292.6,883.8 L2289.3,888.3 L2284.0,890.0 L2278.7,888.3 L2275.4,883.8 L2275.4,878.2 L2278.7,873.7 L2284.0,872.0 L2289.3,873.7 L2292.6,878.2Z" fill="rgba(120,230,110,0.22)" stroke="#3df57e" stroke-width="1.8"/><ellipse cx="2284" cy="881" rx="4.0" ry="9" fill="none" stroke="#3df57e" stroke-width="1.1"/><path d="M2275 877.4h18M2275 884.6h18M2284 872v18" stroke="#3df57e" stroke-width="1.1"/><path d="M2296.6,856.8 L2293.3,861.3 L2288.0,863.0 L2282.7,861.3 L2279.4,856.8 L2279.4,851.2 L2282.7,846.7 L2288.0,845.0 L2293.3,846.7 L2296.6,851.2Z" fill="rgba(120,230,110,0.22)" stroke="#3df57e" stroke-width="1.8"/><ellipse cx="2288" cy="854" rx="4.0" ry="9" fill="none" stroke="#3df57e" stroke-width="1.1"/><path d="M2279 850.4h18M2279 857.6h18M2288 845v18" stroke="#3df57e" stroke-width="1.1"/><path d="M2302.6,833.8 L2299.3,838.3 L2294.0,840.0 L2288.7,838.3 L2285.4,833.8 L2285.4,828.2 L2288.7,823.7 L2294.0,822.0 L2299.3,823.7 L2302.6,828.2Z" fill="rgba(120,230,110,0.22)" stroke="#3df57e" stroke-width="1.8"/><ellipse cx="2294" cy="831" rx="4.0" ry="9" fill="none" stroke="#3df57e" stroke-width="1.1"/><path d="M2285 827.4h18M2285 834.6h18M2294 822v18" stroke="#3df57e" stroke-width="1.1"/><path d="M2308.6,804.8 L2305.3,809.3 L2300.0,811.0 L2294.7,809.3 L2291.4,804.8 L2291.4,799.2 L2294.7,794.7 L2300.0,793.0 L2305.3,794.7 L2308.6,799.2Z" fill="rgba(120,230,110,0.22)" stroke="#3df57e" stroke-width="1.8"/><ellipse cx="2300" cy="802" rx="4.0" ry="9" fill="none" stroke="#3df57e" stroke-width="1.1"/><path d="M2291 798.4h18M2291 805.6h18M2300 793v18" stroke="#3df57e" stroke-width="1.1"/><path d="M2311,930 L2316.9,922.1 L2317,874 L2306.9,921.1Z M2311,930 L2317,874" fill="rgba(170,200,60,0.35)" stroke="#3df57e" stroke-width="1.8"/><path d="M2317,874 L2324.3,870.7 L2336,837 L2315.4,866.2Z M2317,874 L2336,837" fill="rgba(170,200,60,0.35)" stroke="#3df57e" stroke-width="1.8"/><path d="M2336,837 L2343.1,831.6 L2352,790 L2333.7,828.3Z M2336,837 L2352,790" fill="rgba(170,200,60,0.35)" stroke="#3df57e" stroke-width="1.8"/><path d="M2352,790 L2358.3,787.8 L2363,763 L2349.0,784.1Z M2352,790 L2363,763" fill="rgba(170,200,60,0.35)" stroke="#3df57e" stroke-width="1.8"/><path d="M2325.6,876.8 L2322.3,881.3 L2317.0,883.0 L2311.7,881.3 L2308.4,876.8 L2308.4,871.2 L2311.7,866.7 L2317.0,865.0 L2322.3,866.7 L2325.6,871.2Z" fill="rgba(120,230,110,0.22)" stroke="#3df57e" stroke-width="1.8"/><ellipse cx="2317" cy="874" rx="4.0" ry="9" fill="none" stroke="#3df57e" stroke-width="1.1"/><path d="M2308 870.4h18M2308 877.6h18M2317 865v18" stroke="#3df57e" stroke-width="1.1"/><path d="M2344.6,839.8 L2341.3,844.3 L2336.0,846.0 L2330.7,844.3 L2327.4,839.8 L2327.4,834.2 L2330.7,829.7 L2336.0,828.0 L2341.3,829.7 L2344.6,834.2Z" fill="rgba(120,230,110,0.22)" stroke="#3df57e" stroke-width="1.8"/><ellipse cx="2336" cy="837" rx="4.0" ry="9" fill="none" stroke="#3df57e" stroke-width="1.1"/><path d="M2327 833.4h18M2327 840.6h18M2336 828v18" stroke="#3df57e" stroke-width="1.1"/><path d="M2360.6,792.8 L2357.3,797.3 L2352.0,799.0 L2346.7,797.3 L2343.4,792.8 L2343.4,787.2 L2346.7,782.7 L2352.0,781.0 L2357.3,782.7 L2360.6,787.2Z" fill="rgba(120,230,110,0.22)" stroke="#3df57e" stroke-width="1.8"/><ellipse cx="2352" cy="790" rx="4.0" ry="9" fill="none" stroke="#3df57e" stroke-width="1.1"/><path d="M2343 786.4h18M2343 793.6h18M2352 781v18" stroke="#3df57e" stroke-width="1.1"/><path d="M2371.6,765.8 L2368.3,770.3 L2363.0,772.0 L2357.7,770.3 L2354.4,765.8 L2354.4,760.2 L2357.7,755.7 L2363.0,754.0 L2368.3,755.7 L2371.6,760.2Z" fill="rgba(120,230,110,0.22)" stroke="#3df57e" stroke-width="1.8"/><ellipse cx="2363" cy="763" rx="4.0" ry="9" fill="none" stroke="#3df57e" stroke-width="1.1"/><path d="M2354 759.4h18M2354 766.6h18M2363 754v18" stroke="#3df57e" stroke-width="1.1"/><path d="M2311,930 L2322.0,925.4 L2360,877 L2314.7,918.7Z M2311,930 L2360,877" fill="rgba(170,200,60,0.35)" stroke="#3df57e" stroke-width="1.8"/><path d="M2360,877 L2367.4,875.8 L2383,848 L2359.5,869.5Z M2360,877 L2383,848" fill="rgba(170,200,60,0.35)" stroke="#3df57e" stroke-width="1.8"/><path d="M2383,848 L2391.0,844.6 L2408,808 L2382.5,839.4Z M2383,848 L2408,808" fill="rgba(170,200,60,0.35)" stroke="#3df57e" stroke-width="1.8"/><path d="M2408,808 L2414.7,807.1 L2425,783 L2406.4,801.4Z M2408,808 L2425,783" fill="rgba(170,200,60,0.35)" stroke="#3df57e" stroke-width="1.8"/><path d="M2368.6,879.8 L2365.3,884.3 L2360.0,886.0 L2354.7,884.3 L2351.4,879.8 L2351.4,874.2 L2354.7,869.7 L2360.0,868.0 L2365.3,869.7 L2368.6,874.2Z" fill="rgba(120,230,110,0.22)" stroke="#3df57e" stroke-width="1.8"/><ellipse cx="2360" cy="877" rx="4.0" ry="9" fill="none" stroke="#3df57e" stroke-width="1.1"/><path d="M2351 873.4h18M2351 880.6h18M2360 868v18" stroke="#3df57e" stroke-width="1.1"/><path d="M2391.6,850.8 L2388.3,855.3 L2383.0,857.0 L2377.7,855.3 L2374.4,850.8 L2374.4,845.2 L2377.7,840.7 L2383.0,839.0 L2388.3,840.7 L2391.6,845.2Z" fill="rgba(120,230,110,0.22)" stroke="#3df57e" stroke-width="1.8"/><ellipse cx="2383" cy="848" rx="4.0" ry="9" fill="none" stroke="#3df57e" stroke-width="1.1"/><path d="M2374 844.4h18M2374 851.6h18M2383 839v18" stroke="#3df57e" stroke-width="1.1"/><path d="M2416.6,810.8 L2413.3,815.3 L2408.0,817.0 L2402.7,815.3 L2399.4,810.8 L2399.4,805.2 L2402.7,800.7 L2408.0,799.0 L2413.3,800.7 L2416.6,805.2Z" fill="rgba(120,230,110,0.22)" stroke="#3df57e" stroke-width="1.8"/><ellipse cx="2408" cy="808" rx="4.0" ry="9" fill="none" stroke="#3df57e" stroke-width="1.1"/><path d="M2399 804.4h18M2399 811.6h18M2408 799v18" stroke="#3df57e" stroke-width="1.1"/><path d="M2433.6,785.8 L2430.3,790.3 L2425.0,792.0 L2419.7,790.3 L2416.4,785.8 L2416.4,780.2 L2419.7,775.7 L2425.0,774.0 L2430.3,775.7 L2433.6,780.2Z" fill="rgba(120,230,110,0.22)" stroke="#3df57e" stroke-width="1.8"/><ellipse cx="2425" cy="783" rx="4.0" ry="9" fill="none" stroke="#3df57e" stroke-width="1.1"/><path d="M2416 779.4h18M2416 786.6h18M2425 774v18" stroke="#3df57e" stroke-width="1.1"/><path d="M2311,930 L2323.0,932.8 L2385,916 L2321.2,923.0Z M2311,930 L2385,916" fill="rgba(170,200,60,0.35)" stroke="#3df57e" stroke-width="1.8"/><path d="M2385,916 L2391.8,915.9 L2406,893 L2384.5,909.2Z M2385,916 L2406,893" fill="rgba(170,200,60,0.35)" stroke="#3df57e" stroke-width="1.8"/><path d="M2406,893 L2414.3,890.5 L2435,856 L2406.4,884.4Z M2406,893 L2435,856" fill="rgba(170,200,60,0.35)" stroke="#3df57e" stroke-width="1.8"/><path d="M2435,856 L2441.7,855.7 L2454,833 L2434.0,849.4Z M2435,856 L2454,833" fill="rgba(170,200,60,0.35)" stroke="#3df57e" stroke-width="1.8"/><path d="M2393.6,918.8 L2390.3,923.3 L2385.0,925.0 L2379.7,923.3 L2376.4,918.8 L2376.4,913.2 L2379.7,908.7 L2385.0,907.0 L2390.3,908.7 L2393.6,913.2Z" fill="rgba(120,230,110,0.22)" stroke="#3df57e" stroke-width="1.8"/><ellipse cx="2385" cy="916" rx="4.0" ry="9" fill="none" stroke="#3df57e" stroke-width="1.1"/><path d="M2376 912.4h18M2376 919.6h18M2385 907v18" stroke="#3df57e" stroke-width="1.1"/><path d="M2414.6,895.8 L2411.3,900.3 L2406.0,902.0 L2400.7,900.3 L2397.4,895.8 L2397.4,890.2 L2400.7,885.7 L2406.0,884.0 L2411.3,885.7 L2414.6,890.2Z" fill="rgba(120,230,110,0.22)" stroke="#3df57e" stroke-width="1.8"/><ellipse cx="2406" cy="893" rx="4.0" ry="9" fill="none" stroke="#3df57e" stroke-width="1.1"/><path d="M2397 889.4h18M2397 896.6h18M2406 884v18" stroke="#3df57e" stroke-width="1.1"/><path d="M2443.6,858.8 L2440.3,863.3 L2435.0,865.0 L2429.7,863.3 L2426.4,858.8 L2426.4,853.2 L2429.7,848.7 L2435.0,847.0 L2440.3,848.7 L2443.6,853.2Z" fill="rgba(120,230,110,0.22)" stroke="#3df57e" stroke-width="1.8"/><ellipse cx="2435" cy="856" rx="4.0" ry="9" fill="none" stroke="#3df57e" stroke-width="1.1"/><path d="M2426 852.4h18M2426 859.6h18M2435 847v18" stroke="#3df57e" stroke-width="1.1"/><path d="M2462.6,835.8 L2459.3,840.3 L2454.0,842.0 L2448.7,840.3 L2445.4,835.8 L2445.4,830.2 L2448.7,825.7 L2454.0,824.0 L2459.3,825.7 L2462.6,830.2Z" fill="rgba(120,230,110,0.22)" stroke="#3df57e" stroke-width="1.8"/><ellipse cx="2454" cy="833" rx="4.0" ry="9" fill="none" stroke="#3df57e" stroke-width="1.1"/><path d="M2445 829.4h18M2445 836.6h18M2454 824v18" stroke="#3df57e" stroke-width="1.1"/><path d="M2311,930 L2313.9,940.3 L2356,968 L2321.6,931.1Z M2311,930 L2356,968" fill="rgba(170,200,60,0.35)" stroke="#3df57e" stroke-width="1.8"/><path d="M2260 975l0 28M2248 982l26 14" stroke="#3df57e" stroke-width="2"/><text x="1751" y="1682" font-size="18" font-weight="bold" fill="#10108a" font-family="Liberation Sans">TR</text><text x="2031" y="1709" font-size="18" font-weight="bold" fill="#10108a" font-family="Liberation Sans">TR</text><path d="M1895 1762h12M1901 1756v12" stroke="#3df57e" stroke-width="2"/></g></svg>
<div style="left:3231px;top:282px;width:572px;height:1663px;background:#444444;"></div>
<div style="left:3803px;top:282px;width:37px;height:1668px;background:#373737;"></div>
<svg style="left:3244px;top:295px" width="76" height="76" viewBox="0 0 76 76"><defs><linearGradient id="hikg" x1="0" y1="0" x2="0" y2="1"><stop offset="0" stop-color="#0aa0e0"/><stop offset="0.6" stop-color="#075a85"/><stop offset="1" stop-color="#021a2a"/></linearGradient></defs><rect x="1" y="1" width="74" height="74" rx="8" fill="url(#hikg)" stroke="#222" stroke-width="2"/><path d="M36 8a34 34 0 0 1 0 62" fill="none" stroke="#d8d8d8" stroke-width="3"/><circle cx="8" cy="12" r="5" fill="#fff"/><path d="M4 18l6 0 24-6 2 3-22 9-2 14 8 26-4 1-12-24-2 18H1V20z" fill="#fff"/><path d="M50 30l10 0-5 6z" fill="#fff"/></svg>
<div class="t" style="right:376px;top:300.6px;font-size:23.66px;color:#c8c8c8;transform-origin:right;transform:scaleX(0.93);">Character:</div>
<div class="t" style="right:376px;top:339.1px;font-size:23.66px;color:#c8c8c8;transform-origin:right;transform:scaleX(0.93);">Source:</div>
<div style="left:3471px;top:296px;width:320px;height:35px;background:#5d5d5d;border-radius:3px"></div>
<div style="left:3751px;top:296px;width:2px;height:35px;background:#4a4a4a;"></div>
<div class="t" style="left:3480px;top:301.6px;font-size:23.66px;color:#d0d0d0;transform-origin:left;transform:scaleX(0.93);">M4Y4_B07_M4Y4_rig</div>
<svg style="left:3758px;top:308px" width="28" height="14" viewBox="0 0 28 14"><path d="M3 2h20L13 12z" fill="#c4c4c4"/></svg>
<div style="left:3471px;top:335px;width:320px;height:34px;background:#5d5d5d;border-radius:3px"></div>
<div style="left:3751px;top:335px;width:2px;height:34px;background:#4a4a4a;"></div>
<div class="t" style="left:3485px;top:339.6px;font-size:23.66px;color:#d0d0d0;transform-origin:left;transform:scaleX(0.93);">Control Rig</div>
<svg style="left:3758px;top:346px" width="28" height="14" viewBox="0 0 28 14"><path d="M3 2h20L13 12z" fill="#c4c4c4"/></svg>
<div style="left:3238px;top:381px;width:46px;height:46px;background:#5285a6;border-radius:2px"></div>
<svg style="left:3238px;top:381px" width="46" height="46" viewBox="0 0 46 46"><path d="M12 34L34 12" stroke="#2a2a2a" stroke-width="12" stroke-linecap="round"/><path d="M12 34L34 12" stroke="#c4c4c4" stroke-width="8" stroke-linecap="round"/><circle cx="12" cy="34" r="8" fill="#e06a38" stroke="#2a2a2a" stroke-width="2"/><circle cx="34" cy="12" r="8" fill="#e06a38" stroke="#2a2a2a" stroke-width="2"/></svg>
<div style="left:3288px;top:381px;width:46px;height:46px;background:#5285a6;border-radius:2px"></div>
<svg style="left:3288px;top:381px" width="46" height="46" viewBox="0 0 46 46"><path d="M12 34L34 12" stroke="#2a2a2a" stroke-width="12" stroke-linecap="round"/><path d="M12 34L34 12" stroke="#e06a38" stroke-width="8" stroke-linecap="round"/><circle cx="12" cy="34" r="8" fill="#c4c4c4" stroke="#2a2a2a" stroke-width="2"/><circle cx="34" cy="12" r="8" fill="#c4c4c4" stroke="#2a2a2a" stroke-width="2"/></svg>
<svg style="left:3343px;top:384px" width="36" height="40" viewBox="0 0 36 40"><path d="M18 2v36" stroke="#c4c4c4" stroke-width="3"/><path d="M10 8q8 -4 16 0" fill="none" stroke="#c4c4c4" stroke-width="2.5"/><path d="M5 14q13 -4 26 0" fill="none" stroke="#c4c4c4" stroke-width="2.5"/><path d="M4 20q14 -4 28 0" fill="none" stroke="#c4c4c4" stroke-width="2.5"/><path d="M6 26q12 -4 24 0" fill="none" stroke="#c4c4c4" stroke-width="2.5"/><path d="M10 32q8 -4 16 0" fill="none" stroke="#c4c4c4" stroke-width="2.5"/></svg>
<div style="left:3389px;top:390px;width:2px;height:28px;background:#5a5a5a;"></div>
<svg style="left:3400px;top:384px" width="36" height="40" viewBox="0 0 36 40"><circle cx="18" cy="7" r="5" fill="#d8d8d8"/><path d="M2 14h32v5h-9v12h-5v-7h-4v7h-5V19H2z" fill="#d8d8d8"/><rect x="11" y="32" width="4" height="6" fill="#e06a38"/><rect x="21" y="32" width="4" height="6" fill="#e06a38"/><rect x="1" y="14" width="5" height="5" fill="#e06a38"/><rect x="30" y="14" width="5" height="5" fill="#e06a38"/></svg>
<div style="left:3445px;top:381px;width:46px;height:46px;background:#5285a6;border-radius:2px"></div>
<svg style="left:3450px;top:384px" width="36" height="40" viewBox="0 0 36 40"><circle cx="18" cy="7" r="5" fill="#d8d8d8"/><path d="M2 14h32v5h-9v12h-5v-7h-4v7h-5V19H2z" fill="#d8d8d8"/><rect x="11" y="32" width="4" height="6" fill="#8ab0c8"/><rect x="21" y="32" width="4" height="6" fill="#8ab0c8"/><rect x="1" y="14" width="5" height="5" fill="#8ab0c8"/><rect x="30" y="14" width="5" height="5" fill="#8ab0c8"/></svg>
<svg style="left:3499px;top:384px" width="36" height="40" viewBox="0 0 36 40"><circle cx="18" cy="7" r="5" fill="#9a9a9a"/><path d="M2 14h32v5h-9v12h-5v-7h-4v7h-5V19H2z" fill="#9a9a9a"/><rect x="11" y="32" width="4" height="6" fill="#9a9a9a"/><rect x="21" y="32" width="4" height="6" fill="#9a9a9a"/><rect x="1" y="14" width="5" height="5" fill="#9a9a9a"/><rect x="30" y="14" width="5" height="5" fill="#9a9a9a"/></svg>
<div style="left:3545px;top:390px;width:2px;height:28px;background:#5a5a5a;"></div>
<svg style="left:3557px;top:382px" width="36" height="44" viewBox="0 0 36 44"><path d="M7 4h8l-1 10 6 6H2l6-6z" fill="#e06a38"/><path d="M11 20v14" stroke="#e06a38" stroke-width="2.5"/><path d="M18 12h16M26 4v16" stroke="#c4c4c4" stroke-width="2.5"/><path d="M26 0l4 5h-8zM26 24l4-5h-8zM16 12l5-4v8zM36 12l-5-4v8z" fill="#c4c4c4"/></svg>
<svg style="left:3607px;top:382px" width="36" height="44" viewBox="0 0 36 44"><path d="M7 6h8l-1 10 6 6H2l6-6z" fill="#e06a38"/><path d="M11 22v14" stroke="#e06a38" stroke-width="2.5"/><path d="M20 8a10 10 0 1 1 8 18" fill="none" stroke="#c4c4c4" stroke-width="3"/><path d="M24 22l6 6-8 2z" fill="#c4c4c4"/></svg>
<svg style="left:3657px;top:390px" width="36" height="30" viewBox="0 0 36 30"><path d="M2 10h8l10-8v26l-10-8H2z" fill="#c4c4c4"/><path d="M24 15h10" stroke="#c4c4c4" stroke-width="3"/></svg>
<div style="left:3702px;top:390px;width:2px;height:28px;background:#5a5a5a;"></div>
<svg style="left:3715px;top:382px" width="34" height="44" viewBox="0 0 34 44"><circle cx="17" cy="7" r="5" fill="#e06a38"/><path d="M2 14h30v5h-9v22h-4v-10h-4v10h-4V19H2z" fill="#e06a38"/></svg>
<div style="left:3237px;top:430px;width:562px;height:36px;background:#383838;"></div>
<div style="left:3241px;top:434px;width:58px;height:32px;background:#363636;border:1px solid #444;border-bottom:none;border-radius:3px 3px 0 0"></div>
<div class="t" style="left:3257.0px;top:437.6px;font-size:23.66px;color:#8a8a8a;transform-origin:left;transform:scaleX(0.93);">---</div>
<div style="left:3302px;top:434px;width:128px;height:32px;background:#363636;border:1px solid #444;border-bottom:none;border-radius:3px 3px 0 0"></div>
<div class="t" style="left:3316.0px;top:437.6px;font-size:23.66px;color:#8a8a8a;transform-origin:left;transform:scaleX(0.93);">Definition</div>
<div style="left:3434px;top:432px;width:115px;height:34px;background:#444444;border-radius:3px 3px 0 0"></div>
<div class="t" style="left:3442.5px;top:437.6px;font-size:23.66px;color:#e8e8e8;transform-origin:left;transform:scaleX(0.93);">Controls</div>
<div style="left:3553px;top:434px;width:58px;height:32px;background:#363636;border:1px solid #444;border-bottom:none;border-radius:3px 3px 0 0"></div>
<div class="t" style="left:3569.0px;top:437.6px;font-size:23.66px;color:#8a8a8a;transform-origin:left;transform:scaleX(0.93);">---</div>
<div style="left:3244px;top:472px;width:548px;height:471px;background:#000;border:2px solid #555"></div>
<svg style="left:3246px;top:474px" width="544" height="467" viewBox="3246 474 544 467"><defs><linearGradient id="hbg" x1="0" y1="0" x2="0" y2="1"><stop offset="0" stop-color="#1c1c1c"/><stop offset="1" stop-color="#0c0c0c"/></linearGradient><radialGradient id="gball" cx="0.35" cy="0.35" r="0.7"><stop offset="0" stop-color="#7af07a"/><stop offset="0.6" stop-color="#3cc83c"/><stop offset="1" stop-color="#1a8a22"/></radialGradient><radialGradient id="wball" cx="0.35" cy="0.35" r="0.7"><stop offset="0" stop-color="#f0f0f0"/><stop offset="0.5" stop-color="#a8a8a8"/><stop offset="1" stop-color="#505050"/></radialGradient></defs><rect x="3366" y="474" width="303" height="467" fill="url(#hbg)"/><path d="M3518,498 C3530,498 3536,510 3535,525 C3534,540 3528,552 3526,560 C3540,572 3560,575 3570,582 C3585,595 3590,620 3595,650 C3602,680 3615,700 3620,720 C3624,735 3610,738 3600,725 C3590,700 3580,670 3572,640 C3568,680 3566,700 3562,720 C3560,760 3560,800 3558,850 C3556,880 3562,900 3560,915 L3540,915 C3538,880 3536,840 3530,800 C3526,770 3522,740 3518,728 C3514,740 3510,770 3506,800 C3500,840 3498,880 3496,915 L3476,915 C3474,900 3480,880 3478,850 C3476,800 3476,760 3474,720 C3470,700 3468,680 3464,640 C3456,670 3446,700 3436,725 C3426,738 3412,735 3416,720 C3421,700 3434,680 3441,650 C3446,620 3451,595 3466,582 C3476,575 3496,572 3510,560 C3508,552 3502,540 3501,525 C3500,510 3506,498 3518,498Z" fill="#080808" stroke="#6a6a6a" stroke-width="2.5"/><path d="M3518.6,520 L3518.6,591" stroke="#8c8c8c" stroke-width="8" stroke-linecap="round"/><path d="M3472,587 L3564,587" stroke="#8c8c8c" stroke-width="8" stroke-linecap="round"/><path d="M3518.6,591 L3518.6,684" stroke="#8c8c8c" stroke-width="8" stroke-linecap="round"/><path d="M3472,587 L3457,639" stroke="#8c8c8c" stroke-width="8" stroke-linecap="round"/><path d="M3457,639 L3432,708" stroke="#8c8c8c" stroke-width="8" stroke-linecap="round"/><path d="M3432,708 L3420,735" stroke="#8c8c8c" stroke-width="8" stroke-linecap="round"/><path d="M3564,587 L3580,639" stroke="#8c8c8c" stroke-width="8" stroke-linecap="round"/><path d="M3580,639 L3605,708" stroke="#8c8c8c" stroke-width="8" stroke-linecap="round"/><path d="M3605,708 L3617,735" stroke="#8c8c8c" stroke-width="8" stroke-linecap="round"/><path d="M3495,708 L3487,794" stroke="#8c8c8c" stroke-width="8" stroke-linecap="round"/><path d="M3487,794 L3484,891" stroke="#8c8c8c" stroke-width="8" stroke-linecap="round"/><path d="M3484,891 L3476,920" stroke="#8c8c8c" stroke-width="8" stroke-linecap="round"/><path d="M3543,708 L3550,794" stroke="#8c8c8c" stroke-width="8" stroke-linecap="round"/><path d="M3550,794 L3552,891" stroke="#8c8c8c" stroke-width="8" stroke-linecap="round"/><path d="M3552,891 L3560,920" stroke="#8c8c8c" stroke-width="8" stroke-linecap="round"/><circle cx="3518.6" cy="520" r="13" fill="url(#gball)"/><circle cx="3518.6" cy="591" r="14" fill="url(#wball)"/><circle cx="3472" cy="587" r="14" fill="url(#gball)"/><circle cx="3564" cy="587" r="14" fill="url(#gball)"/><circle cx="3457" cy="639" r="13" fill="url(#wball)"/><circle cx="3580" cy="639" r="13" fill="url(#wball)"/><circle cx="3432" cy="708" r="13" fill="url(#gball)"/><circle cx="3605" cy="708" r="13" fill="url(#gball)"/><circle cx="3518.6" cy="658" r="10" fill="url(#wball)"/><circle cx="3518.6" cy="684" r="13" fill="url(#gball)"/><circle cx="3495" cy="708" r="10" fill="url(#wball)"/><circle cx="3543" cy="708" r="10" fill="url(#wball)"/><circle cx="3487" cy="794" r="13" fill="url(#wball)"/><circle cx="3550" cy="794" r="13" fill="url(#wball)"/><circle cx="3484" cy="891" r="14" fill="url(#gball)"/><circle cx="3552" cy="891" r="14" fill="url(#gball)"/><circle cx="3518.6" cy="915" r="9" fill="url(#wball)"/><circle cx="3518.6" cy="915" r="10" fill="none" stroke="#40b8d0" stroke-width="2"/><circle cx="3401" cy="726" r="11" fill="#222" stroke="#888" stroke-width="2"/><path d="M3395,723 h12 l-6 7z" fill="#888"/><circle cx="3633" cy="726" r="11" fill="#222" stroke="#888" stroke-width="2"/><path d="M3627,723 h12 l-6 7z" fill="#888"/><circle cx="3451" cy="915" r="11" fill="#222" stroke="#888" stroke-width="2"/><path d="M3445,912 h12 l-6 7z" fill="#888"/><circle cx="3584" cy="915" r="11" fill="#222" stroke="#888" stroke-width="2"/><path d="M3578,912 h12 l-6 7z" fill="#888"/></svg>
<div style="left:3243px;top:1314px;width:550px;height:37px;background:#5d5d5d;border-radius:2px"></div>
<svg style="left:3255px;top:1323px" width="22" height="16" viewBox="0 0 22 16"><path d="M2 2h18L11 13z" fill="#e0e0e0"/></svg>
<div class="t" style="left:3292px;top:1321.6px;font-size:22.58px;color:#d8d8d8;transform-origin:left;transform:scaleX(0.93);font-weight:bold">HumanIK Controls</div>
<div class="t" style="right:315px;top:1363.1px;font-size:23.66px;color:#8a8a8a;transform-origin:right;transform:scaleX(0.93);">IK Blend T</div>
<div style="left:3531px;top:1357px;width:68px;height:37px;background:#3e3e3e;"></div>
<div class="t" style="left:3539px;top:1363.1px;font-size:23.66px;color:#777777;transform-origin:left;transform:scaleX(0.93);">1.00</div>
<div style="left:3605px;top:1371px;width:180px;height:9px;background:#3b3b3b;border-radius:4px"></div>
<div style="left:3770px;top:1361px;width:14px;height:28px;background:#676767;border-radius:2px"></div>
<div class="t" style="right:315px;top:1404.6px;font-size:23.66px;color:#8a8a8a;transform-origin:right;transform:scaleX(0.93);">IK Blend R</div>
<div style="left:3531px;top:1399px;width:68px;height:37px;background:#3e3e3e;"></div>
<div class="t" style="left:3539px;top:1404.6px;font-size:23.66px;color:#777777;transform-origin:left;transform:scaleX(0.93);">1.00</div>
<div style="left:3605px;top:1413px;width:180px;height:9px;background:#3b3b3b;border-radius:4px"></div>
<div style="left:3770px;top:1403px;width:14px;height:28px;background:#676767;border-radius:2px"></div>
<div class="t" style="right:315px;top:1446.2px;font-size:23.66px;color:#8a8a8a;transform-origin:right;transform:scaleX(0.93);">IK Pull</div>
<div style="left:3531px;top:1441px;width:68px;height:37px;background:#3e3e3e;"></div>
<div class="t" style="left:3539px;top:1446.2px;font-size:23.66px;color:#777777;transform-origin:left;transform:scaleX(0.93);">0.00</div>
<div style="left:3605px;top:1455px;width:180px;height:9px;background:#3b3b3b;border-radius:4px"></div>
<div style="left:3606px;top:1445px;width:14px;height:28px;background:#676767;border-radius:2px"></div>
<div style="left:3803px;top:284px;width:34px;height:291px;background:#3e3e3e;border:1px solid #4a4a4a;border-left:none;border-radius:0 3px 3px 0"></div>
<div class="t" style="left:3838px;top:298px;font-size:23.5px;color:#9a9a9a;transform-origin:0 0;transform:rotate(90deg) scaleX(0.93);">Channel Box / Layer Editor</div>
<div style="left:3803px;top:579px;width:34px;height:182px;background:#3e3e3e;border:1px solid #4a4a4a;border-left:none;border-radius:0 3px 3px 0"></div>
<div class="t" style="left:3838px;top:593px;font-size:23.5px;color:#9a9a9a;transform-origin:0 0;transform:rotate(90deg) scaleX(0.93);">Attribute Editor</div>
<div style="left:3803px;top:767px;width:34px;height:198px;background:#3e3e3e;border:1px solid #4a4a4a;border-left:none;border-radius:0 3px 3px 0"></div>
<div class="t" style="left:3838px;top:781px;font-size:23.5px;color:#9a9a9a;transform-origin:0 0;transform:rotate(90deg) scaleX(0.93);">Modeling Toolkit</div>
<div style="left:3803px;top:968px;width:34px;height:162px;background:#3e3e3e;border:1px solid #4a4a4a;border-left:none;border-radius:0 3px 3px 0"></div>
<div class="t" style="left:3838px;top:982px;font-size:23.5px;color:#9a9a9a;transform-origin:0 0;transform:rotate(90deg) scaleX(0.93);">Tool Settings</div>
<div style="left:3803px;top:1133px;width:34px;height:126px;background:#444444;border:1px solid #4a4a4a;border-left:none;border-radius:0 3px 3px 0"></div>
<div class="t" style="left:3838px;top:1147px;font-size:23.5px;color:#f0f0f0;transform-origin:0 0;transform:rotate(90deg) scaleX(0.93);">Human IK</div>
<div style="left:0px;top:1950px;width:3840px;height:6px;background:#444444;"></div>
<div style="left:0px;top:1950px;width:3840px;height:210px;background:#444444;"></div>
<div style="left:24px;top:1956px;width:3228px;height:64px;background:#2b2b2b;"></div>
<div style="left:24px;top:1956px;width:15px;height:64px;background:#4a4a4a;"></div>
<svg style="left:24px;top:1956px;" width="3228" height="64" viewBox="0 0 3228 64"><rect x="14.0" y="30" width="4" height="34" fill="#858585"/><rect x="54.0" y="30" width="4" height="34" fill="#858585"/><rect x="93.9" y="30" width="4" height="34" fill="#858585"/><rect x="133.9" y="30" width="4" height="34" fill="#858585"/><rect x="173.8" y="30" width="4" height="34" fill="#858585"/><rect x="213.8" y="30" width="4" height="34" fill="#858585"/><rect x="253.7" y="30" width="4" height="34" fill="#858585"/><rect x="293.7" y="30" width="4" height="34" fill="#858585"/><rect x="333.6" y="30" width="4" height="34" fill="#858585"/><rect x="373.6" y="30" width="4" height="34" fill="#858585"/><rect x="413.5" y="30" width="4" height="34" fill="#858585"/><rect x="453.5" y="30" width="4" height="34" fill="#858585"/><rect x="493.4" y="30" width="4" height="34" fill="#858585"/><rect x="533.4" y="30" width="4" height="34" fill="#858585"/><rect x="573.3" y="30" width="4" height="34" fill="#858585"/><rect x="613.2" y="30" width="4" height="34" fill="#858585"/><rect x="653.2" y="30" width="4" height="34" fill="#858585"/><rect x="693.2" y="30" width="4" height="34" fill="#858585"/><rect x="733.1" y="30" width="4" height="34" fill="#858585"/><rect x="773.1" y="30" width="4" height="34" fill="#858585"/><rect x="813.0" y="30" width="4" height="34" fill="#858585"/><rect x="853.0" y="30" width="4" height="34" fill="#858585"/><rect x="892.9" y="30" width="4" height="34" fill="#858585"/><rect x="932.9" y="30" width="4" height="34" fill="#858585"/><rect x="972.8" y="30" width="4" height="34" fill="#858585"/><rect x="1012.8" y="30" width="4" height="34" fill="#858585"/><rect x="1052.7" y="30" width="4" height="34" fill="#858585"/><rect x="1092.7" y="30" width="4" height="34" fill="#858585"/><rect x="1132.6" y="30" width="4" height="34" fill="#858585"/><rect x="1172.6" y="30" width="4" height="34" fill="#858585"/><rect x="1212.5" y="30" width="4" height="34" fill="#858585"/><rect x="1252.5" y="30" width="4" height="34" fill="#858585"/><rect x="1292.4" y="30" width="4" height="34" fill="#858585"/><rect x="1332.4" y="30" width="4" height="34" fill="#858585"/><rect x="1372.3" y="30" width="4" height="34" fill="#858585"/><rect x="1412.2" y="30" width="4" height="34" fill="#858585"/><rect x="1452.2" y="30" width="4" height="34" fill="#858585"/><rect x="1492.2" y="30" width="4" height="34" fill="#858585"/><rect x="1532.1" y="30" width="4" height="34" fill="#858585"/><rect x="1572.1" y="30" width="4" height="34" fill="#858585"/><rect x="1612.0" y="30" width="4" height="34" fill="#858585"/><rect x="1652.0" y="30" width="4" height="34" fill="#858585"/><rect x="1691.9" y="30" width="4" height="34" fill="#858585"/><rect x="1731.9" y="30" width="4" height="34" fill="#858585"/><rect x="1771.8" y="30" width="4" height="34" fill="#858585"/><rect x="1811.8" y="30" width="4" height="34" fill="#858585"/><rect x="1851.7" y="30" width="4" height="34" fill="#858585"/><rect x="1891.7" y="30" width="4" height="34" fill="#858585"/><rect x="1931.6" y="30" width="4" height="34" fill="#858585"/><rect x="1971.6" y="30" width="4" height="34" fill="#858585"/><rect x="2011.5" y="30" width="4" height="34" fill="#858585"/><rect x="2051.4" y="30" width="4" height="34" fill="#858585"/><rect x="2091.4" y="30" width="4" height="34" fill="#858585"/><rect x="2131.4" y="30" width="4" height="34" fill="#858585"/><rect x="2171.3" y="30" width="4" height="34" fill="#858585"/><rect x="2211.2" y="30" width="4" height="34" fill="#858585"/><rect x="2251.2" y="30" width="4" height="34" fill="#858585"/><rect x="2291.2" y="30" width="4" height="34" fill="#858585"/><rect x="2331.1" y="30" width="4" height="34" fill="#858585"/><rect x="2371.1" y="30" width="4" height="34" fill="#858585"/><rect x="2411.0" y="30" width="4" height="34" fill="#858585"/><rect x="2451.0" y="30" width="4" height="34" fill="#858585"/><rect x="2490.9" y="30" width="4" height="34" fill="#858585"/><rect x="2530.9" y="30" width="4" height="34" fill="#858585"/><rect x="2570.8" y="30" width="4" height="34" fill="#858585"/><rect x="2610.8" y="30" width="4" height="34" fill="#858585"/><rect x="2650.7" y="30" width="4" height="34" fill="#858585"/><rect x="2690.7" y="30" width="4" height="34" fill="#858585"/><rect x="2730.6" y="30" width="4" height="34" fill="#858585"/><rect x="2770.6" y="30" width="4" height="34" fill="#858585"/><rect x="2810.5" y="30" width="4" height="34" fill="#858585"/><rect x="2850.5" y="30" width="4" height="34" fill="#858585"/><rect x="2890.4" y="30" width="4" height="34" fill="#858585"/><rect x="2930.4" y="30" width="4" height="34" fill="#858585"/><rect x="2970.3" y="30" width="4" height="34" fill="#858585"/><rect x="3010.2" y="30" width="4" height="34" fill="#858585"/><rect x="3050.2" y="30" width="4" height="34" fill="#858585"/><rect x="3090.2" y="30" width="4" height="34" fill="#858585"/><rect x="3130.1" y="30" width="4" height="34" fill="#858585"/><rect x="3170.1" y="30" width="4" height="34" fill="#858585"/></svg>
<div class="t" style="left:49.0px;top:1956.6px;font-size:23.66px;color:#8c8c8c;transform-origin:left;transform:scaleX(0.93);">1</div>
<div class="t" style="left:88.95px;top:1956.6px;font-size:23.66px;color:#8c8c8c;transform-origin:left;transform:scaleX(0.93);">2</div>
<div class="t" style="left:128.9px;top:1956.6px;font-size:23.66px;color:#8c8c8c;transform-origin:left;transform:scaleX(0.93);">3</div>
<div class="t" style="left:168.85000000000002px;top:1956.6px;font-size:23.66px;color:#8c8c8c;transform-origin:left;transform:scaleX(0.93);">4</div>
<div class="t" style="left:208.8px;top:1956.6px;font-size:23.66px;color:#8c8c8c;transform-origin:left;transform:scaleX(0.93);">5</div>
<div class="t" style="left:248.75px;top:1956.6px;font-size:23.66px;color:#8c8c8c;transform-origin:left;transform:scaleX(0.93);">6</div>
<div class="t" style="left:288.70000000000005px;top:1956.6px;font-size:23.66px;color:#8c8c8c;transform-origin:left;transform:scaleX(0.93);">7</div>
<div class="t" style="left:328.65000000000003px;top:1956.6px;font-size:23.66px;color:#8c8c8c;transform-origin:left;transform:scaleX(0.93);">8</div>
<div class="t" style="left:368.6px;top:1956.6px;font-size:23.66px;color:#8c8c8c;transform-origin:left;transform:scaleX(0.93);">9</div>
<div class="t" style="left:408.55px;top:1956.6px;font-size:23.66px;color:#8c8c8c;transform-origin:left;transform:scaleX(0.93);">10</div>
<div class="t" style="left:448.5px;top:1956.6px;font-size:23.66px;color:#8c8c8c;transform-origin:left;transform:scaleX(0.93);">11</div>
<div class="t" style="left:488.45000000000005px;top:1956.6px;font-size:23.66px;color:#8c8c8c;transform-origin:left;transform:scaleX(0.93);">12</div>
<div class="t" style="left:528.4000000000001px;top:1956.6px;font-size:23.66px;color:#8c8c8c;transform-origin:left;transform:scaleX(0.93);">13</div>
<div class="t" style="left:568.35px;top:1956.6px;font-size:23.66px;color:#8c8c8c;transform-origin:left;transform:scaleX(0.93);">14</div>
<div class="t" style="left:608.3000000000001px;top:1956.6px;font-size:23.66px;color:#8c8c8c;transform-origin:left;transform:scaleX(0.93);">15</div>
<div class="t" style="left:648.25px;top:1956.6px;font-size:23.66px;color:#8c8c8c;transform-origin:left;transform:scaleX(0.93);">16</div>
<div class="t" style="left:688.2px;top:1956.6px;font-size:23.66px;color:#8c8c8c;transform-origin:left;transform:scaleX(0.93);">17</div>
<div class="t" style="left:728.1500000000001px;top:1956.6px;font-size:23.66px;color:#8c8c8c;transform-origin:left;transform:scaleX(0.93);">18</div>
<div class="t" style="left:768.1px;top:1956.6px;font-size:23.66px;color:#8c8c8c;transform-origin:left;transform:scaleX(0.93);">19</div>
<div class="t" style="left:808.0500000000001px;top:1956.6px;font-size:23.66px;color:#8c8c8c;transform-origin:left;transform:scaleX(0.93);">20</div>
<div class="t" style="left:848.0px;top:1956.6px;font-size:23.66px;color:#8c8c8c;transform-origin:left;transform:scaleX(0.93);">21</div>
<div class="t" style="left:887.95px;top:1956.6px;font-size:23.66px;color:#8c8c8c;transform-origin:left;transform:scaleX(0.93);">22</div>
<div class="t" style="left:927.9000000000001px;top:1956.6px;font-size:23.66px;color:#8c8c8c;transform-origin:left;transform:scaleX(0.93);">23</div>
<div class="t" style="left:967.85px;top:1956.6px;font-size:23.66px;color:#8c8c8c;transform-origin:left;transform:scaleX(0.93);">24</div>
<div class="t" style="left:1007.8000000000001px;top:1956.6px;font-size:23.66px;color:#8c8c8c;transform-origin:left;transform:scaleX(0.93);">25</div>
<div class="t" style="left:1047.75px;top:1956.6px;font-size:23.66px;color:#8c8c8c;transform-origin:left;transform:scaleX(0.93);">26</div>
<div class="t" style="left:1087.7px;top:1956.6px;font-size:23.66px;color:#8c8c8c;transform-origin:left;transform:scaleX(0.93);">27</div>
<div class="t" style="left:1127.65px;top:1956.6px;font-size:23.66px;color:#8c8c8c;transform-origin:left;transform:scaleX(0.93);">28</div>
<div class="t" style="left:1167.6000000000001px;top:1956.6px;font-size:23.66px;color:#8c8c8c;transform-origin:left;transform:scaleX(0.93);">29</div>
<div class="t" style="left:1207.5500000000002px;top:1956.6px;font-size:23.66px;color:#8c8c8c;transform-origin:left;transform:scaleX(0.93);">30</div>
<div class="t" style="left:1247.5px;top:1956.6px;font-size:23.66px;color:#8c8c8c;transform-origin:left;transform:scaleX(0.93);">31</div>
<div class="t" style="left:1287.45px;top:1956.6px;font-size:23.66px;color:#8c8c8c;transform-origin:left;transform:scaleX(0.93);">32</div>
<div class="t" style="left:1327.4px;top:1956.6px;font-size:23.66px;color:#8c8c8c;transform-origin:left;transform:scaleX(0.93);">33</div>
<div class="t" style="left:1367.3500000000001px;top:1956.6px;font-size:23.66px;color:#8c8c8c;transform-origin:left;transform:scaleX(0.93);">34</div>
<div class="t" style="left:1407.3000000000002px;top:1956.6px;font-size:23.66px;color:#8c8c8c;transform-origin:left;transform:scaleX(0.93);">35</div>
<div class="t" style="left:1447.25px;top:1956.6px;font-size:23.66px;color:#8c8c8c;transform-origin:left;transform:scaleX(0.93);">36</div>
<div class="t" style="left:1487.2px;top:1956.6px;font-size:23.66px;color:#8c8c8c;transform-origin:left;transform:scaleX(0.93);">37</div>
<div class="t" style="left:1527.15px;top:1956.6px;font-size:23.66px;color:#8c8c8c;transform-origin:left;transform:scaleX(0.93);">38</div>
<div class="t" style="left:1567.1000000000001px;top:1956.6px;font-size:23.66px;color:#8c8c8c;transform-origin:left;transform:scaleX(0.93);">39</div>
<div class="t" style="left:1607.0500000000002px;top:1956.6px;font-size:23.66px;color:#8c8c8c;transform-origin:left;transform:scaleX(0.93);">40</div>
<div class="t" style="left:1647.0px;top:1956.6px;font-size:23.66px;color:#8c8c8c;transform-origin:left;transform:scaleX(0.93);">41</div>
<div class="t" style="left:1686.95px;top:1956.6px;font-size:23.66px;color:#8c8c8c;transform-origin:left;transform:scaleX(0.93);">42</div>
<div class="t" style="left:1726.9px;top:1956.6px;font-size:23.66px;color:#8c8c8c;transform-origin:left;transform:scaleX(0.93);">43</div>
<div class="t" style="left:1766.8500000000001px;top:1956.6px;font-size:23.66px;color:#8c8c8c;transform-origin:left;transform:scaleX(0.93);">44</div>
<div class="t" style="left:1806.8000000000002px;top:1956.6px;font-size:23.66px;color:#8c8c8c;transform-origin:left;transform:scaleX(0.93);">45</div>
<div class="t" style="left:1846.7500000000002px;top:1956.6px;font-size:23.66px;color:#8c8c8c;transform-origin:left;transform:scaleX(0.93);">46</div>
<div class="t" style="left:1886.7px;top:1956.6px;font-size:23.66px;color:#8c8c8c;transform-origin:left;transform:scaleX(0.93);">47</div>
<div class="t" style="left:1926.65px;top:1956.6px;font-size:23.66px;color:#8c8c8c;transform-origin:left;transform:scaleX(0.93);">48</div>
<div class="t" style="left:1966.6000000000001px;top:1956.6px;font-size:23.66px;color:#8c8c8c;transform-origin:left;transform:scaleX(0.93);">49</div>
<div class="t" style="left:2006.5500000000002px;top:1956.6px;font-size:23.66px;color:#8c8c8c;transform-origin:left;transform:scaleX(0.93);">50</div>
<div class="t" style="left:2046.5000000000002px;top:1956.6px;font-size:23.66px;color:#8c8c8c;transform-origin:left;transform:scaleX(0.93);">51</div>
<div class="t" style="left:2086.45px;top:1956.6px;font-size:23.66px;color:#8c8c8c;transform-origin:left;transform:scaleX(0.93);">52</div>
<div class="t" style="left:2126.4px;top:1956.6px;font-size:23.66px;color:#8c8c8c;transform-origin:left;transform:scaleX(0.93);">53</div>
<div class="t" style="left:2166.3500000000004px;top:1956.6px;font-size:23.66px;color:#8c8c8c;transform-origin:left;transform:scaleX(0.93);">54</div>
<div class="t" style="left:2206.3px;top:1956.6px;font-size:23.66px;color:#8c8c8c;transform-origin:left;transform:scaleX(0.93);">55</div>
<div class="t" style="left:2246.25px;top:1956.6px;font-size:23.66px;color:#8c8c8c;transform-origin:left;transform:scaleX(0.93);">56</div>
<div class="t" style="left:2286.2000000000003px;top:1956.6px;font-size:23.66px;color:#8c8c8c;transform-origin:left;transform:scaleX(0.93);">57</div>
<div class="t" style="left:2326.15px;top:1956.6px;font-size:23.66px;color:#8c8c8c;transform-origin:left;transform:scaleX(0.93);">58</div>
<div class="t" style="left:2366.1000000000004px;top:1956.6px;font-size:23.66px;color:#8c8c8c;transform-origin:left;transform:scaleX(0.93);">59</div>
<div class="t" style="left:2406.05px;top:1956.6px;font-size:23.66px;color:#8c8c8c;transform-origin:left;transform:scaleX(0.93);">60</div>
<div class="t" style="left:2446.0px;top:1956.6px;font-size:23.66px;color:#8c8c8c;transform-origin:left;transform:scaleX(0.93);">61</div>
<div class="t" style="left:2485.9500000000003px;top:1956.6px;font-size:23.66px;color:#8c8c8c;transform-origin:left;transform:scaleX(0.93);">62</div>
<div class="t" style="left:2525.9px;top:1956.6px;font-size:23.66px;color:#8c8c8c;transform-origin:left;transform:scaleX(0.93);">63</div>
<div class="t" style="left:2565.8500000000004px;top:1956.6px;font-size:23.66px;color:#8c8c8c;transform-origin:left;transform:scaleX(0.93);">64</div>
<div class="t" style="left:2605.8px;top:1956.6px;font-size:23.66px;color:#8c8c8c;transform-origin:left;transform:scaleX(0.93);">65</div>
<div class="t" style="left:2645.75px;top:1956.6px;font-size:23.66px;color:#8c8c8c;transform-origin:left;transform:scaleX(0.93);">66</div>
<div class="t" style="left:2685.7000000000003px;top:1956.6px;font-size:23.66px;color:#8c8c8c;transform-origin:left;transform:scaleX(0.93);">67</div>
<div class="t" style="left:2725.65px;top:1956.6px;font-size:23.66px;color:#8c8c8c;transform-origin:left;transform:scaleX(0.93);">68</div>
<div class="t" style="left:2765.6000000000004px;top:1956.6px;font-size:23.66px;color:#8c8c8c;transform-origin:left;transform:scaleX(0.93);">69</div>
<div class="t" style="left:2805.55px;top:1956.6px;font-size:23.66px;color:#8c8c8c;transform-origin:left;transform:scaleX(0.93);">70</div>
<div class="t" style="left:2845.5px;top:1956.6px;font-size:23.66px;color:#8c8c8c;transform-origin:left;transform:scaleX(0.93);">71</div>
<div class="t" style="left:2885.4500000000003px;top:1956.6px;font-size:23.66px;color:#8c8c8c;transform-origin:left;transform:scaleX(0.93);">72</div>
<div class="t" style="left:2925.4px;top:1956.6px;font-size:23.66px;color:#8c8c8c;transform-origin:left;transform:scaleX(0.93);">73</div>
<div class="t" style="left:2965.3500000000004px;top:1956.6px;font-size:23.66px;color:#8c8c8c;transform-origin:left;transform:scaleX(0.93);">74</div>
<div class="t" style="left:3005.3px;top:1956.6px;font-size:23.66px;color:#8c8c8c;transform-origin:left;transform:scaleX(0.93);">75</div>
<div class="t" style="left:3045.25px;top:1956.6px;font-size:23.66px;color:#8c8c8c;transform-origin:left;transform:scaleX(0.93);">76</div>
<div class="t" style="left:3085.2000000000003px;top:1956.6px;font-size:23.66px;color:#8c8c8c;transform-origin:left;transform:scaleX(0.93);">77</div>
<div class="t" style="left:3125.15px;top:1956.6px;font-size:23.66px;color:#8c8c8c;transform-origin:left;transform:scaleX(0.93);">78</div>
<div class="t" style="left:3165.1000000000004px;top:1956.6px;font-size:23.66px;color:#8c8c8c;transform-origin:left;transform:scaleX(0.93);">79</div>
<div class="t" style="left:3205.05px;top:1956.6px;font-size:23.66px;color:#8c8c8c;transform-origin:left;transform:scaleX(0.93);">80</div>
<div style="left:3264px;top:1967px;width:179px;height:38px;background:#2b2b2b;border-radius:2px"></div>
<div class="t" style="left:3277px;top:1973.6px;font-size:23.66px;color:#d4d4d4;transform-origin:left;transform:scaleX(0.93);">0</div>
<div style="left:0px;top:2020px;width:3840px;height:9px;background:#373737;"></div>
<div style="left:25px;top:2037px;width:178px;height:52px;background:#2b2b2b;border-radius:3px"></div>
<div class="t" style="left:36px;top:2049.6px;font-size:23.66px;color:#e0e0e0;transform-origin:left;transform:scaleX(0.93);">1</div>
<div style="left:217px;top:2037px;width:178px;height:52px;background:#2b2b2b;border-radius:3px"></div>
<div class="t" style="left:228px;top:2049.6px;font-size:23.66px;color:#e0e0e0;transform-origin:left;transform:scaleX(0.93);">1</div>
<div style="left:405px;top:2037px;width:1886px;height:52px;background:#3a3a3a;border-radius:3px"></div>
<div style="left:417px;top:2041px;width:330px;height:40px;background:#5d5d5d;border-radius:4px"></div>
<div style="left:428px;top:2048px;width:26px;height:27px;background:#8e8e8e;border-radius:3px"></div>
<div style="left:711px;top:2048px;width:27px;height:27px;background:#8e8e8e;border-radius:3px"></div>
<div class="t" style="left:465px;top:2050.6px;font-size:23.66px;color:#d4d4d4;transform-origin:left;transform:scaleX(0.93);">1</div>
<div class="t" style="left:678px;top:2050.6px;font-size:23.66px;color:#d4d4d4;transform-origin:left;transform:scaleX(0.93);">80</div>
<div style="left:2305px;top:2037px;width:178px;height:52px;background:#2b2b2b;border-radius:3px"></div>
<div class="t" style="left:2316px;top:2050.6px;font-size:23.66px;color:#d4d4d4;transform-origin:left;transform:scaleX(0.93);">80</div>
<div style="left:2497px;top:2037px;width:178px;height:52px;background:#2b2b2b;border-radius:3px"></div>
<div class="t" style="left:2508px;top:2050.6px;font-size:23.66px;color:#d4d4d4;transform-origin:left;transform:scaleX(0.93);">530</div>
<div style="left:2836px;top:2038px;width:204px;height:49px;background:#3f3f3f;border:1px solid #4d4d4d;border-radius:3px"></div>
<div class="t" style="left:2846px;top:2050.6px;font-size:23.66px;color:#d4d4d4;transform-origin:left;transform:scaleX(0.93);">No Character Set</div>
<div style="left:3095px;top:2038px;width:203px;height:49px;background:#3f3f3f;border:1px solid #4d4d4d;border-radius:3px"></div>
<div class="t" style="left:3105px;top:2050.6px;font-size:23.66px;color:#d4d4d4;transform-origin:left;transform:scaleX(0.93);">No Anim Layer</div>
<div style="left:3343px;top:2046px;width:158px;height:34px;background:#5d5d5d;border-radius:2px"></div>
<div style="left:3462px;top:2046px;width:2px;height:34px;background:#4a4a4a;"></div>
<div class="t" style="left:3350px;top:2050.6px;font-size:23.66px;color:#bdbdbd;transform-origin:left;transform:scaleX(0.93);">24 fps</div>
<div style="left:0px;top:2094px;width:3840px;height:5px;background:#373737;"></div>
<div class="t" style="left:2002px;top:2117.6px;font-size:23.66px;color:#d4d4d4;transform-origin:left;transform:scaleX(0.93);">MEL</div>
<div style="left:2070px;top:2107px;width:845px;height:46px;background:#2b2b2b;border-radius:2px"></div>
<div style="left:2930px;top:2110px;width:846px;height:40px;background:#2b2b2b;"></div>
<div class="t" style="left:2941px;top:2117.6px;font-size:23.66px;color:#d4d4d4;transform-origin:left;transform:scaleX(0.93);">// Result: F:/Documents/PCMag/Maya/maya_review_project/maya_bot_pose.ma</div>
<svg style="left:4px;top:1952px;" width="12" height="66" viewBox="0 0 12 66"><rect x="0" y="2" width="2" height="2" fill="#8a8a8a"/><rect x="0" y="8" width="2" height="2" fill="#8a8a8a"/><rect x="0" y="14" width="2" height="2" fill="#8a8a8a"/><rect x="0" y="20" width="2" height="2" fill="#8a8a8a"/><rect x="0" y="26" width="2" height="2" fill="#8a8a8a"/><rect x="0" y="32" width="2" height="2" fill="#8a8a8a"/><rect x="0" y="38" width="2" height="2" fill="#8a8a8a"/><rect x="0" y="44" width="2" height="2" fill="#8a8a8a"/><rect x="0" y="50" width="2" height="2" fill="#8a8a8a"/><rect x="0" y="56" width="2" height="2" fill="#8a8a8a"/><rect x="0" y="62" width="2" height="2" fill="#8a8a8a"/><rect x="6" y="2" width="2" height="2" fill="#8a8a8a"/><rect x="6" y="8" width="2" height="2" fill="#8a8a8a"/><rect x="6" y="14" width="2" height="2" fill="#8a8a8a"/><rect x="6" y="20" width="2" height="2" fill="#8a8a8a"/><rect x="6" y="26" width="2" height="2" fill="#8a8a8a"/><rect x="6" y="32" width="2" height="2" fill="#8a8a8a"/><rect x="6" y="38" width="2" height="2" fill="#8a8a8a"/><rect x="6" y="44" width="2" height="2" fill="#8a8a8a"/><rect x="6" y="50" width="2" height="2" fill="#8a8a8a"/><rect x="6" y="56" width="2" height="2" fill="#8a8a8a"/><rect x="6" y="62" width="2" height="2" fill="#8a8a8a"/></svg>
<svg style="left:4px;top:2030px;" width="12" height="62" viewBox="0 0 12 62"><rect x="0" y="2" width="2" height="2" fill="#8a8a8a"/><rect x="0" y="8" width="2" height="2" fill="#8a8a8a"/><rect x="0" y="14" width="2" height="2" fill="#8a8a8a"/><rect x="0" y="20" width="2" height="2" fill="#8a8a8a"/><rect x="0" y="26" width="2" height="2" fill="#8a8a8a"/><rect x="0" y="32" width="2" height="2" fill="#8a8a8a"/><rect x="0" y="38" width="2" height="2" fill="#8a8a8a"/><rect x="0" y="44" width="2" height="2" fill="#8a8a8a"/><rect x="0" y="50" width="2" height="2" fill="#8a8a8a"/><rect x="0" y="56" width="2" height="2" fill="#8a8a8a"/><rect x="6" y="2" width="2" height="2" fill="#8a8a8a"/><rect x="6" y="8" width="2" height="2" fill="#8a8a8a"/><rect x="6" y="14" width="2" height="2" fill="#8a8a8a"/><rect x="6" y="20" width="2" height="2" fill="#8a8a8a"/><rect x="6" y="26" width="2" height="2" fill="#8a8a8a"/><rect x="6" y="32" width="2" height="2" fill="#8a8a8a"/><rect x="6" y="38" width="2" height="2" fill="#8a8a8a"/><rect x="6" y="44" width="2" height="2" fill="#8a8a8a"/><rect x="6" y="50" width="2" height="2" fill="#8a8a8a"/><rect x="6" y="56" width="2" height="2" fill="#8a8a8a"/></svg>
<svg style="left:4px;top:2100px;" width="12" height="60" viewBox="0 0 12 60"><rect x="0" y="2" width="2" height="2" fill="#8a8a8a"/><rect x="0" y="8" width="2" height="2" fill="#8a8a8a"/><rect x="0" y="14" width="2" height="2" fill="#8a8a8a"/><rect x="0" y="20" width="2" height="2" fill="#8a8a8a"/><rect x="0" y="26" width="2" height="2" fill="#8a8a8a"/><rect x="0" y="32" width="2" height="2" fill="#8a8a8a"/><rect x="0" y="38" width="2" height="2" fill="#8a8a8a"/><rect x="0" y="44" width="2" height="2" fill="#8a8a8a"/><rect x="0" y="50" width="2" height="2" fill="#8a8a8a"/><rect x="0" y="56" width="2" height="2" fill="#8a8a8a"/><rect x="6" y="2" width="2" height="2" fill="#8a8a8a"/><rect x="6" y="8" width="2" height="2" fill="#8a8a8a"/><rect x="6" y="14" width="2" height="2" fill="#8a8a8a"/><rect x="6" y="20" width="2" height="2" fill="#8a8a8a"/><rect x="6" y="26" width="2" height="2" fill="#8a8a8a"/><rect x="6" y="32" width="2" height="2" fill="#8a8a8a"/><rect x="6" y="38" width="2" height="2" fill="#8a8a8a"/><rect x="6" y="44" width="2" height="2" fill="#8a8a8a"/><rect x="6" y="50" width="2" height="2" fill="#8a8a8a"/><rect x="6" y="56" width="2" height="2" fill="#8a8a8a"/></svg>
<svg style="left:3460px;top:1968px" width="40" height="34" viewBox="0 0 40 34"><rect x="2" y="3" width="4" height="28" fill="#b8b8b8"/><path d="M20 3L7 17l13 14zM35 3L22 17l13 14z" fill="#b8b8b8"/></svg>
<svg style="left:3510px;top:1968px" width="32" height="34" viewBox="0 0 32 34"><rect x="2" y="3" width="4" height="28" fill="#b8b8b8"/><path d="M28 3L9 17l19 14z" fill="#b8b8b8"/></svg>
<svg style="left:3556px;top:1966px" width="32" height="38" viewBox="0 0 32 38"><rect x="2" y="8" width="5" height="24" fill="#e07a3a"/><path d="M4.5 2v4M4.5 34v4" stroke="#b8b8b8" stroke-width="1" stroke-dasharray="2 1"/><path d="M30 5L11 19l19 14z" fill="#b8b8b8"/></svg>
<svg style="left:3602px;top:1968px" width="32" height="34" viewBox="0 0 32 34"><path d="M30 2L4 17l26 15z" fill="#b8b8b8"/></svg>
<svg style="left:3648px;top:1968px" width="32" height="34" viewBox="0 0 32 34"><path d="M3 2l26 15L3 32z" fill="#b8b8b8"/></svg>
<svg style="left:3693px;top:1966px" width="34" height="38" viewBox="0 0 34 38"><path d="M2 5l19 14L2 33z" fill="#b8b8b8"/><rect x="24" y="8" width="5" height="24" fill="#e07a3a"/><path d="M26.5 2v4M26.5 34v4" stroke="#b8b8b8" stroke-width="1" stroke-dasharray="2 1"/></svg>
<svg style="left:3740px;top:1968px" width="32" height="34" viewBox="0 0 32 34"><path d="M3 3l19 14L3 31z" fill="#b8b8b8"/><rect x="25" y="3" width="4" height="28" fill="#b8b8b8"/></svg>
<svg style="left:3781px;top:1968px" width="40" height="34" viewBox="0 0 40 34"><path d="M3 3l13 14L3 31zM18 3l13 14-13 14z" fill="#b8b8b8"/><rect x="33" y="3" width="4" height="28" fill="#b8b8b8"/></svg>
<svg style="left:2682px;top:2040px;" width="6" height="44" viewBox="0 0 6 44"><rect x="2" y="0" width="2" height="44" fill="#7a7a7a"/><rect x="0" y="11" width="6" height="22" rx="1" fill="#7a7a7a"/></svg>
<svg style="left:2716px;top:2036px" width="36" height="50" viewBox="0 0 36 50"><path d="M3 6h22v36l-11-10-11 10z" fill="#e07040"/><path d="M24 2v16M16 10h16" stroke="#c4c4c4" stroke-width="3.5"/></svg>
<svg style="left:2769px;top:2040px;" width="6" height="44" viewBox="0 0 6 44"><rect x="2" y="0" width="2" height="44" fill="#7a7a7a"/><rect x="0" y="11" width="6" height="22" rx="1" fill="#7a7a7a"/></svg>
<svg style="left:2802px;top:2055px" width="24" height="14" viewBox="0 0 24 14"><path d="M2 2h20L12 12z" fill="#5a5a5a" stroke="#7a7a7a"/></svg>
<svg style="left:3059px;top:2055px" width="24" height="14" viewBox="0 0 24 14"><path d="M2 2h20L12 12z" fill="#5a5a5a" stroke="#7a7a7a"/></svg>
<svg style="left:3316px;top:2040px;" width="6" height="44" viewBox="0 0 6 44"><rect x="2" y="0" width="2" height="44" fill="#7a7a7a"/><rect x="0" y="11" width="6" height="22" rx="1" fill="#7a7a7a"/></svg>
<svg style="left:3480px;top:2056px" width="22" height="14" viewBox="0 0 22 14"><path d="M2 2h18L11 12z" fill="#c4c4c4"/></svg>
<svg style="left:3523px;top:2043px" width="40" height="40" viewBox="0 0 40 40"><path d="M6 20a12 12 0 0 1 12-12h12" fill="none" stroke="#c4c4c4" stroke-width="3.5"/><path d="M28 2l8 6-8 6z" fill="#c4c4c4"/><path d="M14 30H8a6 6 0 0 1-4-10" fill="none" stroke="#c4c4c4" stroke-width="3.5"/><circle cx="26" cy="28" r="10" fill="#c4c4c4" stroke="#444" stroke-width="2"/><text x="26" y="34" font-size="15" font-weight="bold" text-anchor="middle" fill="#444" font-family="Liberation Sans">1</text></svg>
<svg style="left:3581px;top:2040px" width="38" height="44" viewBox="0 0 38 44"><rect x="2" y="16" width="30" height="24" fill="none" stroke="#e07a3a" stroke-width="3"/><path d="M2 20h30M2 36h30" stroke="#e07a3a" stroke-width="2" stroke-dasharray="3 2"/><rect x="8" y="22" width="6" height="12" fill="#e07a3a"/><rect x="18" y="22" width="6" height="12" fill="#e07a3a"/><path d="M20 4h8l8 8-8 8h-8z" fill="#c4c4c4"/></svg>
<svg style="left:3640px;top:2040px;" width="6" height="44" viewBox="0 0 6 44"><rect x="2" y="0" width="2" height="44" fill="#7a7a7a"/><rect x="0" y="11" width="6" height="22" rx="1" fill="#7a7a7a"/></svg>
<svg style="left:3668px;top:2043px" width="40" height="38" viewBox="0 0 40 38"><path d="M2 13h8l12-10v32l-12-10H2z" fill="#c4c4c4"/><path d="M27 12a10 10 0 0 1 0 14M32 8a16 16 0 0 1 0 22" fill="none" stroke="#c4c4c4" stroke-width="2.5"/></svg>
<svg style="left:3726px;top:2043px" width="36" height="38" viewBox="0 0 36 38"><path d="M6 12a14 14 0 0 1 26 4M30 26a14 14 0 0 1-26-4" fill="none" stroke="#c4c4c4" stroke-width="3"/><path d="M32 6v10h-10zM4 32V22h10z" fill="#c4c4c4"/><rect x="16" y="10" width="4" height="18" fill="#e07a3a"/><path d="M10 19h16" stroke="#c4c4c4" stroke-width="2.5"/></svg>
<svg style="left:3782px;top:2038px" width="40" height="46" viewBox="0 0 40 46"><circle cx="10" cy="10" r="6" fill="none" stroke="#c4c4c4" stroke-width="3"/><circle cx="10" cy="10" r="9" fill="none" stroke="#c4c4c4" stroke-width="2.5" stroke-dasharray="3 3"/><circle cx="30" cy="12" r="4" fill="#e07a3a"/><path d="M28 18l-6 12 8 6-2 10M22 30l-8 8M26 22l8 6" stroke="#e07a3a" stroke-width="4" fill="none"/></svg>
<svg style="left:26px;top:2114px" width="34" height="34" viewBox="0 0 34 34"><circle cx="17" cy="17" r="16" fill="#8a8a8a"/><path d="M11 13a6 6 0 1 1 8 5v3" fill="none" stroke="#444" stroke-width="3.5"/><rect x="16" y="23" width="5" height="4" fill="#444"/></svg>
<svg style="left:3787px;top:2110px" width="40" height="38" viewBox="0 0 40 38"><rect x="2" y="2" width="36" height="34" fill="#c4c4c4"/><rect x="2" y="8" width="36" height="2" fill="#444"/><rect x="5" y="4" width="2" height="2" fill="#444"/><rect x="9" y="4" width="2" height="2" fill="#444"/><rect x="13" y="4" width="2" height="2" fill="#444"/><text x="20" y="30" font-size="17" text-anchor="middle" fill="#444" font-family="Liberation Mono">{;}</text></svg>
<svg style="left:2920px;top:2112px" width="6" height="36" viewBox="0 0 6 36"><rect x="2" y="2" width="2" height="2" fill="#8a8a8a"/><rect x="2" y="8" width="2" height="2" fill="#8a8a8a"/><rect x="2" y="14" width="2" height="2" fill="#8a8a8a"/><rect x="2" y="20" width="2" height="2" fill="#8a8a8a"/><rect x="2" y="26" width="2" height="2" fill="#8a8a8a"/><rect x="2" y="32" width="2" height="2" fill="#8a8a8a"/></svg>
</body></html>
